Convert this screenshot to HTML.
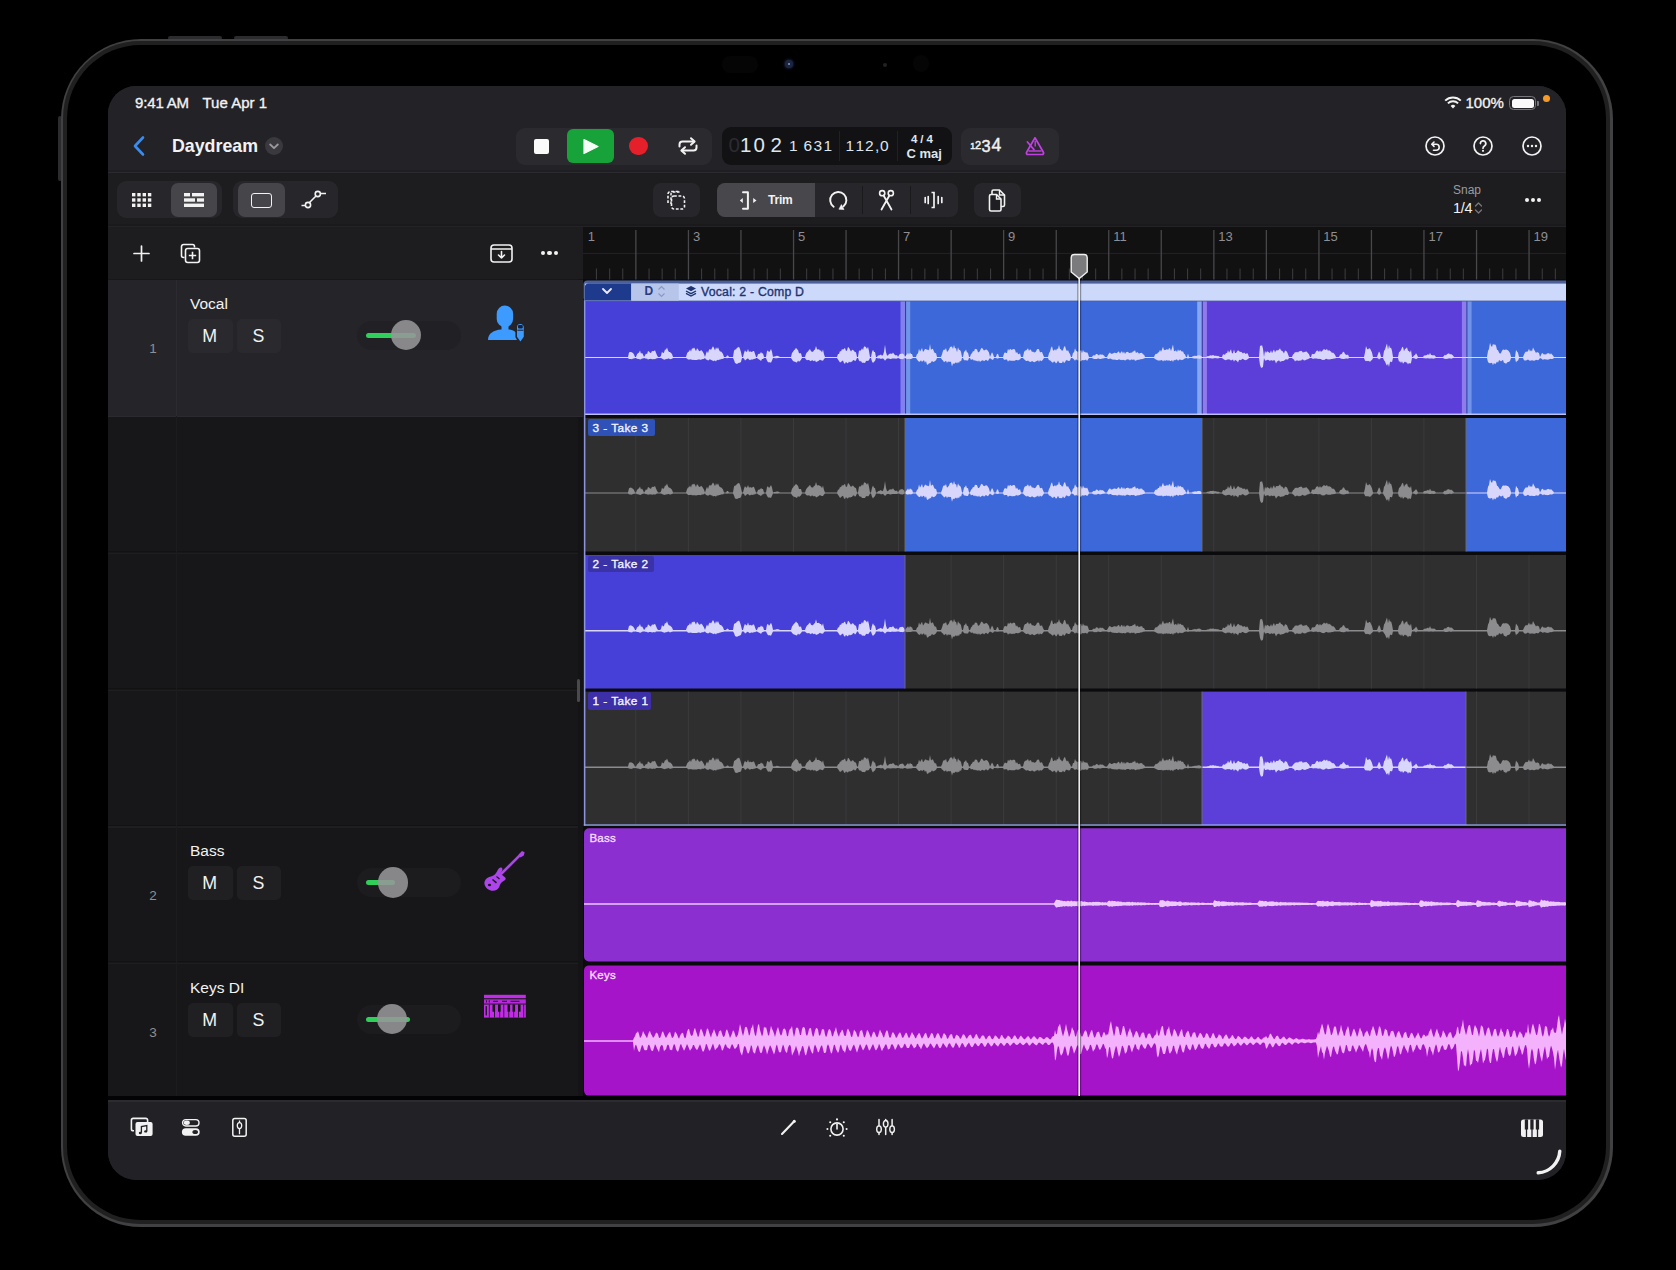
<!DOCTYPE html><html><head><meta charset="utf-8"><style>html,body{margin:0;padding:0;background:#000;width:1676px;height:1270px;overflow:hidden;position:relative;font-family:"Liberation Sans",sans-serif;}</style></head><body><div style="position:absolute;left:168px;top:36px;width:54px;height:4px;background:#2c2c2e;border-radius:2px;"></div><div style="position:absolute;left:234px;top:36px;width:54px;height:4px;background:#2c2c2e;border-radius:2px;"></div><div style="position:absolute;left:57.5px;top:116px;width:4px;height:65px;background:#2c2c2e;border-radius:2px;"></div><div style="position:absolute;left:60.5px;top:38.5px;width:1552px;height:1188px;border-radius:80px;background:#414143;"></div><div style="position:absolute;left:63.3px;top:41.3px;width:1546.4px;height:1182.4px;border-radius:77px;background:#202021;"></div><div style="position:absolute;left:66.8px;top:44.8px;width:1539.4px;height:1175.4px;border-radius:73.5px;background:#000;"></div><div style="position:absolute;left:785px;top:60px;width:8px;height:8px;background:#1c2540;border-radius:50%;box-shadow:0 0 3px #2a3a70;"></div><div style="position:absolute;left:788px;top:63px;width:2px;height:2px;background:#8898c0;border-radius:50%;"></div><div style="position:absolute;left:883px;top:63px;width:4px;height:4px;background:#222;border-radius:50%;"></div><div style="position:absolute;left:722px;top:56px;width:36px;height:17px;background:#050505;border-radius:8px;"></div><div style="position:absolute;left:913px;top:55px;width:16px;height:17px;background:#050505;border-radius:8px;"></div><div style="position:absolute;left:108px;top:86px;width:1458px;height:1094px;border-radius:28px;overflow:hidden;background:#232327;"><div style="position:absolute;left:-108px;top:-86px;width:1676px;height:1270px;"><div style="position:absolute;left:108px;top:86px;width:1458px;height:86px;background:#232327;"></div><div style="position:absolute;left:108px;top:169.5px;width:1458px;height:2.5px;background:#1f1f23;"></div><div style="position:absolute;left:108px;top:172px;width:1458px;height:1.2px;background:#2b2b2f;"></div><div style="position:absolute;left:108px;top:173.2px;width:1458px;height:52.8px;background:#1d1d1f;"></div><div style="position:absolute;left:108px;top:223.9px;width:1458px;height:1.8px;background:#1a1a1c;"></div><div style="position:absolute;left:108px;top:225.9px;width:1458px;height:1.2px;background:#232325;"></div><div style="position:absolute;left:108px;top:227.1px;width:475px;height:52.4px;background:#1d1d1f;"></div><div style="position:absolute;left:583px;top:227px;width:983px;height:52px;background:#111112;"></div><div style="position:absolute;left:108px;top:279px;width:470px;height:821px;background:#171719;"></div><div style="position:absolute;left:577.6px;top:279px;width:6px;height:821px;background:#141416;"></div><div style="position:absolute;left:583.3px;top:279px;width:982.7px;height:821px;background:#0b0b0e;"></div><div style="position:absolute;left:108px;top:1096px;width:1458px;height:4px;background:#030305;"></div><div style="position:absolute;left:108px;top:1100px;width:1458px;height:80px;background:#222226;"></div><div style="position:absolute;left:108px;top:1100px;width:1458px;height:1.6px;background:#2c2c30;"></div><div style="position:absolute;left:135px;top:94px;white-space:nowrap;font-family:'Liberation Sans',sans-serif;font-size:15px;color:#f2f2f2;letter-spacing:-0.1px;-webkit-text-stroke:0.35px currentColor;">9:41&#8201;AM</div><div style="position:absolute;left:202.5px;top:94px;white-space:nowrap;font-family:'Liberation Sans',sans-serif;font-size:15px;color:#f2f2f2;letter-spacing:0px;-webkit-text-stroke:0.35px currentColor;">Tue Apr 1</div><svg style="position:absolute;left:1444px;top:96px;" width="18" height="13" viewBox="0 0 18 13"><path d="M9 12.5 L6.6 9.9 A3.4 3.4 0 0 1 11.4 9.9 Z" fill="#f2f2f2"/><path d="M3.9 7.4 A7.3 7.3 0 0 1 14.1 7.4" stroke="#f2f2f2" stroke-width="2" fill="none"/><path d="M1.2 4.6 A11.2 11.2 0 0 1 16.8 4.6" stroke="#f2f2f2" stroke-width="2" fill="none"/></svg><div style="position:absolute;left:1465.5px;top:94px;white-space:nowrap;font-family:'Liberation Sans',sans-serif;font-size:15px;color:#f2f2f2;-webkit-text-stroke:0.35px currentColor;">100%</div><div style="position:absolute;left:1509px;top:96px;width:27px;height:14px;box-sizing:border-box;border:1.5px solid #77777b;border-radius:4.5px;"></div><div style="position:absolute;left:1511.5px;top:98.5px;width:22px;height:9px;background:#fafafa;border-radius:2.5px;"></div><div style="position:absolute;left:1537px;top:100.5px;width:2px;height:5px;background:#77777b;border-radius:0 1px 1px 0;"></div><div style="position:absolute;left:1543px;top:95px;width:7px;height:7px;background:#f39a2b;border-radius:50%;"></div><svg style="position:absolute;left:130px;top:135px;" width="18" height="22" viewBox="0 0 18 22"><path d="M13 2.5 L5 11 L13 19.5" stroke="#3b8cf0" stroke-width="2.6" fill="none" stroke-linecap="round" stroke-linejoin="round"/></svg><div style="position:absolute;left:172px;top:135.5px;white-space:nowrap;font-family:'Liberation Sans',sans-serif;font-size:17.8px;color:#f2f2f2;font-weight:bold;">Daydream</div><div style="position:absolute;left:265px;top:137px;width:18px;height:18px;background:#3a3a3e;border-radius:50%;"></div><svg style="position:absolute;left:265px;top:137px;" width="18" height="18" viewBox="0 0 18 18"><path d="M5.2 7.5 L9 11.2 L12.8 7.5" stroke="#9a9aa0" stroke-width="1.8" fill="none" stroke-linecap="round" stroke-linejoin="round"/></svg><div style="position:absolute;left:516px;top:128px;width:196px;height:37px;background:#2b2b2f;border-radius:9px;"></div><div style="position:absolute;left:533.5px;top:138.5px;width:15px;height:15px;background:#fafafa;border-radius:2px;"></div><div style="position:absolute;left:567px;top:129px;width:47px;height:34px;background:#17a23a;border-radius:6px;"></div><svg style="position:absolute;left:582px;top:138px;" width="18" height="17" viewBox="0 0 18 17"><path d="M2 1.5 L16 8.5 L2 15.5 Z" fill="#f4fff6" stroke="#f4fff6" stroke-width="1.2" stroke-linejoin="round"/></svg><div style="position:absolute;left:629.4px;top:136.8px;width:18.5px;height:18.5px;background:#e5202b;border-radius:50%;"></div><svg style="position:absolute;left:676px;top:136px;" width="24" height="20" viewBox="0 0 24 20"><path d="M3.5 10.5 V8.5 A3 3 0 0 1 6.5 5.5 H18" stroke="#f2f2f2" stroke-width="2" fill="none" stroke-linecap="round"/><path d="M15 2.2 L18.6 5.5 L15 8.8" stroke="#f2f2f2" stroke-width="2" fill="none" stroke-linecap="round" stroke-linejoin="round"/><path d="M20.5 9.5 V11.5 A3 3 0 0 1 17.5 14.5 H6" stroke="#f2f2f2" stroke-width="2" fill="none" stroke-linecap="round"/><path d="M9 11.2 L5.4 14.5 L9 17.8" stroke="#f2f2f2" stroke-width="2" fill="none" stroke-linecap="round" stroke-linejoin="round"/></svg><div style="position:absolute;left:722px;top:127px;width:230px;height:38px;background:#121214;border-radius:9px;"></div><div style="position:absolute;left:728.5px;top:135.2px;white-space:nowrap;font-family:'Liberation Sans',sans-serif;font-size:20.5px;color:#2a2c31;line-height:1;">0</div><div style="position:absolute;left:740px;top:135.2px;white-space:nowrap;font-family:'Liberation Sans',sans-serif;font-size:20.5px;color:#dfe6ee;line-height:1;">1</div><div style="position:absolute;left:753.5px;top:135.2px;white-space:nowrap;font-family:'Liberation Sans',sans-serif;font-size:20.5px;color:#dfe6ee;line-height:1;">0</div><div style="position:absolute;left:770.5px;top:135.2px;white-space:nowrap;font-family:'Liberation Sans',sans-serif;font-size:20.5px;color:#dfe6ee;line-height:1;">2</div><div style="position:absolute;left:789px;top:138px;white-space:nowrap;font-family:'Liberation Sans',sans-serif;font-size:15.5px;color:#dfe6ee;line-height:1;">1</div><div style="position:absolute;left:803.5px;top:138px;white-space:nowrap;font-family:'Liberation Sans',sans-serif;font-size:15.5px;color:#dfe6ee;line-height:1;">6</div><div style="position:absolute;left:813.5px;top:138px;white-space:nowrap;font-family:'Liberation Sans',sans-serif;font-size:15.5px;color:#dfe6ee;line-height:1;">3</div><div style="position:absolute;left:823.5px;top:138px;white-space:nowrap;font-family:'Liberation Sans',sans-serif;font-size:15.5px;color:#dfe6ee;line-height:1;">1</div><div style="position:absolute;left:845.5px;top:138px;white-space:nowrap;font-family:'Liberation Sans',sans-serif;font-size:15.5px;color:#dfe6ee;line-height:1;">1</div><div style="position:absolute;left:855.5px;top:138px;white-space:nowrap;font-family:'Liberation Sans',sans-serif;font-size:15.5px;color:#dfe6ee;line-height:1;">1</div><div style="position:absolute;left:865px;top:138px;white-space:nowrap;font-family:'Liberation Sans',sans-serif;font-size:15.5px;color:#dfe6ee;line-height:1;">2</div><div style="position:absolute;left:875px;top:138px;white-space:nowrap;font-family:'Liberation Sans',sans-serif;font-size:15.5px;color:#dfe6ee;line-height:1;">,</div><div style="position:absolute;left:880px;top:138px;white-space:nowrap;font-family:'Liberation Sans',sans-serif;font-size:15.5px;color:#dfe6ee;line-height:1;">0</div><div style="position:absolute;left:839px;top:131px;width:1px;height:30px;background:#202124;"></div><div style="position:absolute;left:896.5px;top:131px;width:1px;height:30px;background:#202124;"></div><div style="position:absolute;left:911px;top:133.5px;white-space:nowrap;font-family:'Liberation Sans',sans-serif;font-size:11.5px;color:#dfe6ee;font-weight:bold;line-height:1;letter-spacing:0.3px;">4&#8201;/&#8201;4</div><div style="position:absolute;left:906.5px;top:146.5px;white-space:nowrap;font-family:'Liberation Sans',sans-serif;font-size:13px;color:#dfe6ee;font-weight:bold;line-height:1;">C maj</div><div style="position:absolute;left:961px;top:128px;width:98px;height:37px;background:#2b2b2f;border-radius:9px;"></div><div style="position:absolute;left:970.2px;top:141.8px;white-space:nowrap;font-family:'Liberation Sans',sans-serif;font-size:8.8px;color:#f2f2f2;line-height:1;-webkit-text-stroke:0.45px currentColor;">1</div><div style="position:absolute;left:975px;top:140.4px;white-space:nowrap;font-family:'Liberation Sans',sans-serif;font-size:11px;color:#f2f2f2;line-height:1;-webkit-text-stroke:0.45px currentColor;">2</div><div style="position:absolute;left:981.6px;top:137.8px;white-space:nowrap;font-family:'Liberation Sans',sans-serif;font-size:16.3px;color:#f2f2f2;line-height:1;-webkit-text-stroke:0.45px currentColor;">3</div><div style="position:absolute;left:991.4px;top:137.1px;white-space:nowrap;font-family:'Liberation Sans',sans-serif;font-size:17.5px;color:#f2f2f2;line-height:1;-webkit-text-stroke:0.45px currentColor;">4</div><svg style="position:absolute;left:1024px;top:135px;" width="23" height="22" viewBox="0 0 23 22"><path d="M11 2.8 L2.6 17.2 A1.5 1.5 0 0 0 3.9 19.5 H18.1 A1.5 1.5 0 0 0 19.4 17.2 Z" stroke="#c23fe3" stroke-width="1.7" fill="none" stroke-linejoin="round"/><path d="M4.5 15.9 H17.5" stroke="#c23fe3" stroke-width="1.5"/><path d="M3.4 7 L10 14.6" stroke="#c23fe3" stroke-width="1.7" stroke-linecap="round"/><path d="M11.2 6.5 V11" stroke="#c23fe3" stroke-width="1.4" stroke-linecap="round"/></svg><svg style="position:absolute;left:1423.7px;top:135.2px;" width="22" height="22" viewBox="0 0 22 22"><circle cx="11" cy="11" r="9" stroke="#f2f2f2" stroke-width="1.7" fill="none"/><path d="M8.3 9.2 H12.2 A3 3 0 0 1 12.2 15.2 H9.5" stroke="#f2f2f2" stroke-width="1.6" fill="none" stroke-linecap="round"/><path d="M10 7 L7.8 9.2 L10 11.4" stroke="#f2f2f2" stroke-width="1.6" fill="none" stroke-linecap="round" stroke-linejoin="round"/></svg><svg style="position:absolute;left:1472px;top:135.2px;" width="22" height="22" viewBox="0 0 22 22"><circle cx="11" cy="11" r="9" stroke="#f2f2f2" stroke-width="1.7" fill="none"/><path d="M8.4 8.6 A2.7 2.7 0 1 1 12.4 10.9 C11.4 11.5 11 12 11 13.2" stroke="#f2f2f2" stroke-width="1.7" fill="none" stroke-linecap="round"/><circle cx="11" cy="15.8" r="1.1" fill="#f2f2f2"/></svg><svg style="position:absolute;left:1521px;top:135.2px;" width="22" height="22" viewBox="0 0 22 22"><circle cx="11" cy="11" r="9" stroke="#f2f2f2" stroke-width="1.7" fill="none"/><circle cx="7" cy="11" r="1.2" fill="#f2f2f2"/><circle cx="11" cy="11" r="1.2" fill="#f2f2f2"/><circle cx="15" cy="11" r="1.2" fill="#f2f2f2"/></svg><div style="position:absolute;left:117px;top:181px;width:105px;height:37px;background:#27272b;border-radius:9px;"></div><div style="position:absolute;left:171px;top:183px;width:46px;height:33.5px;background:#46464a;border-radius:7px;"></div><svg style="position:absolute;left:132px;top:193px;" width="20" height="14" viewBox="0 0 20 14"><rect x="0.0" y="0.0" width="3.4" height="3.4" fill="#f2f2f2"/><rect x="5.3" y="0.0" width="3.4" height="3.4" fill="#f2f2f2"/><rect x="10.6" y="0.0" width="3.4" height="3.4" fill="#f2f2f2"/><rect x="15.9" y="0.0" width="3.4" height="3.4" fill="#f2f2f2"/><rect x="0.0" y="5.3" width="3.4" height="3.4" fill="#f2f2f2"/><rect x="5.3" y="5.3" width="3.4" height="3.4" fill="#f2f2f2"/><rect x="10.6" y="5.3" width="3.4" height="3.4" fill="#f2f2f2"/><rect x="15.9" y="5.3" width="3.4" height="3.4" fill="#f2f2f2"/><rect x="0.0" y="10.6" width="3.4" height="3.4" fill="#f2f2f2"/><rect x="5.3" y="10.6" width="3.4" height="3.4" fill="#f2f2f2"/><rect x="10.6" y="10.6" width="3.4" height="3.4" fill="#f2f2f2"/><rect x="15.9" y="10.6" width="3.4" height="3.4" fill="#f2f2f2"/></svg><svg style="position:absolute;left:183.5px;top:193px;" width="20" height="14" viewBox="0 0 20 14"><rect x="0" y="0" width="6" height="3.4" fill="#f2f2f2"/><rect x="8" y="0" width="12" height="3.4" fill="#f2f2f2"/><rect x="0" y="5.3" width="11" height="3.4" fill="#f2f2f2"/><rect x="13" y="5.3" width="7" height="3.4" fill="#f2f2f2"/><rect x="0" y="10.6" width="20" height="3.4" fill="#f2f2f2"/></svg><div style="position:absolute;left:233px;top:181px;width:105px;height:37px;background:#27272b;border-radius:9px;"></div><div style="position:absolute;left:238px;top:183px;width:46.5px;height:33.5px;background:#46464a;border-radius:7px;"></div><div style="position:absolute;left:251px;top:192.5px;width:20.5px;height:15.5px;box-sizing:border-box;border:1.8px solid #f2f2f2;border-radius:3px;"></div><svg style="position:absolute;left:300px;top:190px;" width="28" height="19" viewBox="0 0 28 19"><path d="M1.5 15.5 H6" stroke="#f2f2f2" stroke-width="1.6"/><path d="M20.5 3.5 H26" stroke="#f2f2f2" stroke-width="1.6"/><path d="M9 13 L16 6" stroke="#f2f2f2" stroke-width="1.6"/><circle cx="8" cy="15" r="2.6" stroke="#f2f2f2" stroke-width="1.6" fill="none"/><circle cx="17.8" cy="4" r="2.6" stroke="#f2f2f2" stroke-width="1.6" fill="none"/></svg><div style="position:absolute;left:653px;top:183px;width:47px;height:34px;background:#27272b;border-radius:8px;"></div><svg style="position:absolute;left:666px;top:190px;" width="21" height="21" viewBox="0 0 21 21"><path d="M5 14 V4 A2 2 0 0 1 7 2 H15" stroke="#f2f2f2" stroke-width="1.5" fill="none" stroke-dasharray="2.6 1.6"/><rect x="5.5" y="6" width="13" height="13" rx="2.5" stroke="#f2f2f2" stroke-width="1.6" fill="none" stroke-dasharray="2.8 1.7"/><path d="M2 13 V4 A2.5 2.5 0 0 1 4.5 1.5 H13" stroke="#f2f2f2" stroke-width="1.6" fill="none" stroke-dasharray="2.8 1.7"/></svg><div style="position:absolute;left:717px;top:183px;width:240.5px;height:34px;background:#27272b;border-radius:8px;"></div><div style="position:absolute;left:717px;top:183px;width:97.5px;height:34px;background:#48484c;border-radius:8px 0 0 8px;"></div><svg style="position:absolute;left:738px;top:190px;" width="20" height="20" viewBox="0 0 20 20"><path d="M5 2.3 H9.9 V18.8 H5" stroke="#f2f2f2" stroke-width="2" fill="none" stroke-linejoin="round" stroke-linecap="round"/><path d="M1.8 10.5 L4.8 8 V13 Z" fill="#f2f2f2"/><path d="M18.5 10.5 L15.2 8 V13 Z" fill="#f2f2f2"/></svg><div style="position:absolute;left:768px;top:193.5px;white-space:nowrap;font-family:'Liberation Sans',sans-serif;font-size:12px;color:#f2f2f2;font-weight:bold;letter-spacing:-0.2px;line-height:1;">Trim</div><svg style="position:absolute;left:825px;top:187px;" width="28" height="26" viewBox="0 0 28 26"><path d="M8.65 19.74 A8.1 8.1 0 1 1 18.5 19.3" stroke="#f2f2f2" stroke-width="1.9" fill="none" stroke-linecap="round"/><path d="M16.4 17.6 L13.9 22.2 L19 22.6 Z" fill="#f2f2f2" stroke="#f2f2f2" stroke-width="0.6" stroke-linejoin="round"/></svg><div style="position:absolute;left:862px;top:186px;width:1px;height:28px;background:#1a1a1d;"></div><svg style="position:absolute;left:876px;top:189px;" width="21" height="22" viewBox="0 0 21 22"><circle cx="6.2" cy="4.2" r="2.6" stroke="#f2f2f2" stroke-width="1.6" fill="none"/><circle cx="14.8" cy="4.2" r="2.6" stroke="#f2f2f2" stroke-width="1.6" fill="none"/><path d="M7.6 6.5 L15.5 20.5 M13.4 6.5 L5.5 20.5" stroke="#f2f2f2" stroke-width="1.8" fill="none" stroke-linecap="round"/></svg><div style="position:absolute;left:910px;top:186px;width:1px;height:28px;background:#1a1a1d;"></div><svg style="position:absolute;left:923px;top:190px;" width="22" height="20" viewBox="0 0 22 20"><path d="M8.5 2.5 H11 V17.5 H8.5" stroke="#f2f2f2" stroke-width="1.7" fill="none"/><path d="M2.2 7.5 V12.5 M5.2 6.5 V13.5 M15.2 6.5 V13.5 M18.8 7.5 V12.5" stroke="#f2f2f2" stroke-width="1.7" stroke-linecap="round"/></svg><div style="position:absolute;left:973.5px;top:183px;width:47px;height:34px;background:#27272b;border-radius:8px;"></div><svg style="position:absolute;left:986px;top:188px;" width="22" height="25" viewBox="0 0 22 25"><path d="M6 6.5 V3.5 A1.5 1.5 0 0 1 7.5 2 H13.5 L18.5 7 V17 A1.5 1.5 0 0 1 17 18.5 H15" stroke="#f2f2f2" stroke-width="1.6" fill="none" stroke-linejoin="round"/><path d="M3.5 8 A1.5 1.5 0 0 1 5 6.5 H10.5 L15 11 V21.5 A1.5 1.5 0 0 1 13.5 23 H5 A1.5 1.5 0 0 1 3.5 21.5 Z" stroke="#f2f2f2" stroke-width="1.6" fill="#1f1f23" stroke-linejoin="round"/><path d="M10.5 6.5 V11 H15" stroke="#f2f2f2" stroke-width="1.4" fill="none"/><path d="M13.5 2 V7 H18.5" stroke="#f2f2f2" stroke-width="1.4" fill="none"/></svg><div style="position:absolute;left:1453px;top:183px;white-space:nowrap;font-family:'Liberation Sans',sans-serif;font-size:12px;color:#9b9ba1;">Snap</div><div style="position:absolute;left:1453px;top:199.5px;white-space:nowrap;font-family:'Liberation Sans',sans-serif;font-size:14.5px;color:#f2f2f2;letter-spacing:-0.3px;">1/4</div><svg style="position:absolute;left:1474px;top:201px;" width="9" height="14" viewBox="0 0 9 14"><path d="M1.5 5 L4.5 2 L7.5 5 M1.5 9 L4.5 12 L7.5 9" stroke="#77777c" stroke-width="1.3" fill="none" stroke-linecap="round" stroke-linejoin="round"/></svg><div style="position:absolute;left:1524.5px;top:197.7px;width:4.2px;height:4.2px;background:#f2f2f2;border-radius:50%;"></div><div style="position:absolute;left:1530.7px;top:197.7px;width:4.2px;height:4.2px;background:#f2f2f2;border-radius:50%;"></div><div style="position:absolute;left:1536.9px;top:197.7px;width:4.2px;height:4.2px;background:#f2f2f2;border-radius:50%;"></div><svg style="position:absolute;left:133px;top:245px;" width="17" height="17" viewBox="0 0 17 17"><path d="M8.5 1 V16 M1 8.5 H16" stroke="#f2f2f2" stroke-width="1.7" stroke-linecap="round"/></svg><svg style="position:absolute;left:180px;top:243px;" width="22" height="22" viewBox="0 0 22 22"><path d="M4.5 14.5 H3.5 A2 2 0 0 1 1.5 12.5 V3.5 A2 2 0 0 1 3.5 1.5 H12.5 A2 2 0 0 1 14.5 3.5 V4.5" stroke="#f2f2f2" stroke-width="1.6" fill="none"/><rect x="5.5" y="5.5" width="14" height="14" rx="2.2" stroke="#f2f2f2" stroke-width="1.6" fill="none"/><path d="M12.5 8.8 V16.2 M8.8 12.5 H16.2" stroke="#f2f2f2" stroke-width="1.6"/></svg><svg style="position:absolute;left:490px;top:244px;" width="23" height="19" viewBox="0 0 23 19"><rect x="1" y="1" width="21" height="17" rx="3" stroke="#f2f2f2" stroke-width="1.6" fill="none"/><path d="M1 5 H22" stroke="#f2f2f2" stroke-width="1.4"/><path d="M11.5 7.5 V14 M8.5 11 L11.5 14 L14.5 11" stroke="#f2f2f2" stroke-width="1.6" fill="none" stroke-linecap="round" stroke-linejoin="round"/></svg><div style="position:absolute;left:540.8px;top:250.9px;width:4.4px;height:4.4px;background:#f2f2f2;border-radius:50%;"></div><div style="position:absolute;left:547.4px;top:250.9px;width:4.4px;height:4.4px;background:#f2f2f2;border-radius:50%;"></div><div style="position:absolute;left:554.0px;top:250.9px;width:4.4px;height:4.4px;background:#f2f2f2;border-radius:50%;"></div><svg style="position:absolute;left:583px;top:227px;" width="983" height="53" viewBox="0 0 983 53"><rect x="0" y="25.9" width="983" height="1" fill="#242426"/><rect x="12.9" y="41.5" width="1.1" height="11.0" fill="#3a3a3d"/><rect x="26.1" y="41.5" width="1.1" height="11.0" fill="#3a3a3d"/><rect x="39.2" y="41.5" width="1.1" height="11.0" fill="#3a3a3d"/><rect x="52.2" y="3" width="1.3" height="49.5" fill="#48484b"/><rect x="65.5" y="41.5" width="1.1" height="11.0" fill="#3a3a3d"/><rect x="78.6" y="41.5" width="1.1" height="11.0" fill="#3a3a3d"/><rect x="91.7" y="41.5" width="1.1" height="11.0" fill="#3a3a3d"/><rect x="104.8" y="3" width="1.3" height="49.5" fill="#48484b"/><rect x="118.0" y="41.5" width="1.1" height="11.0" fill="#3a3a3d"/><rect x="131.2" y="41.5" width="1.1" height="11.0" fill="#3a3a3d"/><rect x="144.3" y="41.5" width="1.1" height="11.0" fill="#3a3a3d"/><rect x="157.3" y="3" width="1.3" height="49.5" fill="#48484b"/><rect x="170.6" y="41.5" width="1.1" height="11.0" fill="#3a3a3d"/><rect x="183.7" y="41.5" width="1.1" height="11.0" fill="#3a3a3d"/><rect x="196.8" y="41.5" width="1.1" height="11.0" fill="#3a3a3d"/><rect x="209.9" y="3" width="1.3" height="49.5" fill="#48484b"/><rect x="223.1" y="41.5" width="1.1" height="11.0" fill="#3a3a3d"/><rect x="236.2" y="41.5" width="1.1" height="11.0" fill="#3a3a3d"/><rect x="249.4" y="41.5" width="1.1" height="11.0" fill="#3a3a3d"/><rect x="262.4" y="3" width="1.3" height="49.5" fill="#48484b"/><rect x="275.6" y="41.5" width="1.1" height="11.0" fill="#3a3a3d"/><rect x="288.8" y="41.5" width="1.1" height="11.0" fill="#3a3a3d"/><rect x="301.9" y="41.5" width="1.1" height="11.0" fill="#3a3a3d"/><rect x="314.9" y="3" width="1.3" height="49.5" fill="#48484b"/><rect x="328.2" y="41.5" width="1.1" height="11.0" fill="#3a3a3d"/><rect x="341.3" y="41.5" width="1.1" height="11.0" fill="#3a3a3d"/><rect x="354.4" y="41.5" width="1.1" height="11.0" fill="#3a3a3d"/><rect x="367.5" y="3" width="1.3" height="49.5" fill="#48484b"/><rect x="380.7" y="41.5" width="1.1" height="11.0" fill="#3a3a3d"/><rect x="393.8" y="41.5" width="1.1" height="11.0" fill="#3a3a3d"/><rect x="407.0" y="41.5" width="1.1" height="11.0" fill="#3a3a3d"/><rect x="420.0" y="3" width="1.3" height="49.5" fill="#48484b"/><rect x="433.3" y="41.5" width="1.1" height="11.0" fill="#3a3a3d"/><rect x="446.4" y="41.5" width="1.1" height="11.0" fill="#3a3a3d"/><rect x="459.5" y="41.5" width="1.1" height="11.0" fill="#3a3a3d"/><rect x="472.6" y="3" width="1.3" height="49.5" fill="#48484b"/><rect x="485.8" y="41.5" width="1.1" height="11.0" fill="#3a3a3d"/><rect x="498.9" y="41.5" width="1.1" height="11.0" fill="#3a3a3d"/><rect x="512.1" y="41.5" width="1.1" height="11.0" fill="#3a3a3d"/><rect x="525.1" y="3" width="1.3" height="49.5" fill="#48484b"/><rect x="538.3" y="41.5" width="1.1" height="11.0" fill="#3a3a3d"/><rect x="551.5" y="41.5" width="1.1" height="11.0" fill="#3a3a3d"/><rect x="564.6" y="41.5" width="1.1" height="11.0" fill="#3a3a3d"/><rect x="577.6" y="3" width="1.3" height="49.5" fill="#48484b"/><rect x="590.9" y="41.5" width="1.1" height="11.0" fill="#3a3a3d"/><rect x="604.0" y="41.5" width="1.1" height="11.0" fill="#3a3a3d"/><rect x="617.1" y="41.5" width="1.1" height="11.0" fill="#3a3a3d"/><rect x="630.2" y="3" width="1.3" height="49.5" fill="#48484b"/><rect x="643.4" y="41.5" width="1.1" height="11.0" fill="#3a3a3d"/><rect x="656.5" y="41.5" width="1.1" height="11.0" fill="#3a3a3d"/><rect x="669.7" y="41.5" width="1.1" height="11.0" fill="#3a3a3d"/><rect x="682.7" y="3" width="1.3" height="49.5" fill="#48484b"/><rect x="696.0" y="41.5" width="1.1" height="11.0" fill="#3a3a3d"/><rect x="709.1" y="41.5" width="1.1" height="11.0" fill="#3a3a3d"/><rect x="722.2" y="41.5" width="1.1" height="11.0" fill="#3a3a3d"/><rect x="735.3" y="3" width="1.3" height="49.5" fill="#48484b"/><rect x="748.5" y="41.5" width="1.1" height="11.0" fill="#3a3a3d"/><rect x="761.6" y="41.5" width="1.1" height="11.0" fill="#3a3a3d"/><rect x="774.8" y="41.5" width="1.1" height="11.0" fill="#3a3a3d"/><rect x="787.8" y="3" width="1.3" height="49.5" fill="#48484b"/><rect x="801.0" y="41.5" width="1.1" height="11.0" fill="#3a3a3d"/><rect x="814.2" y="41.5" width="1.1" height="11.0" fill="#3a3a3d"/><rect x="827.3" y="41.5" width="1.1" height="11.0" fill="#3a3a3d"/><rect x="840.3" y="3" width="1.3" height="49.5" fill="#48484b"/><rect x="853.6" y="41.5" width="1.1" height="11.0" fill="#3a3a3d"/><rect x="866.7" y="41.5" width="1.1" height="11.0" fill="#3a3a3d"/><rect x="879.8" y="41.5" width="1.1" height="11.0" fill="#3a3a3d"/><rect x="892.9" y="3" width="1.3" height="49.5" fill="#48484b"/><rect x="906.1" y="41.5" width="1.1" height="11.0" fill="#3a3a3d"/><rect x="919.2" y="41.5" width="1.1" height="11.0" fill="#3a3a3d"/><rect x="932.4" y="41.5" width="1.1" height="11.0" fill="#3a3a3d"/><rect x="945.4" y="3" width="1.3" height="49.5" fill="#48484b"/><rect x="958.7" y="41.5" width="1.1" height="11.0" fill="#3a3a3d"/><rect x="971.8" y="41.5" width="1.1" height="11.0" fill="#3a3a3d"/></svg><div style="position:absolute;left:587.8px;top:229px;white-space:nowrap;font-family:'Liberation Sans',sans-serif;font-size:13px;color:#8e8e93;">1</div><div style="position:absolute;left:692.88px;top:229px;white-space:nowrap;font-family:'Liberation Sans',sans-serif;font-size:13px;color:#8e8e93;">3</div><div style="position:absolute;left:797.9599999999999px;top:229px;white-space:nowrap;font-family:'Liberation Sans',sans-serif;font-size:13px;color:#8e8e93;">5</div><div style="position:absolute;left:903.04px;top:229px;white-space:nowrap;font-family:'Liberation Sans',sans-serif;font-size:13px;color:#8e8e93;">7</div><div style="position:absolute;left:1008.1199999999999px;top:229px;white-space:nowrap;font-family:'Liberation Sans',sans-serif;font-size:13px;color:#8e8e93;">9</div><div style="position:absolute;left:1113.1999999999998px;top:229px;white-space:nowrap;font-family:'Liberation Sans',sans-serif;font-size:13px;color:#8e8e93;">11</div><div style="position:absolute;left:1218.28px;top:229px;white-space:nowrap;font-family:'Liberation Sans',sans-serif;font-size:13px;color:#8e8e93;">13</div><div style="position:absolute;left:1323.36px;top:229px;white-space:nowrap;font-family:'Liberation Sans',sans-serif;font-size:13px;color:#8e8e93;">15</div><div style="position:absolute;left:1428.44px;top:229px;white-space:nowrap;font-family:'Liberation Sans',sans-serif;font-size:13px;color:#8e8e93;">17</div><div style="position:absolute;left:1533.52px;top:229px;white-space:nowrap;font-family:'Liberation Sans',sans-serif;font-size:13px;color:#8e8e93;">19</div><div style="position:absolute;left:108px;top:279.5px;width:475.29999999999995px;height:136.5px;background:#252529;"></div><div style="position:absolute;left:108px;top:416.0px;width:475.29999999999995px;height:1.2px;background:#2b2b2f;"></div><div style="position:absolute;left:108px;top:550.9px;width:470px;height:1.2px;background:#121213;"></div><div style="position:absolute;left:108px;top:552.8000000000001px;width:470px;height:1.2px;background:#1e1e20;"></div><div style="position:absolute;left:108px;top:687.7px;width:470px;height:1.2px;background:#121213;"></div><div style="position:absolute;left:108px;top:689.6000000000001px;width:470px;height:1.2px;background:#1e1e20;"></div><div style="position:absolute;left:108px;top:824.5px;width:470px;height:1.2px;background:#121213;"></div><div style="position:absolute;left:108px;top:826.4000000000001px;width:470px;height:1.2px;background:#1e1e20;"></div><div style="position:absolute;left:108px;top:961.3px;width:470px;height:1.2px;background:#121213;"></div><div style="position:absolute;left:108px;top:963.2px;width:470px;height:1.2px;background:#1e1e20;"></div><div style="position:absolute;left:176.3px;top:279.5px;width:1px;height:816.5px;background:#1c1c1e;"></div><div style="position:absolute;left:176.3px;top:279.5px;width:1px;height:136.8px;background:#2c2c30;"></div><div style="position:absolute;left:577px;top:679px;width:3px;height:23px;background:#4a4a4d;border-radius:2px;"></div><div style="position:absolute;left:190px;top:295.0px;white-space:nowrap;font-family:'Liberation Sans',sans-serif;font-size:15.5px;color:#f2f2f2;">Vocal</div><div style="position:absolute;left:188px;top:319.0px;width:44.5px;height:34px;background:#2a2a2e;border-radius:5px;"></div><div style="position:absolute;left:236.8px;top:319.0px;width:43.8px;height:34px;background:#2a2a2e;border-radius:5px;"></div><div style="position:absolute;left:187px;top:326.0px;white-space:nowrap;font-family:'Liberation Sans',sans-serif;font-size:17.8px;color:#f2f2f2;width:45.5px;text-align:center;">M</div><div style="position:absolute;left:236px;top:326.0px;white-space:nowrap;font-family:'Liberation Sans',sans-serif;font-size:17.8px;color:#f2f2f2;width:45px;text-align:center;">S</div><div style="position:absolute;left:146px;top:340.5px;white-space:nowrap;font-family:'Liberation Sans',sans-serif;font-size:13.5px;color:#8e8e93;width:14px;text-align:center;">1</div><div style="position:absolute;left:356.5px;top:320.7px;width:104.5px;height:29px;background:#212125;border-radius:15px;"></div><div style="position:absolute;left:365.5px;top:332.5px;width:50.5px;height:5.4px;background:#2fcf5a;border-radius:3px;"></div><div style="position:absolute;left:390.6px;top:320.0px;width:30.4px;height:30.4px;background:rgba(150,150,152,0.88);border-radius:50%;"></div><svg style="position:absolute;left:475px;top:295px;" width="60" height="55" viewBox="0 0 60 55"><rect x="21.7" y="10.6" width="16.4" height="21.6" rx="8.2" fill="#3d9bff"/><rect x="26.5" y="30" width="7" height="6" fill="#3d9bff"/><path d="M13 45 C13 38.5 19 35 26 34.6 H34 C39 35 41.8 37.5 41.8 40 V45 Z" fill="#3d9bff"/><path d="M41.2 32.4 A4.2 4.2 0 0 1 49.6 32.4 V42 L45.4 48 L41.2 42 Z" fill="#3d9bff" stroke="#252529" stroke-width="1.6"/><rect x="43" y="30" width="4.8" height="3.6" rx="1" fill="#10223d"/><rect x="42.4" y="34.6" width="6" height="1.3" fill="#1d3a66"/></svg><div style="position:absolute;left:190px;top:842.2px;white-space:nowrap;font-family:'Liberation Sans',sans-serif;font-size:15.5px;color:#f2f2f2;">Bass</div><div style="position:absolute;left:188px;top:866.2px;width:44.5px;height:34px;background:#202023;border-radius:5px;"></div><div style="position:absolute;left:236.8px;top:866.2px;width:43.8px;height:34px;background:#202023;border-radius:5px;"></div><div style="position:absolute;left:187px;top:873.2px;white-space:nowrap;font-family:'Liberation Sans',sans-serif;font-size:17.8px;color:#f2f2f2;width:45.5px;text-align:center;">M</div><div style="position:absolute;left:236px;top:873.2px;white-space:nowrap;font-family:'Liberation Sans',sans-serif;font-size:17.8px;color:#f2f2f2;width:45px;text-align:center;">S</div><div style="position:absolute;left:146px;top:887.7px;white-space:nowrap;font-family:'Liberation Sans',sans-serif;font-size:13.5px;color:#8e8e93;width:14px;text-align:center;">2</div><div style="position:absolute;left:356.5px;top:867.9000000000001px;width:104.5px;height:29px;background:#1c1c1f;border-radius:15px;"></div><div style="position:absolute;left:365.5px;top:879.7px;width:29.5px;height:5.4px;background:#2fcf5a;border-radius:3px;"></div><div style="position:absolute;left:377.8px;top:867.2px;width:30.4px;height:30.4px;background:rgba(150,150,152,0.88);border-radius:50%;"></div><svg style="position:absolute;left:475px;top:840px;" width="60" height="60" viewBox="0 0 60 60"><path d="M26.5 33.5 L45 15.2" stroke="#ad44ec" stroke-width="2.6" stroke-linecap="round"/><path d="M43.6 14.6 L47 11 L49.6 12.2 L48.8 15.6 L45.4 17.4 Z" fill="#ad44ec"/><path d="M25.5 27.6 C27.5 27.2 28 29.5 26.8 31.2 L25.4 33.5 L30.2 37.6 C31.5 38.8 30.2 40.4 28.6 41 C26.2 42 25.2 44 24.2 47 C23 50 19 51.6 15 50.2 C11 48.6 8.7 45 9.6 41.5 C10.5 38.5 13.5 37 16 36.5 C19 36 20.5 34 22 31.5 C23 29.5 24 27.8 25.5 27.6 Z" fill="#ad44ec"/><ellipse cx="14.5" cy="45" rx="1.6" ry="1.3" fill="#171719"/><path d="M17.5 39.5 L21.5 42.8" stroke="#171719" stroke-width="1.5"/><path d="M21.5 36.5 L24.5 39" stroke="#171719" stroke-width="1.1"/></svg><div style="position:absolute;left:190px;top:979.0px;white-space:nowrap;font-family:'Liberation Sans',sans-serif;font-size:15.5px;color:#f2f2f2;">Keys DI</div><div style="position:absolute;left:188px;top:1003.0px;width:44.5px;height:34px;background:#202023;border-radius:5px;"></div><div style="position:absolute;left:236.8px;top:1003.0px;width:43.8px;height:34px;background:#202023;border-radius:5px;"></div><div style="position:absolute;left:187px;top:1010.0px;white-space:nowrap;font-family:'Liberation Sans',sans-serif;font-size:17.8px;color:#f2f2f2;width:45.5px;text-align:center;">M</div><div style="position:absolute;left:236px;top:1010.0px;white-space:nowrap;font-family:'Liberation Sans',sans-serif;font-size:17.8px;color:#f2f2f2;width:45px;text-align:center;">S</div><div style="position:absolute;left:146px;top:1024.5px;white-space:nowrap;font-family:'Liberation Sans',sans-serif;font-size:13.5px;color:#8e8e93;width:14px;text-align:center;">3</div><div style="position:absolute;left:356.5px;top:1004.7px;width:104.5px;height:29px;background:#1c1c1f;border-radius:15px;"></div><div style="position:absolute;left:365.5px;top:1016.5px;width:44.5px;height:5.4px;background:#2fcf5a;border-radius:3px;"></div><div style="position:absolute;left:376.6px;top:1004.0px;width:30.4px;height:30.4px;background:rgba(150,150,152,0.88);border-radius:50%;"></div><svg style="position:absolute;left:475px;top:985px;" width="60" height="45" viewBox="0 0 60 45"><rect x="9" y="9.8" width="41.8" height="3.4" fill="#c22ce8"/><rect x="9" y="14.3" width="41.8" height="4.3" fill="#b52ad8"/><path d="M11.5 15.2 V17.6 M14.3 15.2 V17.6 M18 16.4 H23 M27 16.4 H32 M35.5 16.4 H44.5" stroke="#3a0a48" stroke-width="1.1"/><rect x="9" y="19.5" width="41.8" height="13.1" fill="#c22ce8"/><rect x="13.85" y="19.5" width="0.9" height="13.1" fill="#171719"/><rect x="19.05" y="19.5" width="0.9" height="13.1" fill="#171719"/><rect x="24.25" y="19.5" width="0.9" height="13.1" fill="#171719"/><rect x="28.35" y="19.5" width="0.9" height="13.1" fill="#171719"/><rect x="33.35" y="19.5" width="0.9" height="13.1" fill="#171719"/><rect x="38.25" y="19.5" width="0.9" height="13.1" fill="#171719"/><rect x="43.05" y="19.5" width="0.9" height="13.1" fill="#171719"/><rect x="48.25" y="19.5" width="0.9" height="13.1" fill="#171719"/><rect x="17.5" y="19.5" width="2.6" height="7.2" fill="#171719"/><rect x="23.0" y="19.5" width="2.6" height="7.2" fill="#171719"/><rect x="32.5" y="19.5" width="2.6" height="7.2" fill="#171719"/><rect x="37.5" y="19.5" width="2.6" height="7.2" fill="#171719"/><rect x="43.0" y="19.5" width="2.6" height="7.2" fill="#171719"/><rect x="10.6" y="21" width="1.3" height="9.5" rx="0.6" fill="#171719"/></svg><svg style="position:absolute;left:0px;top:0px;pointer-events:none;" width="1676" height="1100" viewBox="0 0 1676 1100"><rect x="585" y="300.6" width="320" height="113.89999999999998" fill="#4740d8"/><rect x="905" y="300.6" width="297" height="113.89999999999998" fill="#3d68d9"/><rect x="1202" y="300.6" width="264" height="113.89999999999998" fill="#5b3fd8"/><rect x="1466" y="300.6" width="100" height="113.89999999999998" fill="#3d68d9"/><rect x="900.5" y="300.6" width="4.6" height="113.9" fill="#8d8cf2" opacity="0.85"/><rect x="905.1" y="300.6" width="1" height="113.9" fill="#2a2f8a" opacity="0.8"/><rect x="906.1" y="300.6" width="4.1" height="113.9" fill="#7a9ceb" opacity="0.85"/><rect x="1197.2" y="300.6" width="4.6" height="113.9" fill="#93b2f4" opacity="0.85"/><rect x="1201.8" y="300.6" width="1" height="113.9" fill="#2a2f8a" opacity="0.8"/><rect x="1202.8" y="300.6" width="4.1" height="113.9" fill="#9a86f0" opacity="0.85"/><rect x="1461.9" y="300.6" width="4.6" height="113.9" fill="#9a86f0" opacity="0.85"/><rect x="1466.5" y="300.6" width="1" height="113.9" fill="#2a2f8a" opacity="0.8"/><rect x="1467.5" y="300.6" width="4.1" height="113.9" fill="#7a9ceb" opacity="0.85"/><path d="M585,356.9 L586,356.9 L587,356.9 L588,356.9 L589,356.9 L590,356.9 L591,356.9 L592,356.9 L593,356.9 L594,356.9 L595,356.9 L596,356.9 L597,356.9 L598,356.9 L599,356.9 L600,356.9 L601,356.9 L602,356.9 L603,356.9 L604,356.9 L605,356.9 L606,356.9 L607,356.9 L608,356.9 L609,356.9 L610,356.9 L611,356.9 L612,356.9 L613,356.9 L614,356.9 L615,356.9 L616,356.9 L617,356.9 L618,356.9 L619,356.9 L620,356.9 L621,356.9 L622,356.9 L623,356.9 L624,356.9 L625,356.9 L626,356.9 L627,356.9 L628,356.9 L629,352.5 L630,352.1 L631,351.9 L632,352.5 L633,353.1 L634,354.4 L635,356.9 L636,356.9 L637,354.3 L638,353.3 L639,352.5 L640,350.6 L641,353.8 L642,352.7 L643,354.6 L644,356.9 L645,355.6 L646,353.6 L647,354.3 L648,351.1 L649,351.6 L650,352.8 L651,353.1 L652,350.9 L653,351.2 L654,350.9 L655,350.2 L656,352.7 L657,355.2 L658,356.9 L659,356.9 L660,356.9 L661,355.8 L662,351.6 L663,353.2 L664,352.5 L665,349.5 L666,349.8 L667,347.6 L668,350.4 L669,352.1 L670,352.0 L671,353.0 L672,354.0 L673,356.9 L674,356.9 L675,356.9 L676,356.9 L677,356.9 L678,356.9 L679,356.9 L680,356.9 L681,356.9 L682,356.9 L683,356.9 L684,356.9 L685,356.9 L686,356.9 L687,353.5 L688,351.9 L689,351.4 L690,349.5 L691,351.6 L692,348.2 L693,348.8 L694,347.5 L695,348.9 L696,351.2 L697,348.2 L698,349.3 L699,350.9 L700,351.3 L701,350.0 L702,350.7 L703,352.2 L704,354.1 L705,356.9 L706,353.6 L707,350.9 L708,353.2 L709,349.8 L710,349.0 L711,350.0 L712,348.0 L713,346.3 L714,348.0 L715,350.5 L716,347.2 L717,349.3 L718,347.2 L719,349.8 L720,351.4 L721,351.5 L722,352.4 L723,353.9 L724,356.9 L725,356.9 L726,356.9 L727,355.4 L728,355.5 L729,356.9 L730,356.9 L731,356.9 L732,356.9 L733,356.9 L734,350.8 L735,349.6 L736,349.5 L737,347.8 L738,347.6 L739,346.8 L740,348.9 L741,352.2 L742,356.9 L743,356.9 L744,352.9 L745,350.2 L746,351.8 L747,351.8 L748,349.0 L749,352.1 L750,351.2 L751,351.7 L752,352.0 L753,351.0 L754,351.0 L755,353.8 L756,356.9 L757,356.9 L758,354.2 L759,353.8 L760,353.8 L761,352.1 L762,353.4 L763,353.2 L764,356.9 L765,356.9 L766,356.9 L767,351.1 L768,350.4 L769,352.3 L770,350.9 L771,349.1 L772,351.7 L773,356.9 L774,356.4 L775,356.5 L776,356.1 L777,355.8 L778,356.0 L779,356.4 L780,356.9 L781,356.9 L782,356.9 L783,356.9 L784,356.9 L785,356.9 L786,356.9 L787,356.9 L788,356.9 L789,356.9 L790,356.9 L791,356.9 L792,353.0 L793,351.7 L794,350.2 L795,349.4 L796,347.7 L797,349.2 L798,350.0 L799,353.2 L800,353.3 L801,353.2 L802,356.9 L803,356.9 L804,356.9 L805,356.9 L806,353.8 L807,352.2 L808,351.4 L809,350.1 L810,348.9 L811,351.2 L812,351.8 L813,351.7 L814,350.2 L815,349.5 L816,345.9 L817,349.3 L818,349.5 L819,349.2 L820,350.5 L821,350.4 L822,352.4 L823,349.6 L824,354.3 L825,356.9 L826,356.9 L827,356.9 L828,356.9 L829,356.9 L830,356.9 L831,356.9 L832,356.9 L833,356.9 L834,356.9 L835,356.9 L836,356.9 L837,356.9 L838,354.1 L839,353.9 L840,351.1 L841,351.4 L842,349.1 L843,349.8 L844,348.7 L845,347.9 L846,351.0 L847,350.6 L848,347.0 L849,347.8 L850,349.7 L851,351.4 L852,350.0 L853,349.7 L854,350.9 L855,352.1 L856,352.3 L857,356.9 L858,356.9 L859,350.6 L860,350.8 L861,350.3 L862,348.3 L863,349.9 L864,346.5 L865,346.5 L866,347.3 L867,348.9 L868,346.8 L869,351.0 L870,356.9 L871,356.9 L872,352.1 L873,349.8 L874,352.0 L875,352.1 L876,356.9 L877,356.9 L878,355.6 L879,355.4 L880,354.9 L881,354.5 L882,355.7 L883,355.1 L884,351.9 L885,344.8 L886,352.2 L887,355.6 L888,355.6 L889,354.1 L890,353.7 L891,353.6 L892,354.0 L893,352.5 L894,354.0 L895,355.0 L896,355.5 L897,355.0 L898,356.9 L899,355.2 L900,353.7 L901,353.9 L902,353.4 L903,353.7 L904,354.8 L905,356.9 L905,358.1 L904,358.3 L903,359.2 L902,359.0 L901,358.9 L900,358.9 L899,358.2 L898,358.1 L897,358.4 L896,358.7 L895,358.6 L894,358.5 L893,358.6 L892,358.5 L891,359.0 L890,359.0 L889,358.6 L888,358.6 L887,358.6 L886,359.5 L885,360.8 L884,359.3 L883,358.6 L882,358.4 L881,359.0 L880,358.4 L879,358.3 L878,358.4 L877,358.1 L876,358.1 L875,361.0 L874,361.7 L873,363.1 L872,361.5 L871,358.1 L870,358.1 L869,360.1 L868,361.1 L867,360.8 L866,361.0 L865,362.9 L864,362.7 L863,362.7 L862,362.8 L861,361.1 L860,361.4 L859,360.4 L858,358.1 L857,358.1 L856,360.3 L855,361.3 L854,360.0 L853,360.3 L852,361.7 L851,361.7 L850,362.5 L849,361.6 L848,363.3 L847,363.0 L846,361.8 L845,363.8 L844,363.2 L843,360.4 L842,360.9 L841,362.1 L840,362.6 L839,360.9 L838,359.4 L837,358.1 L836,358.1 L835,358.1 L834,358.1 L833,358.1 L832,358.1 L831,358.1 L830,358.1 L829,358.1 L828,358.1 L827,358.1 L826,358.1 L825,358.1 L824,358.9 L823,360.8 L822,360.6 L821,360.3 L820,359.7 L819,360.4 L818,361.3 L817,361.5 L816,362.2 L815,360.3 L814,361.3 L813,360.8 L812,360.0 L811,361.2 L810,360.7 L809,359.9 L808,360.1 L807,360.2 L806,359.4 L805,358.1 L804,358.1 L803,358.1 L802,358.1 L801,359.8 L800,360.9 L799,361.8 L798,360.5 L797,362.6 L796,362.3 L795,361.7 L794,361.4 L793,360.9 L792,359.6 L791,358.1 L790,358.1 L789,358.1 L788,358.1 L787,358.1 L786,358.1 L785,358.1 L784,358.1 L783,358.1 L782,358.1 L781,358.1 L780,358.1 L779,358.1 L778,358.1 L777,358.2 L776,358.2 L775,358.2 L774,358.1 L773,358.1 L772,360.4 L771,362.7 L770,362.3 L769,362.2 L768,362.3 L767,360.5 L766,358.1 L765,358.1 L764,358.1 L763,359.0 L762,359.0 L761,360.9 L760,359.9 L759,359.6 L758,358.8 L757,358.1 L756,358.1 L755,359.0 L754,358.8 L753,359.6 L752,359.4 L751,359.4 L750,360.2 L749,359.6 L748,358.6 L747,358.8 L746,359.8 L745,360.5 L744,358.6 L743,358.1 L742,358.1 L741,361.8 L740,362.7 L739,362.8 L738,363.3 L737,363.9 L736,363.6 L735,363.1 L734,360.0 L733,358.1 L732,358.1 L731,358.1 L730,358.1 L729,358.1 L728,358.1 L727,358.2 L726,358.1 L725,358.1 L724,358.1 L723,358.9 L722,358.7 L721,359.2 L720,359.6 L719,359.7 L718,360.3 L717,359.8 L716,361.4 L715,360.5 L714,360.8 L713,361.2 L712,359.9 L711,360.2 L710,359.1 L709,359.9 L708,360.4 L707,359.8 L706,359.6 L705,358.1 L704,358.7 L703,359.3 L702,358.9 L701,359.9 L700,359.6 L699,359.5 L698,359.5 L697,359.9 L696,360.0 L695,359.9 L694,359.9 L693,359.8 L692,359.9 L691,359.3 L690,359.6 L689,359.6 L688,359.6 L687,358.4 L686,358.1 L685,358.1 L684,358.1 L683,358.1 L682,358.1 L681,358.1 L680,358.1 L679,358.1 L678,358.1 L677,358.1 L676,358.1 L675,358.1 L674,358.1 L673,358.1 L672,358.7 L671,358.9 L670,359.3 L669,358.6 L668,358.4 L667,359.2 L666,358.7 L665,359.7 L664,359.4 L663,359.2 L662,358.6 L661,358.1 L660,358.1 L659,358.1 L658,358.1 L657,358.2 L656,358.4 L655,359.3 L654,358.9 L653,359.2 L652,359.3 L651,358.7 L650,358.9 L649,358.9 L648,359.7 L647,358.6 L646,358.8 L645,358.2 L644,358.1 L643,358.4 L642,358.5 L641,359.2 L640,359.6 L639,359.1 L638,358.9 L637,358.7 L636,358.1 L635,358.1 L634,358.5 L633,358.4 L632,359.2 L631,359.1 L630,359.1 L629,358.9 L628,358.1 L627,358.1 L626,358.1 L625,358.1 L624,358.1 L623,358.1 L622,358.1 L621,358.1 L620,358.1 L619,358.1 L618,358.1 L617,358.1 L616,358.1 L615,358.1 L614,358.1 L613,358.1 L612,358.1 L611,358.1 L610,358.1 L609,358.1 L608,358.1 L607,358.1 L606,358.1 L605,358.1 L604,358.1 L603,358.1 L602,358.1 L601,358.1 L600,358.1 L599,358.1 L598,358.1 L597,358.1 L596,358.1 L595,358.1 L594,358.1 L593,358.1 L592,358.1 L591,358.1 L590,358.1 L589,358.1 L588,358.1 L587,358.1 L586,358.1 L585,358.1 Z" fill="#d9d6fb"/><path d="M905,356.9 L906,355.3 L907,354.2 L908,352.8 L909,354.7 L910,352.5 L911,353.9 L912,353.9 L913,356.9 L914,356.9 L915,356.9 L916,356.9 L917,354.1 L918,353.5 L919,348.7 L920,351.6 L921,350.0 L922,348.1 L923,351.9 L924,350.7 L925,348.9 L926,348.9 L927,350.0 L928,349.6 L929,350.6 L930,343.9 L931,350.0 L932,348.8 L933,348.9 L934,351.7 L935,353.3 L936,353.0 L937,356.9 L938,356.9 L939,356.9 L940,356.9 L941,356.9 L942,354.3 L943,350.8 L944,349.4 L945,349.9 L946,348.1 L947,352.1 L948,351.0 L949,349.6 L950,346.9 L951,346.7 L952,346.5 L953,349.0 L954,345.0 L955,348.5 L956,348.0 L957,352.3 L958,347.2 L959,349.7 L960,350.0 L961,351.8 L962,356.9 L963,356.9 L964,351.7 L965,351.2 L966,349.4 L967,352.5 L968,352.4 L969,356.9 L970,356.9 L971,354.0 L972,353.2 L973,351.1 L974,351.5 L975,348.8 L976,349.2 L977,349.2 L978,352.3 L979,352.2 L980,350.7 L981,348.4 L982,347.8 L983,349.3 L984,350.5 L985,350.0 L986,349.4 L987,349.7 L988,350.9 L989,352.6 L990,356.9 L991,354.6 L992,352.2 L993,353.9 L994,356.9 L995,356.9 L996,356.9 L997,353.9 L998,353.8 L999,356.9 L1000,356.9 L1001,356.9 L1002,356.9 L1003,356.9 L1004,353.5 L1005,352.3 L1006,352.9 L1007,353.0 L1008,348.8 L1009,350.7 L1010,348.8 L1011,349.5 L1012,350.1 L1013,349.1 L1014,349.2 L1015,349.6 L1016,353.2 L1017,351.7 L1018,353.9 L1019,354.2 L1020,353.3 L1021,356.9 L1022,356.9 L1023,356.9 L1024,352.2 L1025,350.4 L1026,350.4 L1027,349.6 L1028,348.2 L1029,351.0 L1030,349.3 L1031,349.9 L1032,352.0 L1033,351.4 L1034,352.4 L1035,352.2 L1036,351.5 L1037,349.3 L1038,348.9 L1039,349.2 L1040,352.5 L1041,352.1 L1042,352.0 L1043,354.6 L1044,356.9 L1045,356.9 L1046,356.9 L1047,356.9 L1048,356.9 L1049,353.2 L1050,351.5 L1051,347.8 L1052,346.3 L1053,350.4 L1054,350.4 L1055,349.0 L1056,350.8 L1057,348.4 L1058,349.0 L1059,345.1 L1060,348.9 L1061,349.2 L1062,351.0 L1063,350.1 L1064,346.9 L1065,346.0 L1066,349.5 L1067,351.2 L1068,350.0 L1069,352.6 L1070,354.1 L1071,356.9 L1072,356.9 L1073,352.7 L1074,352.6 L1075,348.3 L1076,350.8 L1077,351.2 L1078,351.9 L1079,350.8 L1080,350.9 L1081,350.0 L1082,353.2 L1083,349.7 L1084,352.3 L1085,351.6 L1086,352.9 L1087,351.9 L1088,353.7 L1089,356.9 L1090,356.9 L1091,356.9 L1092,356.9 L1093,355.6 L1094,355.2 L1095,355.6 L1096,354.1 L1097,353.9 L1098,354.7 L1099,355.5 L1100,353.9 L1101,354.9 L1102,354.2 L1103,355.0 L1104,355.4 L1105,356.9 L1106,356.9 L1107,356.9 L1108,354.9 L1109,353.2 L1110,352.5 L1111,353.7 L1112,353.8 L1113,353.4 L1114,352.8 L1115,352.8 L1116,353.2 L1117,353.0 L1118,351.8 L1119,351.4 L1120,353.8 L1121,351.9 L1122,351.2 L1123,353.6 L1124,351.4 L1125,353.9 L1126,352.2 L1127,352.1 L1128,351.7 L1129,352.9 L1130,352.9 L1131,352.6 L1132,352.7 L1133,351.2 L1134,351.5 L1135,350.1 L1136,353.3 L1137,351.9 L1138,352.6 L1139,353.8 L1140,352.9 L1141,353.0 L1142,352.7 L1143,354.6 L1144,354.6 L1145,356.9 L1146,356.9 L1147,356.9 L1148,356.9 L1149,356.9 L1150,356.9 L1151,356.9 L1152,356.9 L1153,356.9 L1154,356.9 L1155,354.7 L1156,353.7 L1157,354.0 L1158,352.4 L1159,352.2 L1160,349.7 L1161,351.7 L1162,349.4 L1163,346.7 L1164,350.3 L1165,349.7 L1166,350.0 L1167,348.7 L1168,350.3 L1169,348.2 L1170,348.2 L1171,350.9 L1172,348.1 L1173,344.4 L1174,351.2 L1175,351.1 L1176,350.3 L1177,352.2 L1178,349.2 L1179,351.2 L1180,349.8 L1181,350.8 L1182,351.8 L1183,351.2 L1184,353.7 L1185,354.5 L1186,356.9 L1187,356.9 L1188,353.4 L1189,356.9 L1190,356.9 L1191,356.9 L1192,356.9 L1193,355.9 L1194,356.3 L1195,355.5 L1196,356.2 L1197,355.6 L1198,355.5 L1199,355.3 L1200,355.4 L1201,356.1 L1202,356.9 L1202,358.1 L1201,358.4 L1200,358.7 L1199,358.7 L1198,358.5 L1197,358.5 L1196,358.6 L1195,358.4 L1194,358.4 L1193,358.2 L1192,358.1 L1191,358.1 L1190,358.1 L1189,358.1 L1188,358.7 L1187,358.1 L1186,358.1 L1185,358.5 L1184,358.8 L1183,359.9 L1182,359.7 L1181,360.3 L1180,359.2 L1179,359.9 L1178,360.7 L1177,359.4 L1176,359.5 L1175,360.6 L1174,359.8 L1173,362.1 L1172,360.1 L1171,361.0 L1170,361.1 L1169,360.1 L1168,360.9 L1167,360.1 L1166,360.4 L1165,360.7 L1164,360.3 L1163,361.4 L1162,360.1 L1161,360.3 L1160,360.4 L1159,360.5 L1158,360.5 L1157,360.1 L1156,359.5 L1155,359.0 L1154,358.1 L1153,358.1 L1152,358.1 L1151,358.1 L1150,358.1 L1149,358.1 L1148,358.1 L1147,358.1 L1146,358.1 L1145,358.1 L1144,358.6 L1143,358.7 L1142,359.3 L1141,359.1 L1140,359.6 L1139,359.8 L1138,359.8 L1137,360.0 L1136,360.4 L1135,360.7 L1134,359.3 L1133,360.0 L1132,359.6 L1131,359.6 L1130,360.5 L1129,359.5 L1128,359.5 L1127,359.2 L1126,359.9 L1125,360.4 L1124,360.1 L1123,359.8 L1122,360.3 L1121,359.7 L1120,360.1 L1119,359.1 L1118,360.1 L1117,360.0 L1116,359.9 L1115,359.6 L1114,359.8 L1113,359.5 L1112,359.6 L1111,358.7 L1110,358.5 L1109,359.1 L1108,358.9 L1107,358.1 L1106,358.1 L1105,358.1 L1104,358.3 L1103,358.4 L1102,358.4 L1101,358.9 L1100,359.0 L1099,358.7 L1098,358.3 L1097,359.0 L1096,359.0 L1095,359.0 L1094,359.1 L1093,358.4 L1092,358.1 L1091,358.1 L1090,358.1 L1089,358.1 L1088,359.5 L1087,360.9 L1086,359.6 L1085,359.9 L1084,360.3 L1083,360.2 L1082,359.9 L1081,361.3 L1080,361.2 L1079,359.9 L1078,360.4 L1077,360.0 L1076,359.3 L1075,360.7 L1074,359.4 L1073,358.6 L1072,358.1 L1071,358.1 L1070,360.4 L1069,360.9 L1068,360.8 L1067,360.2 L1066,360.3 L1065,362.2 L1064,362.9 L1063,360.9 L1062,362.9 L1061,362.9 L1060,363.0 L1059,362.5 L1058,360.4 L1057,362.6 L1056,363.6 L1055,361.9 L1054,361.2 L1053,362.8 L1052,362.2 L1051,361.3 L1050,360.3 L1049,360.2 L1048,358.1 L1047,358.1 L1046,358.1 L1045,358.1 L1044,358.1 L1043,359.6 L1042,360.8 L1041,361.2 L1040,360.1 L1039,362.0 L1038,360.1 L1037,361.2 L1036,361.0 L1035,362.3 L1034,362.0 L1033,361.7 L1032,360.7 L1031,361.9 L1030,361.7 L1029,361.6 L1028,360.5 L1027,361.1 L1026,361.0 L1025,360.1 L1024,359.3 L1023,358.1 L1022,358.1 L1021,358.1 L1020,359.6 L1019,359.7 L1018,360.5 L1017,360.0 L1016,359.9 L1015,360.6 L1014,361.0 L1013,360.5 L1012,361.1 L1011,360.4 L1010,360.7 L1009,360.3 L1008,361.7 L1007,359.6 L1006,359.6 L1005,359.7 L1004,359.8 L1003,358.1 L1002,358.1 L1001,358.1 L1000,358.1 L999,358.1 L998,358.5 L997,358.5 L996,358.1 L995,358.1 L994,358.1 L993,360.0 L992,359.4 L991,359.0 L990,358.1 L989,359.3 L988,360.9 L987,360.4 L986,359.7 L985,360.4 L984,361.3 L983,360.2 L982,360.6 L981,361.1 L980,361.9 L979,360.2 L978,361.7 L977,360.5 L976,361.2 L975,359.9 L974,360.8 L973,359.6 L972,359.3 L971,360.0 L970,358.1 L969,358.1 L968,360.5 L967,360.5 L966,360.3 L965,360.2 L964,360.2 L963,358.1 L962,358.1 L961,361.4 L960,360.7 L959,363.0 L958,362.1 L957,363.6 L956,362.2 L955,363.0 L954,364.0 L953,363.3 L952,366.6 L951,362.0 L950,361.5 L949,362.0 L948,361.3 L947,362.9 L946,360.7 L945,361.6 L944,362.2 L943,360.5 L942,359.8 L941,358.1 L940,358.1 L939,358.1 L938,358.1 L937,358.1 L936,360.2 L935,361.1 L934,361.7 L933,362.0 L932,360.7 L931,362.5 L930,363.2 L929,363.3 L928,364.6 L927,364.7 L926,360.9 L925,362.7 L924,360.3 L923,360.7 L922,361.9 L921,360.2 L920,361.6 L919,361.7 L918,360.7 L917,359.5 L916,358.1 L915,358.1 L914,358.1 L913,358.1 L912,358.5 L911,358.9 L910,358.9 L909,358.8 L908,359.0 L907,359.0 L906,358.5 L905,358.1 Z" fill="#d9d6fb"/><path d="M1202,356.9 L1203,356.9 L1204,356.9 L1205,356.9 L1206,356.9 L1207,356.6 L1208,355.9 L1209,356.3 L1210,355.3 L1211,355.4 L1212,355.5 L1213,355.1 L1214,355.5 L1215,355.9 L1216,355.4 L1217,356.3 L1218,355.8 L1219,356.5 L1220,356.9 L1221,356.9 L1222,356.9 L1223,354.3 L1224,354.5 L1225,354.7 L1226,353.0 L1227,353.3 L1228,350.2 L1229,352.7 L1230,351.0 L1231,349.2 L1232,353.5 L1233,353.1 L1234,349.6 L1235,353.1 L1236,353.0 L1237,351.5 L1238,350.2 L1239,350.9 L1240,351.9 L1241,351.8 L1242,352.4 L1243,353.6 L1244,352.6 L1245,353.2 L1246,354.2 L1247,352.8 L1248,354.2 L1249,356.9 L1250,356.9 L1251,356.9 L1252,356.9 L1253,356.9 L1254,356.9 L1255,356.9 L1256,356.9 L1257,356.9 L1258,356.9 L1259,356.9 L1260,345.5 L1261,345.9 L1262,345.0 L1263,348.7 L1264,356.9 L1265,350.7 L1266,352.9 L1267,351.3 L1268,351.8 L1269,352.5 L1270,353.0 L1271,350.3 L1272,353.2 L1273,351.0 L1274,349.4 L1275,352.5 L1276,350.5 L1277,350.2 L1278,350.5 L1279,349.6 L1280,348.3 L1281,350.5 L1282,350.7 L1283,351.8 L1284,353.4 L1285,350.6 L1286,351.0 L1287,351.7 L1288,354.3 L1289,356.9 L1290,356.9 L1291,356.9 L1292,356.9 L1293,354.6 L1294,353.8 L1295,352.1 L1296,352.4 L1297,351.7 L1298,352.4 L1299,351.2 L1300,351.3 L1301,350.7 L1302,351.2 L1303,352.8 L1304,351.8 L1305,352.3 L1306,351.3 L1307,352.1 L1308,353.3 L1309,354.3 L1310,356.9 L1311,356.9 L1312,353.8 L1313,354.2 L1314,353.9 L1315,353.5 L1316,351.5 L1317,350.4 L1318,350.7 L1319,352.0 L1320,350.2 L1321,352.0 L1322,350.9 L1323,350.2 L1324,348.8 L1325,350.0 L1326,349.8 L1327,349.0 L1328,350.9 L1329,350.0 L1330,351.0 L1331,351.4 L1332,353.1 L1333,352.6 L1334,353.4 L1335,354.7 L1336,356.9 L1337,356.9 L1338,356.9 L1339,356.9 L1340,354.7 L1341,354.2 L1342,353.7 L1343,351.8 L1344,351.9 L1345,353.9 L1346,354.7 L1347,355.1 L1348,354.5 L1349,356.9 L1350,356.9 L1351,356.9 L1352,356.9 L1353,356.9 L1354,356.9 L1355,356.9 L1356,356.9 L1357,356.9 L1358,356.9 L1359,356.9 L1360,356.9 L1361,356.9 L1362,356.9 L1363,356.9 L1364,356.9 L1365,352.6 L1366,345.9 L1367,348.7 L1368,349.6 L1369,348.2 L1370,348.5 L1371,350.4 L1372,352.6 L1373,356.9 L1374,356.9 L1375,356.9 L1376,356.9 L1377,356.9 L1378,354.1 L1379,351.4 L1380,353.1 L1381,356.9 L1382,356.9 L1383,356.9 L1384,351.0 L1385,349.5 L1386,346.3 L1387,343.5 L1388,349.7 L1389,345.0 L1390,348.2 L1391,347.5 L1392,350.8 L1393,356.9 L1394,356.9 L1395,356.9 L1396,356.9 L1397,356.9 L1398,356.9 L1399,352.2 L1400,351.4 L1401,349.9 L1402,347.4 L1403,346.8 L1404,351.3 L1405,348.9 L1406,348.6 L1407,347.3 L1408,350.8 L1409,351.0 L1410,352.6 L1411,350.0 L1412,356.9 L1413,356.9 L1414,355.4 L1415,355.0 L1416,353.2 L1417,354.8 L1418,356.9 L1419,356.9 L1420,356.9 L1421,356.9 L1422,356.9 L1423,356.9 L1424,355.5 L1425,355.5 L1426,355.2 L1427,355.0 L1428,354.1 L1429,355.2 L1430,352.7 L1431,355.1 L1432,355.1 L1433,355.5 L1434,355.1 L1435,355.8 L1436,356.9 L1437,356.9 L1438,356.9 L1439,356.9 L1440,356.9 L1441,356.9 L1442,356.9 L1443,356.9 L1444,355.7 L1445,354.8 L1446,355.5 L1447,353.9 L1448,353.7 L1449,353.3 L1450,354.6 L1451,353.9 L1452,354.7 L1453,355.4 L1454,356.9 L1455,356.9 L1456,356.9 L1457,356.9 L1458,356.9 L1459,356.9 L1460,356.9 L1461,356.9 L1462,356.9 L1463,356.9 L1464,356.9 L1465,356.9 L1466,356.9 L1466,358.1 L1465,358.1 L1464,358.1 L1463,358.1 L1462,358.1 L1461,358.1 L1460,358.1 L1459,358.1 L1458,358.1 L1457,358.1 L1456,358.1 L1455,358.1 L1454,358.1 L1453,358.1 L1452,358.4 L1451,358.7 L1450,358.2 L1449,358.5 L1448,358.5 L1447,358.9 L1446,358.8 L1445,359.0 L1444,358.4 L1443,358.1 L1442,358.1 L1441,358.1 L1440,358.1 L1439,358.1 L1438,358.1 L1437,358.1 L1436,358.1 L1435,358.2 L1434,358.4 L1433,358.7 L1432,358.3 L1431,358.4 L1430,358.4 L1429,358.6 L1428,358.2 L1427,358.2 L1426,358.4 L1425,358.3 L1424,358.2 L1423,358.1 L1422,358.1 L1421,358.1 L1420,358.1 L1419,358.1 L1418,358.1 L1417,358.4 L1416,359.3 L1415,358.5 L1414,358.3 L1413,358.1 L1412,358.1 L1411,363.1 L1410,363.7 L1409,362.8 L1408,364.6 L1407,362.4 L1406,362.5 L1405,361.6 L1404,362.4 L1403,363.7 L1402,361.2 L1401,363.1 L1400,361.2 L1399,361.8 L1398,358.1 L1397,358.1 L1396,358.1 L1395,358.1 L1394,358.1 L1393,358.1 L1392,362.3 L1391,361.7 L1390,361.8 L1389,366.9 L1388,363.6 L1387,365.7 L1386,364.1 L1385,361.5 L1384,360.3 L1383,358.1 L1382,358.1 L1381,358.1 L1380,358.8 L1379,359.6 L1378,358.3 L1377,358.1 L1376,358.1 L1375,358.1 L1374,358.1 L1373,358.1 L1372,360.0 L1371,360.4 L1370,361.9 L1369,360.8 L1368,361.2 L1367,360.7 L1366,361.2 L1365,360.5 L1364,358.1 L1363,358.1 L1362,358.1 L1361,358.1 L1360,358.1 L1359,358.1 L1358,358.1 L1357,358.1 L1356,358.1 L1355,358.1 L1354,358.1 L1353,358.1 L1352,358.1 L1351,358.1 L1350,358.1 L1349,358.1 L1348,358.7 L1347,358.4 L1346,358.5 L1345,358.8 L1344,359.0 L1343,359.0 L1342,358.7 L1341,358.8 L1340,358.1 L1339,358.1 L1338,358.1 L1337,358.1 L1336,358.1 L1335,358.4 L1334,358.4 L1333,358.8 L1332,358.9 L1331,359.1 L1330,359.5 L1329,359.2 L1328,359.6 L1327,358.9 L1326,358.8 L1325,359.5 L1324,360.1 L1323,359.8 L1322,360.1 L1321,359.0 L1320,358.9 L1319,358.7 L1318,359.1 L1317,358.6 L1316,358.5 L1315,358.6 L1314,358.5 L1313,358.9 L1312,358.2 L1311,358.1 L1310,358.1 L1309,358.6 L1308,359.2 L1307,359.2 L1306,360.1 L1305,360.2 L1304,360.5 L1303,359.6 L1302,359.4 L1301,360.8 L1300,360.3 L1299,361.0 L1298,360.4 L1297,360.5 L1296,360.4 L1295,361.5 L1294,359.5 L1293,359.1 L1292,358.1 L1291,358.1 L1290,358.1 L1289,358.1 L1288,359.6 L1287,359.6 L1286,359.3 L1285,359.8 L1284,360.7 L1283,361.1 L1282,361.1 L1281,361.4 L1280,361.8 L1279,360.3 L1278,360.9 L1277,361.6 L1276,363.5 L1275,360.8 L1274,360.1 L1273,360.8 L1272,360.4 L1271,360.1 L1270,361.1 L1269,360.3 L1268,359.8 L1267,359.9 L1266,360.4 L1265,360.6 L1264,358.1 L1263,366.8 L1262,367.7 L1261,367.8 L1260,365.1 L1259,358.1 L1258,358.1 L1257,358.1 L1256,358.1 L1255,358.1 L1254,358.1 L1253,358.1 L1252,358.1 L1251,358.1 L1250,358.1 L1249,358.1 L1248,359.1 L1247,359.6 L1246,360.2 L1245,360.0 L1244,359.7 L1243,358.8 L1242,358.9 L1241,360.3 L1240,359.7 L1239,359.9 L1238,362.5 L1237,361.0 L1236,360.6 L1235,359.8 L1234,361.7 L1233,359.5 L1232,360.1 L1231,360.6 L1230,359.7 L1229,359.3 L1228,359.6 L1227,359.5 L1226,360.3 L1225,359.9 L1224,359.6 L1223,358.8 L1222,358.1 L1221,358.1 L1220,358.1 L1219,358.1 L1218,358.4 L1217,358.3 L1216,358.2 L1215,358.1 L1214,358.3 L1213,358.5 L1212,358.4 L1211,358.2 L1210,358.2 L1209,358.3 L1208,358.1 L1207,358.1 L1206,358.1 L1205,358.1 L1204,358.1 L1203,358.1 L1202,358.1 Z" fill="#d9d6fb"/><path d="M1466,356.9 L1467,356.9 L1468,356.9 L1469,356.9 L1470,356.9 L1471,356.9 L1472,356.9 L1473,356.9 L1474,356.9 L1475,356.9 L1476,356.9 L1477,356.9 L1478,356.9 L1479,356.9 L1480,356.9 L1481,356.9 L1482,356.9 L1483,356.9 L1484,356.9 L1485,356.9 L1486,356.9 L1487,356.9 L1488,350.9 L1489,349.0 L1490,342.8 L1491,345.7 L1492,346.9 L1493,343.8 L1494,345.0 L1495,344.3 L1496,345.7 L1497,349.8 L1498,350.3 L1499,352.4 L1500,353.7 L1501,353.1 L1502,350.7 L1503,349.6 L1504,349.7 L1505,349.9 L1506,349.3 L1507,350.1 L1508,350.3 L1509,351.4 L1510,352.9 L1511,356.9 L1512,356.9 L1513,356.9 L1514,356.9 L1515,356.9 L1516,349.9 L1517,351.6 L1518,352.7 L1519,356.9 L1520,356.9 L1521,356.9 L1522,356.9 L1523,356.9 L1524,354.5 L1525,352.5 L1526,351.4 L1527,352.0 L1528,351.1 L1529,348.8 L1530,351.5 L1531,349.9 L1532,351.6 L1533,347.4 L1534,349.5 L1535,351.3 L1536,353.0 L1537,351.9 L1538,352.5 L1539,353.0 L1540,356.9 L1541,354.9 L1542,353.0 L1543,353.4 L1544,354.7 L1545,353.9 L1546,354.8 L1547,353.3 L1548,353.6 L1549,353.0 L1550,354.4 L1551,353.2 L1552,354.6 L1553,355.4 L1554,356.9 L1555,356.9 L1556,356.9 L1557,356.9 L1558,356.9 L1559,356.9 L1560,356.9 L1561,356.9 L1562,356.9 L1563,356.9 L1564,356.9 L1565,356.9 L1566,356.9 L1566,358.1 L1565,358.1 L1564,358.1 L1563,358.1 L1562,358.1 L1561,358.1 L1560,358.1 L1559,358.1 L1558,358.1 L1557,358.1 L1556,358.1 L1555,358.1 L1554,358.1 L1553,358.7 L1552,359.0 L1551,359.1 L1550,358.8 L1549,359.6 L1548,359.6 L1547,359.8 L1546,359.3 L1545,359.4 L1544,358.9 L1543,359.9 L1542,359.1 L1541,358.5 L1540,358.1 L1539,359.6 L1538,360.3 L1537,360.0 L1536,359.8 L1535,360.6 L1534,360.8 L1533,360.5 L1532,360.3 L1531,360.4 L1530,360.7 L1529,360.2 L1528,359.4 L1527,359.9 L1526,360.6 L1525,360.5 L1524,360.2 L1523,358.1 L1522,358.1 L1521,358.1 L1520,358.1 L1519,358.1 L1518,360.8 L1517,360.7 L1516,362.4 L1515,358.1 L1514,358.1 L1513,358.1 L1512,358.1 L1511,358.1 L1510,360.9 L1509,361.8 L1508,361.9 L1507,362.5 L1506,364.0 L1505,362.7 L1504,363.0 L1503,360.1 L1502,360.5 L1501,361.5 L1500,360.5 L1499,360.2 L1498,362.7 L1497,361.4 L1496,363.3 L1495,364.2 L1494,362.7 L1493,365.3 L1492,362.8 L1491,363.0 L1490,363.3 L1489,362.9 L1488,362.1 L1487,358.1 L1486,358.1 L1485,358.1 L1484,358.1 L1483,358.1 L1482,358.1 L1481,358.1 L1480,358.1 L1479,358.1 L1478,358.1 L1477,358.1 L1476,358.1 L1475,358.1 L1474,358.1 L1473,358.1 L1472,358.1 L1471,358.1 L1470,358.1 L1469,358.1 L1468,358.1 L1467,358.1 L1466,358.1 Z" fill="#d9d6fb"/><rect x="584" y="413.6" width="982" height="1.3" fill="#cfd0ff"/><rect x="585" y="418" width="320" height="133.5" fill="#2f2f30"/><rect x="635.3" y="418" width="1" height="133.5" fill="#3b3b3c"/><rect x="687.9" y="418" width="1" height="133.5" fill="#3b3b3c"/><rect x="740.4" y="418" width="1" height="133.5" fill="#3b3b3c"/><rect x="793.0" y="418" width="1" height="133.5" fill="#3b3b3c"/><rect x="845.5" y="418" width="1" height="133.5" fill="#3b3b3c"/><rect x="898.0" y="418" width="1" height="133.5" fill="#3b3b3c"/><rect x="905" y="418" width="297" height="133.5" fill="#3d68d9"/><rect x="1202" y="418" width="264" height="133.5" fill="#2f2f30"/><rect x="1213.3" y="418" width="1" height="133.5" fill="#3b3b3c"/><rect x="1265.8" y="418" width="1" height="133.5" fill="#3b3b3c"/><rect x="1318.4" y="418" width="1" height="133.5" fill="#3b3b3c"/><rect x="1370.9" y="418" width="1" height="133.5" fill="#3b3b3c"/><rect x="1423.4" y="418" width="1" height="133.5" fill="#3b3b3c"/><rect x="1466" y="418" width="100" height="133.5" fill="#3d68d9"/><path d="M585,492.4 L586,492.4 L587,492.4 L588,492.4 L589,492.4 L590,492.4 L591,492.4 L592,492.4 L593,492.4 L594,492.4 L595,492.4 L596,492.4 L597,492.4 L598,492.4 L599,492.4 L600,492.4 L601,492.4 L602,492.4 L603,492.4 L604,492.4 L605,492.4 L606,492.4 L607,492.4 L608,492.4 L609,492.4 L610,492.4 L611,492.4 L612,492.4 L613,492.4 L614,492.4 L615,492.4 L616,492.4 L617,492.4 L618,492.4 L619,492.4 L620,492.4 L621,492.4 L622,492.4 L623,492.4 L624,492.4 L625,492.4 L626,492.4 L627,492.4 L628,492.4 L629,488.2 L630,487.8 L631,487.6 L632,488.2 L633,488.8 L634,490.1 L635,492.4 L636,492.4 L637,489.9 L638,489.0 L639,488.3 L640,486.4 L641,489.4 L642,488.5 L643,490.2 L644,492.4 L645,491.2 L646,489.3 L647,489.9 L648,486.9 L649,487.4 L650,488.5 L651,488.8 L652,486.7 L653,487.0 L654,486.7 L655,486.0 L656,488.4 L657,490.8 L658,492.4 L659,492.4 L660,492.4 L661,491.4 L662,487.4 L663,488.9 L664,488.2 L665,485.4 L666,485.7 L667,483.6 L668,486.3 L669,487.8 L670,487.7 L671,488.7 L672,489.7 L673,492.4 L674,492.4 L675,492.4 L676,492.4 L677,492.4 L678,492.4 L679,492.4 L680,492.4 L681,492.4 L682,492.4 L683,492.4 L684,492.4 L685,492.4 L686,492.4 L687,489.2 L688,487.6 L689,487.2 L690,485.4 L691,487.4 L692,484.1 L693,484.7 L694,483.5 L695,484.8 L696,487.0 L697,484.1 L698,485.2 L699,486.7 L700,487.1 L701,485.8 L702,486.5 L703,488.0 L704,489.8 L705,492.4 L706,489.3 L707,486.7 L708,488.9 L709,485.7 L710,484.9 L711,485.8 L712,484.0 L713,482.4 L714,484.0 L715,486.3 L716,483.2 L717,485.2 L718,483.2 L719,485.7 L720,487.2 L721,487.3 L722,488.2 L723,489.5 L724,492.4 L725,492.4 L726,492.4 L727,491.0 L728,491.1 L729,492.4 L730,492.4 L731,492.4 L732,492.4 L733,492.4 L734,486.6 L735,485.5 L736,485.4 L737,483.8 L738,483.6 L739,482.8 L740,484.8 L741,488.0 L742,492.4 L743,492.4 L744,488.6 L745,486.1 L746,487.6 L747,487.6 L748,484.9 L749,487.8 L750,487.0 L751,487.5 L752,487.8 L753,486.8 L754,486.9 L755,489.5 L756,492.4 L757,492.4 L758,489.9 L759,489.4 L760,489.5 L761,487.9 L762,489.1 L763,488.9 L764,492.4 L765,492.4 L766,492.4 L767,486.9 L768,486.2 L769,488.0 L770,486.7 L771,485.0 L772,487.5 L773,492.4 L774,492.0 L775,492.0 L776,491.7 L777,491.4 L778,491.5 L779,491.9 L780,492.4 L781,492.4 L782,492.4 L783,492.4 L784,492.4 L785,492.4 L786,492.4 L787,492.4 L788,492.4 L789,492.4 L790,492.4 L791,492.4 L792,488.7 L793,487.5 L794,486.0 L795,485.3 L796,483.7 L797,485.1 L798,485.8 L799,488.9 L800,489.0 L801,488.9 L802,492.4 L803,492.4 L804,492.4 L805,492.4 L806,489.5 L807,487.9 L808,487.1 L809,485.9 L810,484.8 L811,487.0 L812,487.6 L813,487.5 L814,486.1 L815,485.4 L816,481.9 L817,485.2 L818,485.4 L819,485.1 L820,486.3 L821,486.3 L822,488.2 L823,485.5 L824,490.0 L825,492.4 L826,492.4 L827,492.4 L828,492.4 L829,492.4 L830,492.4 L831,492.4 L832,492.4 L833,492.4 L834,492.4 L835,492.4 L836,492.4 L837,492.4 L838,489.7 L839,489.6 L840,486.9 L841,487.2 L842,485.0 L843,485.7 L844,484.6 L845,483.9 L846,486.9 L847,486.4 L848,483.0 L849,483.7 L850,485.6 L851,487.1 L852,485.9 L853,485.6 L854,486.8 L855,487.8 L856,488.1 L857,492.4 L858,492.4 L859,486.4 L860,486.6 L861,486.2 L862,484.3 L863,485.7 L864,482.6 L865,482.6 L866,483.3 L867,484.8 L868,482.8 L869,486.8 L870,492.4 L871,492.4 L872,487.8 L873,485.6 L874,487.8 L875,487.9 L876,492.4 L877,492.4 L878,491.2 L879,491.0 L880,490.5 L881,490.1 L882,491.3 L883,490.8 L884,487.7 L885,480.9 L886,488.0 L887,491.1 L888,491.2 L889,489.7 L890,489.4 L891,489.3 L892,489.6 L893,488.3 L894,489.7 L895,490.7 L896,491.1 L897,490.6 L898,492.4 L899,490.8 L900,489.4 L901,489.5 L902,489.1 L903,489.4 L904,490.5 L905,492.4 L905,493.6 L904,493.8 L903,494.6 L902,494.4 L901,494.3 L900,494.3 L899,493.6 L898,493.6 L897,493.9 L896,494.1 L895,494.0 L894,494.0 L893,494.1 L892,493.9 L891,494.4 L890,494.4 L889,494.1 L888,494.0 L887,494.1 L886,494.9 L885,496.1 L884,494.7 L883,494.0 L882,493.9 L881,494.4 L880,493.8 L879,493.8 L878,493.8 L877,493.6 L876,493.6 L875,496.3 L874,497.0 L873,498.4 L872,496.8 L871,493.6 L870,493.6 L869,495.5 L868,496.5 L867,496.1 L866,496.3 L865,498.1 L864,498.0 L863,497.9 L862,498.1 L861,496.4 L860,496.7 L859,495.8 L858,493.6 L857,493.6 L856,495.7 L855,496.7 L854,495.4 L853,495.6 L852,497.0 L851,497.0 L850,497.8 L849,496.9 L848,498.5 L847,498.2 L846,497.1 L845,499.0 L844,498.4 L843,495.8 L842,496.3 L841,497.3 L840,497.9 L839,496.2 L838,494.8 L837,493.6 L836,493.6 L835,493.6 L834,493.6 L833,493.6 L832,493.6 L831,493.6 L830,493.6 L829,493.6 L828,493.6 L827,493.6 L826,493.6 L825,493.6 L824,494.4 L823,496.1 L822,495.9 L821,495.7 L820,495.1 L819,495.7 L818,496.6 L817,496.9 L816,497.4 L815,495.7 L814,496.6 L813,496.1 L812,495.3 L811,496.5 L810,496.0 L809,495.3 L808,495.5 L807,495.6 L806,494.8 L805,493.6 L804,493.6 L803,493.6 L802,493.6 L801,495.2 L800,496.2 L799,497.1 L798,495.9 L797,497.9 L796,497.6 L795,497.0 L794,496.7 L793,496.2 L792,495.0 L791,493.6 L790,493.6 L789,493.6 L788,493.6 L787,493.6 L786,493.6 L785,493.6 L784,493.6 L783,493.6 L782,493.6 L781,493.6 L780,493.6 L779,493.6 L778,493.6 L777,493.7 L776,493.6 L775,493.7 L774,493.6 L773,493.6 L772,495.8 L771,498.0 L770,497.5 L769,497.5 L768,497.6 L767,495.8 L766,493.6 L765,493.6 L764,493.6 L763,494.4 L762,494.5 L761,496.2 L760,495.3 L759,495.0 L758,494.3 L757,493.6 L756,493.6 L755,494.5 L754,494.2 L753,495.0 L752,494.8 L751,494.8 L750,495.6 L749,495.0 L748,494.1 L747,494.3 L746,495.2 L745,495.9 L744,494.1 L743,493.6 L742,493.6 L741,497.1 L740,497.9 L739,498.0 L738,498.5 L737,499.1 L736,498.8 L735,498.4 L734,495.4 L733,493.6 L732,493.6 L731,493.6 L730,493.6 L729,493.6 L728,493.6 L727,493.7 L726,493.6 L725,493.6 L724,493.6 L723,494.4 L722,494.2 L721,494.6 L720,495.0 L719,495.1 L718,495.7 L717,495.2 L716,496.7 L715,495.9 L714,496.1 L713,496.5 L712,495.3 L711,495.6 L710,494.5 L709,495.3 L708,495.8 L707,495.2 L706,495.0 L705,493.6 L704,494.1 L703,494.7 L702,494.3 L701,495.3 L700,495.0 L699,494.9 L698,494.9 L697,495.2 L696,495.4 L695,495.3 L694,495.2 L693,495.2 L692,495.3 L691,494.8 L690,495.0 L689,495.0 L688,495.0 L687,493.8 L686,493.6 L685,493.6 L684,493.6 L683,493.6 L682,493.6 L681,493.6 L680,493.6 L679,493.6 L678,493.6 L677,493.6 L676,493.6 L675,493.6 L674,493.6 L673,493.6 L672,494.1 L671,494.3 L670,494.7 L669,494.1 L668,493.9 L667,494.6 L666,494.2 L665,495.1 L664,494.8 L663,494.6 L662,494.0 L661,493.6 L660,493.6 L659,493.6 L658,493.6 L657,493.6 L656,493.9 L655,494.7 L654,494.3 L653,494.6 L652,494.7 L651,494.2 L650,494.4 L649,494.3 L648,495.1 L647,494.1 L646,494.2 L645,493.7 L644,493.6 L643,493.8 L642,494.0 L641,494.7 L640,495.0 L639,494.5 L638,494.3 L637,494.2 L636,493.6 L635,493.6 L634,494.0 L633,493.8 L632,494.7 L631,494.6 L630,494.5 L629,494.3 L628,493.6 L627,493.6 L626,493.6 L625,493.6 L624,493.6 L623,493.6 L622,493.6 L621,493.6 L620,493.6 L619,493.6 L618,493.6 L617,493.6 L616,493.6 L615,493.6 L614,493.6 L613,493.6 L612,493.6 L611,493.6 L610,493.6 L609,493.6 L608,493.6 L607,493.6 L606,493.6 L605,493.6 L604,493.6 L603,493.6 L602,493.6 L601,493.6 L600,493.6 L599,493.6 L598,493.6 L597,493.6 L596,493.6 L595,493.6 L594,493.6 L593,493.6 L592,493.6 L591,493.6 L590,493.6 L589,493.6 L588,493.6 L587,493.6 L586,493.6 L585,493.6 Z" fill="#8c8c8e"/><path d="M905,492.4 L906,490.9 L907,489.9 L908,488.6 L909,490.3 L910,488.3 L911,489.5 L912,489.6 L913,492.4 L914,492.4 L915,492.4 L916,492.4 L917,489.8 L918,489.2 L919,484.6 L920,487.4 L921,485.9 L922,484.1 L923,487.7 L924,486.5 L925,484.8 L926,484.8 L927,485.9 L928,485.5 L929,486.5 L930,480.1 L931,485.9 L932,484.7 L933,484.8 L934,487.5 L935,489.0 L936,488.7 L937,492.4 L938,492.4 L939,492.4 L940,492.4 L941,492.4 L942,489.9 L943,486.6 L944,485.3 L945,485.7 L946,484.1 L947,487.8 L948,486.8 L949,485.5 L950,482.9 L951,482.7 L952,482.6 L953,485.0 L954,481.1 L955,484.4 L956,483.9 L957,488.0 L958,483.2 L959,485.6 L960,485.8 L961,487.6 L962,492.4 L963,492.4 L964,487.5 L965,487.0 L966,485.2 L967,488.2 L968,488.1 L969,492.4 L970,492.4 L971,489.7 L972,488.9 L973,486.9 L974,487.3 L975,484.7 L976,485.1 L977,485.1 L978,488.0 L979,487.9 L980,486.5 L981,484.3 L982,483.8 L983,485.2 L984,486.3 L985,485.8 L986,485.3 L987,485.6 L988,486.7 L989,488.4 L990,492.4 L991,490.2 L992,487.9 L993,489.6 L994,492.4 L995,492.4 L996,492.4 L997,489.6 L998,489.5 L999,492.4 L1000,492.4 L1001,492.4 L1002,492.4 L1003,492.4 L1004,489.2 L1005,488.1 L1006,488.6 L1007,488.7 L1008,484.7 L1009,486.5 L1010,484.7 L1011,485.4 L1012,486.0 L1013,485.0 L1014,485.1 L1015,485.4 L1016,488.9 L1017,487.5 L1018,489.6 L1019,489.9 L1020,489.0 L1021,492.4 L1022,492.4 L1023,492.4 L1024,488.0 L1025,486.2 L1026,486.2 L1027,485.4 L1028,484.2 L1029,486.8 L1030,485.2 L1031,485.8 L1032,487.8 L1033,487.2 L1034,488.2 L1035,488.0 L1036,487.3 L1037,485.2 L1038,484.8 L1039,485.1 L1040,488.3 L1041,487.9 L1042,487.7 L1043,490.3 L1044,492.4 L1045,492.4 L1046,492.4 L1047,492.4 L1048,492.4 L1049,488.9 L1050,487.3 L1051,483.8 L1052,482.3 L1053,486.3 L1054,486.3 L1055,484.9 L1056,486.6 L1057,484.4 L1058,484.9 L1059,481.2 L1060,484.8 L1061,485.1 L1062,486.8 L1063,485.9 L1064,482.9 L1065,482.1 L1066,485.3 L1067,487.0 L1068,485.9 L1069,488.3 L1070,489.8 L1071,492.4 L1072,492.4 L1073,488.5 L1074,488.4 L1075,484.2 L1076,486.6 L1077,487.0 L1078,487.7 L1079,486.6 L1080,486.7 L1081,485.9 L1082,488.9 L1083,485.6 L1084,488.0 L1085,487.4 L1086,488.6 L1087,487.6 L1088,489.4 L1089,492.4 L1090,492.4 L1091,492.4 L1092,492.4 L1093,491.2 L1094,490.8 L1095,491.2 L1096,489.7 L1097,489.6 L1098,490.4 L1099,491.1 L1100,489.5 L1101,490.5 L1102,489.9 L1103,490.6 L1104,491.0 L1105,492.4 L1106,492.4 L1107,492.4 L1108,490.5 L1109,488.9 L1110,488.2 L1111,489.4 L1112,489.5 L1113,489.1 L1114,488.5 L1115,488.5 L1116,488.9 L1117,488.7 L1118,487.6 L1119,487.2 L1120,489.5 L1121,487.7 L1122,487.0 L1123,489.3 L1124,487.2 L1125,489.6 L1126,488.0 L1127,487.9 L1128,487.5 L1129,488.6 L1130,488.6 L1131,488.3 L1132,488.4 L1133,487.0 L1134,487.3 L1135,485.9 L1136,489.0 L1137,487.7 L1138,488.3 L1139,489.5 L1140,488.6 L1141,488.7 L1142,488.4 L1143,490.3 L1144,490.2 L1145,492.4 L1146,492.4 L1147,492.4 L1148,492.4 L1149,492.4 L1150,492.4 L1151,492.4 L1152,492.4 L1153,492.4 L1154,492.4 L1155,490.3 L1156,489.4 L1157,489.7 L1158,488.1 L1159,487.9 L1160,485.5 L1161,487.5 L1162,485.3 L1163,482.8 L1164,486.1 L1165,485.6 L1166,485.9 L1167,484.6 L1168,486.1 L1169,484.2 L1170,484.2 L1171,486.7 L1172,484.1 L1173,480.5 L1174,487.0 L1175,486.9 L1176,486.1 L1177,487.9 L1178,485.1 L1179,487.0 L1180,485.7 L1181,486.6 L1182,487.5 L1183,487.0 L1184,489.4 L1185,490.1 L1186,492.4 L1187,492.4 L1188,489.1 L1189,492.4 L1190,492.4 L1191,492.4 L1192,492.4 L1193,491.5 L1194,491.9 L1195,491.1 L1196,491.7 L1197,491.2 L1198,491.1 L1199,490.9 L1200,491.0 L1201,491.7 L1202,492.4 L1202,493.6 L1201,493.9 L1200,494.1 L1199,494.1 L1198,493.9 L1197,494.0 L1196,494.0 L1195,493.9 L1194,493.9 L1193,493.7 L1192,493.6 L1191,493.6 L1190,493.6 L1189,493.6 L1188,494.2 L1187,493.6 L1186,493.6 L1185,494.0 L1184,494.3 L1183,495.3 L1182,495.1 L1181,495.6 L1180,494.7 L1179,495.3 L1178,496.1 L1177,494.8 L1176,494.9 L1175,496.0 L1174,495.2 L1173,497.4 L1172,495.5 L1171,496.3 L1170,496.4 L1169,495.5 L1168,496.2 L1167,495.5 L1166,495.8 L1165,496.1 L1164,495.7 L1163,496.7 L1162,495.5 L1161,495.7 L1160,495.7 L1159,495.8 L1158,495.8 L1157,495.4 L1156,494.9 L1155,494.4 L1154,493.6 L1153,493.6 L1152,493.6 L1151,493.6 L1150,493.6 L1149,493.6 L1148,493.6 L1147,493.6 L1146,493.6 L1145,493.6 L1144,494.0 L1143,494.1 L1142,494.7 L1141,494.5 L1140,495.0 L1139,495.2 L1138,495.2 L1137,495.4 L1136,495.8 L1135,496.1 L1134,494.7 L1133,495.3 L1132,495.0 L1131,495.0 L1130,495.8 L1129,494.9 L1128,494.9 L1127,494.6 L1126,495.3 L1125,495.7 L1124,495.4 L1123,495.2 L1122,495.7 L1121,495.0 L1120,495.5 L1119,494.5 L1118,495.4 L1117,495.4 L1116,495.2 L1115,495.0 L1114,495.2 L1113,494.9 L1112,495.0 L1111,494.1 L1110,494.0 L1109,494.5 L1108,494.3 L1107,493.6 L1106,493.6 L1105,493.6 L1104,493.8 L1103,493.8 L1102,493.9 L1101,494.3 L1100,494.4 L1099,494.1 L1098,493.8 L1097,494.4 L1096,494.5 L1095,494.4 L1094,494.5 L1093,493.9 L1092,493.6 L1091,493.6 L1090,493.6 L1089,493.6 L1088,494.9 L1087,496.2 L1086,495.0 L1085,495.3 L1084,495.6 L1083,495.6 L1082,495.3 L1081,496.7 L1080,496.5 L1079,495.2 L1078,495.8 L1077,495.4 L1076,494.7 L1075,496.1 L1074,494.8 L1073,494.0 L1072,493.6 L1071,493.6 L1070,495.8 L1069,496.2 L1068,496.2 L1067,495.6 L1066,495.6 L1065,497.5 L1064,498.1 L1063,496.2 L1062,498.2 L1061,498.1 L1060,498.2 L1059,497.7 L1058,495.7 L1057,497.8 L1056,498.8 L1055,497.2 L1054,496.5 L1053,498.1 L1052,497.5 L1051,496.6 L1050,495.7 L1049,495.6 L1048,493.6 L1047,493.6 L1046,493.6 L1045,493.6 L1044,493.6 L1043,495.0 L1042,496.2 L1041,496.6 L1040,495.5 L1039,497.3 L1038,495.5 L1037,496.5 L1036,496.4 L1035,497.5 L1034,497.3 L1033,497.0 L1032,496.1 L1031,497.2 L1030,497.0 L1029,496.9 L1028,495.8 L1027,496.4 L1026,496.3 L1025,495.5 L1024,494.7 L1023,493.6 L1022,493.6 L1021,493.6 L1020,495.0 L1019,495.1 L1018,495.8 L1017,495.3 L1016,495.3 L1015,495.9 L1014,496.3 L1013,495.9 L1012,496.5 L1011,495.8 L1010,496.1 L1009,495.7 L1008,497.0 L1007,495.0 L1006,495.0 L1005,495.1 L1004,495.2 L1003,493.6 L1002,493.6 L1001,493.6 L1000,493.6 L999,493.6 L998,494.0 L997,494.0 L996,493.6 L995,493.6 L994,493.6 L993,495.4 L992,494.8 L991,494.4 L990,493.6 L989,494.7 L988,496.2 L987,495.7 L986,495.1 L985,495.7 L984,496.7 L983,495.6 L982,496.0 L981,496.4 L980,497.2 L979,495.6 L978,497.0 L977,495.8 L976,496.5 L975,495.3 L974,496.2 L973,495.0 L972,494.7 L971,495.4 L970,493.6 L969,493.6 L968,495.9 L967,495.9 L966,495.7 L965,495.6 L964,495.6 L963,493.6 L962,493.6 L961,496.7 L960,496.0 L959,498.3 L958,497.3 L957,498.8 L956,497.5 L955,498.3 L954,499.2 L953,498.5 L952,501.7 L951,497.3 L950,496.8 L949,497.3 L948,496.6 L947,498.2 L946,496.0 L945,496.9 L944,497.5 L943,495.8 L942,495.2 L941,493.6 L940,493.6 L939,493.6 L938,493.6 L937,493.6 L936,495.5 L935,496.5 L934,497.0 L933,497.3 L932,496.1 L931,497.7 L930,498.4 L929,498.5 L928,499.7 L927,499.8 L926,496.2 L925,497.9 L924,495.7 L923,496.0 L922,497.2 L921,495.6 L920,497.0 L919,497.0 L918,496.1 L917,494.9 L916,493.6 L915,493.6 L914,493.6 L913,493.6 L912,493.9 L911,494.4 L910,494.3 L909,494.2 L908,494.4 L907,494.5 L906,494.0 L905,493.6 Z" fill="#d9d6fb"/><path d="M1202,492.4 L1203,492.4 L1204,492.4 L1205,492.4 L1206,492.4 L1207,492.1 L1208,491.5 L1209,491.8 L1210,490.9 L1211,491.0 L1212,491.1 L1213,490.7 L1214,491.1 L1215,491.5 L1216,491.0 L1217,491.9 L1218,491.4 L1219,492.0 L1220,492.4 L1221,492.4 L1222,492.4 L1223,489.9 L1224,490.2 L1225,490.4 L1226,488.7 L1227,489.0 L1228,486.0 L1229,488.4 L1230,486.8 L1231,485.1 L1232,489.2 L1233,488.8 L1234,485.5 L1235,488.8 L1236,488.7 L1237,487.3 L1238,486.1 L1239,486.7 L1240,487.7 L1241,487.5 L1242,488.1 L1243,489.3 L1244,488.3 L1245,488.9 L1246,489.9 L1247,488.5 L1248,489.9 L1249,492.4 L1250,492.4 L1251,492.4 L1252,492.4 L1253,492.4 L1254,492.4 L1255,492.4 L1256,492.4 L1257,492.4 L1258,492.4 L1259,492.4 L1260,481.6 L1261,481.9 L1262,481.1 L1263,484.6 L1264,492.4 L1265,486.5 L1266,488.7 L1267,487.1 L1268,487.6 L1269,488.2 L1270,488.7 L1271,486.2 L1272,488.9 L1273,486.8 L1274,485.3 L1275,488.3 L1276,486.3 L1277,486.0 L1278,486.3 L1279,485.5 L1280,484.2 L1281,486.4 L1282,486.5 L1283,487.6 L1284,489.1 L1285,486.5 L1286,486.9 L1287,487.5 L1288,490.0 L1289,492.4 L1290,492.4 L1291,492.4 L1292,492.4 L1293,490.3 L1294,489.5 L1295,487.8 L1296,488.1 L1297,487.5 L1298,488.2 L1299,487.0 L1300,487.1 L1301,486.5 L1302,487.0 L1303,488.5 L1304,487.5 L1305,488.0 L1306,487.1 L1307,487.8 L1308,489.0 L1309,489.9 L1310,492.4 L1311,492.4 L1312,489.5 L1313,489.8 L1314,489.6 L1315,489.2 L1316,487.2 L1317,486.2 L1318,486.6 L1319,487.8 L1320,486.0 L1321,487.8 L1322,486.7 L1323,486.1 L1324,484.7 L1325,485.9 L1326,485.7 L1327,484.9 L1328,486.7 L1329,485.9 L1330,486.8 L1331,487.1 L1332,488.8 L1333,488.4 L1334,489.1 L1335,490.3 L1336,492.4 L1337,492.4 L1338,492.4 L1339,492.4 L1340,490.3 L1341,489.8 L1342,489.4 L1343,487.6 L1344,487.6 L1345,489.6 L1346,490.3 L1347,490.7 L1348,490.2 L1349,492.4 L1350,492.4 L1351,492.4 L1352,492.4 L1353,492.4 L1354,492.4 L1355,492.4 L1356,492.4 L1357,492.4 L1358,492.4 L1359,492.4 L1360,492.4 L1361,492.4 L1362,492.4 L1363,492.4 L1364,492.4 L1365,488.3 L1366,481.9 L1367,484.6 L1368,485.5 L1369,484.2 L1370,484.4 L1371,486.2 L1372,488.3 L1373,492.4 L1374,492.4 L1375,492.4 L1376,492.4 L1377,492.4 L1378,489.7 L1379,487.2 L1380,488.8 L1381,492.4 L1382,492.4 L1383,492.4 L1384,486.8 L1385,485.4 L1386,482.3 L1387,479.7 L1388,485.5 L1389,481.1 L1390,484.1 L1391,483.5 L1392,486.7 L1393,492.4 L1394,492.4 L1395,492.4 L1396,492.4 L1397,492.4 L1398,492.4 L1399,487.9 L1400,487.2 L1401,485.7 L1402,483.4 L1403,482.8 L1404,487.1 L1405,484.8 L1406,484.6 L1407,483.3 L1408,486.7 L1409,486.8 L1410,488.3 L1411,485.8 L1412,492.4 L1413,492.4 L1414,491.0 L1415,490.6 L1416,488.9 L1417,490.4 L1418,492.4 L1419,492.4 L1420,492.4 L1421,492.4 L1422,492.4 L1423,492.4 L1424,491.1 L1425,491.1 L1426,490.8 L1427,490.6 L1428,489.8 L1429,490.8 L1430,488.4 L1431,490.7 L1432,490.7 L1433,491.1 L1434,490.7 L1435,491.4 L1436,492.4 L1437,492.4 L1438,492.4 L1439,492.4 L1440,492.4 L1441,492.4 L1442,492.4 L1443,492.4 L1444,491.3 L1445,490.4 L1446,491.1 L1447,489.6 L1448,489.4 L1449,489.0 L1450,490.2 L1451,489.6 L1452,490.3 L1453,491.0 L1454,492.4 L1455,492.4 L1456,492.4 L1457,492.4 L1458,492.4 L1459,492.4 L1460,492.4 L1461,492.4 L1462,492.4 L1463,492.4 L1464,492.4 L1465,492.4 L1466,492.4 L1466,493.6 L1465,493.6 L1464,493.6 L1463,493.6 L1462,493.6 L1461,493.6 L1460,493.6 L1459,493.6 L1458,493.6 L1457,493.6 L1456,493.6 L1455,493.6 L1454,493.6 L1453,493.6 L1452,493.8 L1451,494.2 L1450,493.6 L1449,493.9 L1448,494.0 L1447,494.3 L1446,494.3 L1445,494.4 L1444,493.9 L1443,493.6 L1442,493.6 L1441,493.6 L1440,493.6 L1439,493.6 L1438,493.6 L1437,493.6 L1436,493.6 L1435,493.7 L1434,493.9 L1433,494.1 L1432,493.8 L1431,493.9 L1430,493.9 L1429,494.0 L1428,493.7 L1427,493.6 L1426,493.8 L1425,493.7 L1424,493.7 L1423,493.6 L1422,493.6 L1421,493.6 L1420,493.6 L1419,493.6 L1418,493.6 L1417,493.9 L1416,494.8 L1415,493.9 L1414,493.8 L1413,493.6 L1412,493.6 L1411,498.4 L1410,498.9 L1409,498.1 L1408,499.8 L1407,497.7 L1406,497.8 L1405,496.9 L1404,497.7 L1403,498.9 L1402,496.6 L1401,498.4 L1400,496.6 L1399,497.1 L1398,493.6 L1397,493.6 L1396,493.6 L1395,493.6 L1394,493.6 L1393,493.6 L1392,497.6 L1391,497.0 L1390,497.1 L1389,501.9 L1388,498.8 L1387,500.8 L1386,499.3 L1385,496.8 L1384,495.6 L1383,493.6 L1382,493.6 L1381,493.6 L1380,494.2 L1379,495.0 L1378,493.8 L1377,493.6 L1376,493.6 L1375,493.6 L1374,493.6 L1373,493.6 L1372,495.3 L1371,495.7 L1370,497.2 L1369,496.2 L1368,496.6 L1367,496.0 L1366,496.5 L1365,495.8 L1364,493.6 L1363,493.6 L1362,493.6 L1361,493.6 L1360,493.6 L1359,493.6 L1358,493.6 L1357,493.6 L1356,493.6 L1355,493.6 L1354,493.6 L1353,493.6 L1352,493.6 L1351,493.6 L1350,493.6 L1349,493.6 L1348,494.1 L1347,493.8 L1346,493.9 L1345,494.2 L1344,494.5 L1343,494.5 L1342,494.2 L1341,494.3 L1340,493.6 L1339,493.6 L1338,493.6 L1337,493.6 L1336,493.6 L1335,493.9 L1334,493.9 L1333,494.2 L1332,494.3 L1331,494.5 L1330,494.9 L1329,494.6 L1328,495.0 L1327,494.3 L1326,494.2 L1325,494.9 L1324,495.5 L1323,495.2 L1322,495.4 L1321,494.5 L1320,494.3 L1319,494.1 L1318,494.5 L1317,494.0 L1316,493.9 L1315,494.0 L1314,494.0 L1313,494.3 L1312,493.6 L1311,493.6 L1310,493.6 L1309,494.0 L1308,494.6 L1307,494.6 L1306,495.5 L1305,495.5 L1304,495.8 L1303,495.0 L1302,494.8 L1301,496.2 L1300,495.7 L1299,496.4 L1298,495.8 L1297,495.8 L1296,495.8 L1295,496.8 L1294,494.9 L1293,494.5 L1292,493.6 L1291,493.6 L1290,493.6 L1289,493.6 L1288,495.0 L1287,495.0 L1286,494.7 L1285,495.2 L1284,496.1 L1283,496.4 L1282,496.5 L1281,496.7 L1280,497.1 L1279,495.7 L1278,496.3 L1277,496.9 L1276,498.7 L1275,496.2 L1274,495.4 L1273,496.2 L1272,495.7 L1271,495.5 L1270,496.5 L1269,495.7 L1268,495.2 L1267,495.3 L1266,495.8 L1265,495.9 L1264,493.6 L1263,501.9 L1262,502.7 L1261,502.8 L1260,500.3 L1259,493.6 L1258,493.6 L1257,493.6 L1256,493.6 L1255,493.6 L1254,493.6 L1253,493.6 L1252,493.6 L1251,493.6 L1250,493.6 L1249,493.6 L1248,494.5 L1247,495.0 L1246,495.6 L1245,495.4 L1244,495.1 L1243,494.3 L1242,494.3 L1241,495.6 L1240,495.1 L1239,495.3 L1238,497.8 L1237,496.3 L1236,496.0 L1235,495.2 L1234,497.0 L1233,494.9 L1232,495.5 L1231,495.9 L1230,495.1 L1229,494.7 L1228,495.0 L1227,494.9 L1226,495.7 L1225,495.3 L1224,495.0 L1223,494.3 L1222,493.6 L1221,493.6 L1220,493.6 L1219,493.6 L1218,493.8 L1217,493.7 L1216,493.6 L1215,493.6 L1214,493.8 L1213,493.9 L1212,493.9 L1211,493.7 L1210,493.7 L1209,493.8 L1208,493.6 L1207,493.6 L1206,493.6 L1205,493.6 L1204,493.6 L1203,493.6 L1202,493.6 Z" fill="#8c8c8e"/><path d="M1466,492.4 L1467,492.4 L1468,492.4 L1469,492.4 L1470,492.4 L1471,492.4 L1472,492.4 L1473,492.4 L1474,492.4 L1475,492.4 L1476,492.4 L1477,492.4 L1478,492.4 L1479,492.4 L1480,492.4 L1481,492.4 L1482,492.4 L1483,492.4 L1484,492.4 L1485,492.4 L1486,492.4 L1487,492.4 L1488,486.7 L1489,484.9 L1490,479.0 L1491,481.7 L1492,482.9 L1493,480.0 L1494,481.1 L1495,480.4 L1496,481.7 L1497,485.7 L1498,486.2 L1499,488.1 L1500,489.4 L1501,488.9 L1502,486.6 L1503,485.5 L1504,485.6 L1505,485.8 L1506,485.2 L1507,485.9 L1508,486.1 L1509,487.2 L1510,488.6 L1511,492.4 L1512,492.4 L1513,492.4 L1514,492.4 L1515,492.4 L1516,485.8 L1517,487.4 L1518,488.5 L1519,492.4 L1520,492.4 L1521,492.4 L1522,492.4 L1523,492.4 L1524,490.1 L1525,488.3 L1526,487.2 L1527,487.7 L1528,486.9 L1529,484.7 L1530,487.3 L1531,485.8 L1532,487.3 L1533,483.3 L1534,485.3 L1535,487.1 L1536,488.7 L1537,487.7 L1538,488.2 L1539,488.7 L1540,492.4 L1541,490.5 L1542,488.7 L1543,489.1 L1544,490.4 L1545,489.5 L1546,490.5 L1547,489.0 L1548,489.3 L1549,488.7 L1550,490.1 L1551,489.0 L1552,490.2 L1553,491.0 L1554,492.4 L1555,492.4 L1556,492.4 L1557,492.4 L1558,492.4 L1559,492.4 L1560,492.4 L1561,492.4 L1562,492.4 L1563,492.4 L1564,492.4 L1565,492.4 L1566,492.4 L1566,493.6 L1565,493.6 L1564,493.6 L1563,493.6 L1562,493.6 L1561,493.6 L1560,493.6 L1559,493.6 L1558,493.6 L1557,493.6 L1556,493.6 L1555,493.6 L1554,493.6 L1553,494.1 L1552,494.4 L1551,494.6 L1550,494.3 L1549,495.0 L1548,495.0 L1547,495.2 L1546,494.7 L1545,494.9 L1544,494.3 L1543,495.3 L1542,494.5 L1541,494.0 L1540,493.6 L1539,495.0 L1538,495.7 L1537,495.4 L1536,495.2 L1535,496.0 L1534,496.1 L1533,495.9 L1532,495.7 L1531,495.7 L1530,496.0 L1529,495.5 L1528,494.8 L1527,495.3 L1526,496.0 L1525,495.8 L1524,495.5 L1523,493.6 L1522,493.6 L1521,493.6 L1520,493.6 L1519,493.6 L1518,496.1 L1517,496.0 L1516,497.7 L1515,493.6 L1514,493.6 L1513,493.6 L1512,493.6 L1511,493.6 L1510,496.3 L1509,497.1 L1508,497.2 L1507,497.8 L1506,499.2 L1505,498.0 L1504,498.3 L1503,495.5 L1502,495.9 L1501,496.8 L1500,495.8 L1499,495.6 L1498,497.9 L1497,496.7 L1496,498.5 L1495,499.4 L1494,497.9 L1493,500.4 L1492,498.0 L1491,498.2 L1490,498.6 L1489,498.2 L1488,497.4 L1487,493.6 L1486,493.6 L1485,493.6 L1484,493.6 L1483,493.6 L1482,493.6 L1481,493.6 L1480,493.6 L1479,493.6 L1478,493.6 L1477,493.6 L1476,493.6 L1475,493.6 L1474,493.6 L1473,493.6 L1472,493.6 L1471,493.6 L1470,493.6 L1469,493.6 L1468,493.6 L1467,493.6 L1466,493.6 Z" fill="#d9d6fb"/><rect x="585" y="555" width="320" height="133.5" fill="#4740d8"/><rect x="905" y="555" width="661" height="133.5" fill="#2f2f30"/><rect x="950.6" y="555" width="1" height="133.5" fill="#3b3b3c"/><rect x="1003.1" y="555" width="1" height="133.5" fill="#3b3b3c"/><rect x="1055.7" y="555" width="1" height="133.5" fill="#3b3b3c"/><rect x="1108.2" y="555" width="1" height="133.5" fill="#3b3b3c"/><rect x="1160.7" y="555" width="1" height="133.5" fill="#3b3b3c"/><rect x="1213.3" y="555" width="1" height="133.5" fill="#3b3b3c"/><rect x="1265.8" y="555" width="1" height="133.5" fill="#3b3b3c"/><rect x="1318.4" y="555" width="1" height="133.5" fill="#3b3b3c"/><rect x="1370.9" y="555" width="1" height="133.5" fill="#3b3b3c"/><rect x="1423.4" y="555" width="1" height="133.5" fill="#3b3b3c"/><rect x="1476.0" y="555" width="1" height="133.5" fill="#3b3b3c"/><rect x="1528.5" y="555" width="1" height="133.5" fill="#3b3b3c"/><path d="M585,630.1 L586,630.1 L587,630.1 L588,630.1 L589,630.1 L590,630.1 L591,630.1 L592,630.1 L593,630.1 L594,630.1 L595,630.1 L596,630.1 L597,630.1 L598,630.1 L599,630.1 L600,630.1 L601,630.1 L602,630.1 L603,630.1 L604,630.1 L605,630.1 L606,630.1 L607,630.1 L608,630.1 L609,630.1 L610,630.1 L611,630.1 L612,630.1 L613,630.1 L614,630.1 L615,630.1 L616,630.1 L617,630.1 L618,630.1 L619,630.1 L620,630.1 L621,630.1 L622,630.1 L623,630.1 L624,630.1 L625,630.1 L626,630.1 L627,630.1 L628,630.1 L629,625.9 L630,625.5 L631,625.3 L632,625.9 L633,626.5 L634,627.8 L635,630.1 L636,630.1 L637,627.6 L638,626.7 L639,626.0 L640,624.1 L641,627.1 L642,626.2 L643,627.9 L644,630.1 L645,628.9 L646,627.0 L647,627.6 L648,624.6 L649,625.1 L650,626.2 L651,626.5 L652,624.4 L653,624.7 L654,624.4 L655,623.7 L656,626.1 L657,628.5 L658,630.1 L659,630.1 L660,630.1 L661,629.1 L662,625.1 L663,626.6 L664,625.9 L665,623.1 L666,623.4 L667,621.3 L668,624.0 L669,625.5 L670,625.4 L671,626.4 L672,627.4 L673,630.1 L674,630.1 L675,630.1 L676,630.1 L677,630.1 L678,630.1 L679,630.1 L680,630.1 L681,630.1 L682,630.1 L683,630.1 L684,630.1 L685,630.1 L686,630.1 L687,626.9 L688,625.3 L689,624.9 L690,623.1 L691,625.1 L692,621.8 L693,622.4 L694,621.2 L695,622.5 L696,624.7 L697,621.8 L698,622.9 L699,624.4 L700,624.8 L701,623.5 L702,624.2 L703,625.7 L704,627.5 L705,630.1 L706,627.0 L707,624.4 L708,626.6 L709,623.4 L710,622.6 L711,623.5 L712,621.7 L713,620.1 L714,621.7 L715,624.0 L716,620.9 L717,622.9 L718,620.9 L719,623.4 L720,624.9 L721,625.0 L722,625.9 L723,627.2 L724,630.1 L725,630.1 L726,630.1 L727,628.7 L728,628.8 L729,630.1 L730,630.1 L731,630.1 L732,630.1 L733,630.1 L734,624.3 L735,623.2 L736,623.1 L737,621.5 L738,621.3 L739,620.5 L740,622.5 L741,625.7 L742,630.1 L743,630.1 L744,626.3 L745,623.8 L746,625.3 L747,625.3 L748,622.6 L749,625.5 L750,624.7 L751,625.2 L752,625.5 L753,624.5 L754,624.6 L755,627.2 L756,630.1 L757,630.1 L758,627.6 L759,627.1 L760,627.2 L761,625.6 L762,626.8 L763,626.6 L764,630.1 L765,630.1 L766,630.1 L767,624.6 L768,623.9 L769,625.7 L770,624.4 L771,622.7 L772,625.2 L773,630.1 L774,629.7 L775,629.7 L776,629.4 L777,629.1 L778,629.2 L779,629.6 L780,630.1 L781,630.1 L782,630.1 L783,630.1 L784,630.1 L785,630.1 L786,630.1 L787,630.1 L788,630.1 L789,630.1 L790,630.1 L791,630.1 L792,626.4 L793,625.2 L794,623.7 L795,623.0 L796,621.4 L797,622.8 L798,623.5 L799,626.6 L800,626.7 L801,626.6 L802,630.1 L803,630.1 L804,630.1 L805,630.1 L806,627.2 L807,625.6 L808,624.8 L809,623.6 L810,622.5 L811,624.7 L812,625.3 L813,625.2 L814,623.8 L815,623.1 L816,619.6 L817,622.9 L818,623.1 L819,622.8 L820,624.0 L821,624.0 L822,625.9 L823,623.2 L824,627.7 L825,630.1 L826,630.1 L827,630.1 L828,630.1 L829,630.1 L830,630.1 L831,630.1 L832,630.1 L833,630.1 L834,630.1 L835,630.1 L836,630.1 L837,630.1 L838,627.4 L839,627.3 L840,624.6 L841,624.9 L842,622.7 L843,623.4 L844,622.3 L845,621.6 L846,624.6 L847,624.1 L848,620.7 L849,621.4 L850,623.3 L851,624.8 L852,623.6 L853,623.3 L854,624.5 L855,625.5 L856,625.8 L857,630.1 L858,630.1 L859,624.1 L860,624.3 L861,623.9 L862,622.0 L863,623.4 L864,620.3 L865,620.3 L866,621.0 L867,622.5 L868,620.5 L869,624.5 L870,630.1 L871,630.1 L872,625.5 L873,623.3 L874,625.5 L875,625.6 L876,630.1 L877,630.1 L878,628.9 L879,628.7 L880,628.2 L881,627.8 L882,629.0 L883,628.5 L884,625.4 L885,618.6 L886,625.7 L887,628.8 L888,628.9 L889,627.4 L890,627.1 L891,627.0 L892,627.3 L893,626.0 L894,627.4 L895,628.4 L896,628.8 L897,628.3 L898,630.1 L899,628.5 L900,627.1 L901,627.2 L902,626.8 L903,627.1 L904,628.2 L905,630.1 L905,631.4 L904,631.5 L903,632.3 L902,632.1 L901,632.0 L900,632.0 L899,631.4 L898,631.4 L897,631.6 L896,631.8 L895,631.7 L894,631.7 L893,631.8 L892,631.6 L891,632.1 L890,632.1 L889,631.8 L888,631.7 L887,631.8 L886,632.6 L885,633.8 L884,632.4 L883,631.7 L882,631.6 L881,632.1 L880,631.5 L879,631.5 L878,631.5 L877,631.4 L876,631.4 L875,634.0 L874,634.7 L873,636.1 L872,634.5 L871,631.4 L870,631.4 L869,633.2 L868,634.2 L867,633.8 L866,634.0 L865,635.8 L864,635.7 L863,635.6 L862,635.8 L861,634.1 L860,634.4 L859,633.5 L858,631.4 L857,631.4 L856,633.4 L855,634.4 L854,633.1 L853,633.3 L852,634.7 L851,634.7 L850,635.5 L849,634.6 L848,636.2 L847,635.9 L846,634.8 L845,636.7 L844,636.1 L843,633.5 L842,634.0 L841,635.0 L840,635.6 L839,633.9 L838,632.5 L837,631.4 L836,631.4 L835,631.4 L834,631.4 L833,631.4 L832,631.4 L831,631.4 L830,631.4 L829,631.4 L828,631.4 L827,631.4 L826,631.4 L825,631.4 L824,632.1 L823,633.8 L822,633.6 L821,633.4 L820,632.8 L819,633.4 L818,634.3 L817,634.6 L816,635.1 L815,633.4 L814,634.3 L813,633.8 L812,633.0 L811,634.2 L810,633.7 L809,633.0 L808,633.2 L807,633.3 L806,632.5 L805,631.4 L804,631.4 L803,631.4 L802,631.4 L801,632.9 L800,633.9 L799,634.8 L798,633.6 L797,635.6 L796,635.3 L795,634.7 L794,634.4 L793,633.9 L792,632.7 L791,631.4 L790,631.4 L789,631.4 L788,631.4 L787,631.4 L786,631.4 L785,631.4 L784,631.4 L783,631.4 L782,631.4 L781,631.4 L780,631.4 L779,631.4 L778,631.4 L777,631.4 L776,631.4 L775,631.4 L774,631.4 L773,631.4 L772,633.5 L771,635.7 L770,635.2 L769,635.2 L768,635.3 L767,633.5 L766,631.4 L765,631.4 L764,631.4 L763,632.1 L762,632.2 L761,633.9 L760,633.0 L759,632.7 L758,632.0 L757,631.4 L756,631.4 L755,632.2 L754,631.9 L753,632.7 L752,632.5 L751,632.5 L750,633.3 L749,632.7 L748,631.8 L747,632.0 L746,632.9 L745,633.6 L744,631.8 L743,631.4 L742,631.4 L741,634.8 L740,635.6 L739,635.7 L738,636.2 L737,636.8 L736,636.5 L735,636.1 L734,633.1 L733,631.4 L732,631.4 L731,631.4 L730,631.4 L729,631.4 L728,631.4 L727,631.4 L726,631.4 L725,631.4 L724,631.4 L723,632.1 L722,631.9 L721,632.3 L720,632.7 L719,632.8 L718,633.4 L717,632.9 L716,634.4 L715,633.6 L714,633.8 L713,634.2 L712,633.0 L711,633.3 L710,632.2 L709,633.0 L708,633.5 L707,632.9 L706,632.7 L705,631.4 L704,631.8 L703,632.4 L702,632.0 L701,633.0 L700,632.7 L699,632.6 L698,632.6 L697,632.9 L696,633.1 L695,633.0 L694,632.9 L693,632.9 L692,633.0 L691,632.5 L690,632.7 L689,632.7 L688,632.7 L687,631.5 L686,631.4 L685,631.4 L684,631.4 L683,631.4 L682,631.4 L681,631.4 L680,631.4 L679,631.4 L678,631.4 L677,631.4 L676,631.4 L675,631.4 L674,631.4 L673,631.4 L672,631.8 L671,632.0 L670,632.4 L669,631.8 L668,631.6 L667,632.3 L666,631.9 L665,632.8 L664,632.5 L663,632.3 L662,631.7 L661,631.4 L660,631.4 L659,631.4 L658,631.4 L657,631.4 L656,631.6 L655,632.4 L654,632.0 L653,632.3 L652,632.4 L651,631.9 L650,632.1 L649,632.0 L648,632.8 L647,631.8 L646,631.9 L645,631.4 L644,631.4 L643,631.5 L642,631.7 L641,632.4 L640,632.7 L639,632.2 L638,632.0 L637,631.9 L636,631.4 L635,631.4 L634,631.7 L633,631.5 L632,632.4 L631,632.3 L630,632.2 L629,632.0 L628,631.4 L627,631.4 L626,631.4 L625,631.4 L624,631.4 L623,631.4 L622,631.4 L621,631.4 L620,631.4 L619,631.4 L618,631.4 L617,631.4 L616,631.4 L615,631.4 L614,631.4 L613,631.4 L612,631.4 L611,631.4 L610,631.4 L609,631.4 L608,631.4 L607,631.4 L606,631.4 L605,631.4 L604,631.4 L603,631.4 L602,631.4 L601,631.4 L600,631.4 L599,631.4 L598,631.4 L597,631.4 L596,631.4 L595,631.4 L594,631.4 L593,631.4 L592,631.4 L591,631.4 L590,631.4 L589,631.4 L588,631.4 L587,631.4 L586,631.4 L585,631.4 Z" fill="#d9d6fb"/><path d="M905,630.1 L906,628.6 L907,627.6 L908,626.3 L909,628.0 L910,626.0 L911,627.2 L912,627.3 L913,630.1 L914,630.1 L915,630.1 L916,630.1 L917,627.5 L918,626.9 L919,622.3 L920,625.1 L921,623.6 L922,621.8 L923,625.4 L924,624.2 L925,622.5 L926,622.5 L927,623.6 L928,623.2 L929,624.2 L930,617.8 L931,623.6 L932,622.4 L933,622.5 L934,625.2 L935,626.7 L936,626.4 L937,630.1 L938,630.1 L939,630.1 L940,630.1 L941,630.1 L942,627.6 L943,624.3 L944,623.0 L945,623.4 L946,621.8 L947,625.5 L948,624.5 L949,623.2 L950,620.6 L951,620.4 L952,620.3 L953,622.7 L954,618.8 L955,622.1 L956,621.6 L957,625.7 L958,620.9 L959,623.3 L960,623.5 L961,625.3 L962,630.1 L963,630.1 L964,625.2 L965,624.7 L966,622.9 L967,625.9 L968,625.8 L969,630.1 L970,630.1 L971,627.4 L972,626.6 L973,624.6 L974,625.0 L975,622.4 L976,622.8 L977,622.8 L978,625.7 L979,625.6 L980,624.2 L981,622.0 L982,621.5 L983,622.9 L984,624.0 L985,623.5 L986,623.0 L987,623.3 L988,624.4 L989,626.1 L990,630.1 L991,627.9 L992,625.6 L993,627.3 L994,630.1 L995,630.1 L996,630.1 L997,627.3 L998,627.2 L999,630.1 L1000,630.1 L1001,630.1 L1002,630.1 L1003,630.1 L1004,626.9 L1005,625.8 L1006,626.3 L1007,626.4 L1008,622.4 L1009,624.2 L1010,622.4 L1011,623.1 L1012,623.7 L1013,622.7 L1014,622.8 L1015,623.1 L1016,626.6 L1017,625.2 L1018,627.3 L1019,627.6 L1020,626.7 L1021,630.1 L1022,630.1 L1023,630.1 L1024,625.7 L1025,623.9 L1026,623.9 L1027,623.1 L1028,621.9 L1029,624.5 L1030,622.9 L1031,623.5 L1032,625.5 L1033,624.9 L1034,625.9 L1035,625.7 L1036,625.0 L1037,622.9 L1038,622.5 L1039,622.8 L1040,626.0 L1041,625.6 L1042,625.4 L1043,628.0 L1044,630.1 L1045,630.1 L1046,630.1 L1047,630.1 L1048,630.1 L1049,626.6 L1050,625.0 L1051,621.5 L1052,620.0 L1053,624.0 L1054,624.0 L1055,622.6 L1056,624.3 L1057,622.1 L1058,622.6 L1059,618.9 L1060,622.5 L1061,622.8 L1062,624.5 L1063,623.6 L1064,620.6 L1065,619.8 L1066,623.0 L1067,624.7 L1068,623.6 L1069,626.0 L1070,627.5 L1071,630.1 L1072,630.1 L1073,626.2 L1074,626.1 L1075,621.9 L1076,624.3 L1077,624.7 L1078,625.4 L1079,624.3 L1080,624.4 L1081,623.6 L1082,626.6 L1083,623.3 L1084,625.7 L1085,625.1 L1086,626.3 L1087,625.3 L1088,627.1 L1089,630.1 L1090,630.1 L1091,630.1 L1092,630.1 L1093,628.9 L1094,628.5 L1095,628.9 L1096,627.4 L1097,627.3 L1098,628.1 L1099,628.8 L1100,627.2 L1101,628.2 L1102,627.6 L1103,628.3 L1104,628.7 L1105,630.1 L1106,630.1 L1107,630.1 L1108,628.2 L1109,626.6 L1110,625.9 L1111,627.1 L1112,627.2 L1113,626.8 L1114,626.2 L1115,626.2 L1116,626.6 L1117,626.4 L1118,625.3 L1119,624.9 L1120,627.2 L1121,625.4 L1122,624.7 L1123,627.0 L1124,624.9 L1125,627.3 L1126,625.7 L1127,625.6 L1128,625.2 L1129,626.3 L1130,626.3 L1131,626.0 L1132,626.1 L1133,624.7 L1134,625.0 L1135,623.6 L1136,626.7 L1137,625.4 L1138,626.0 L1139,627.2 L1140,626.3 L1141,626.4 L1142,626.1 L1143,628.0 L1144,627.9 L1145,630.1 L1146,630.1 L1147,630.1 L1148,630.1 L1149,630.1 L1150,630.1 L1151,630.1 L1152,630.1 L1153,630.1 L1154,630.1 L1155,628.0 L1156,627.1 L1157,627.4 L1158,625.8 L1159,625.6 L1160,623.2 L1161,625.2 L1162,623.0 L1163,620.5 L1164,623.8 L1165,623.3 L1166,623.6 L1167,622.3 L1168,623.8 L1169,621.9 L1170,621.9 L1171,624.4 L1172,621.8 L1173,618.2 L1174,624.7 L1175,624.6 L1176,623.8 L1177,625.6 L1178,622.8 L1179,624.7 L1180,623.4 L1181,624.3 L1182,625.2 L1183,624.7 L1184,627.1 L1185,627.8 L1186,630.1 L1187,630.1 L1188,626.8 L1189,630.1 L1190,630.1 L1191,630.1 L1192,630.1 L1193,629.2 L1194,629.6 L1195,628.8 L1196,629.4 L1197,628.9 L1198,628.8 L1199,628.6 L1200,628.7 L1201,629.4 L1202,630.1 L1203,630.1 L1204,630.1 L1205,630.1 L1206,630.1 L1207,629.8 L1208,629.2 L1209,629.5 L1210,628.6 L1211,628.7 L1212,628.8 L1213,628.4 L1214,628.8 L1215,629.2 L1216,628.7 L1217,629.6 L1218,629.1 L1219,629.7 L1220,630.1 L1221,630.1 L1222,630.1 L1223,627.6 L1224,627.9 L1225,628.1 L1226,626.4 L1227,626.7 L1228,623.7 L1229,626.1 L1230,624.5 L1231,622.8 L1232,626.9 L1233,626.5 L1234,623.2 L1235,626.5 L1236,626.4 L1237,625.0 L1238,623.8 L1239,624.4 L1240,625.4 L1241,625.2 L1242,625.8 L1243,627.0 L1244,626.0 L1245,626.6 L1246,627.6 L1247,626.2 L1248,627.6 L1249,630.1 L1250,630.1 L1251,630.1 L1252,630.1 L1253,630.1 L1254,630.1 L1255,630.1 L1256,630.1 L1257,630.1 L1258,630.1 L1259,630.1 L1260,619.3 L1261,619.6 L1262,618.8 L1263,622.3 L1264,630.1 L1265,624.2 L1266,626.4 L1267,624.8 L1268,625.3 L1269,625.9 L1270,626.4 L1271,623.9 L1272,626.6 L1273,624.5 L1274,623.0 L1275,626.0 L1276,624.0 L1277,623.7 L1278,624.0 L1279,623.2 L1280,621.9 L1281,624.1 L1282,624.2 L1283,625.3 L1284,626.8 L1285,624.2 L1286,624.6 L1287,625.2 L1288,627.7 L1289,630.1 L1290,630.1 L1291,630.1 L1292,630.1 L1293,628.0 L1294,627.2 L1295,625.5 L1296,625.8 L1297,625.2 L1298,625.9 L1299,624.7 L1300,624.8 L1301,624.2 L1302,624.7 L1303,626.2 L1304,625.2 L1305,625.7 L1306,624.8 L1307,625.5 L1308,626.7 L1309,627.6 L1310,630.1 L1311,630.1 L1312,627.2 L1313,627.5 L1314,627.3 L1315,626.9 L1316,624.9 L1317,623.9 L1318,624.3 L1319,625.5 L1320,623.7 L1321,625.5 L1322,624.4 L1323,623.8 L1324,622.4 L1325,623.6 L1326,623.4 L1327,622.6 L1328,624.4 L1329,623.6 L1330,624.5 L1331,624.8 L1332,626.5 L1333,626.1 L1334,626.8 L1335,628.0 L1336,630.1 L1337,630.1 L1338,630.1 L1339,630.1 L1340,628.0 L1341,627.5 L1342,627.1 L1343,625.3 L1344,625.3 L1345,627.3 L1346,628.0 L1347,628.4 L1348,627.9 L1349,630.1 L1350,630.1 L1351,630.1 L1352,630.1 L1353,630.1 L1354,630.1 L1355,630.1 L1356,630.1 L1357,630.1 L1358,630.1 L1359,630.1 L1360,630.1 L1361,630.1 L1362,630.1 L1363,630.1 L1364,630.1 L1365,626.0 L1366,619.6 L1367,622.3 L1368,623.2 L1369,621.9 L1370,622.1 L1371,623.9 L1372,626.0 L1373,630.1 L1374,630.1 L1375,630.1 L1376,630.1 L1377,630.1 L1378,627.4 L1379,624.9 L1380,626.5 L1381,630.1 L1382,630.1 L1383,630.1 L1384,624.5 L1385,623.1 L1386,620.0 L1387,617.4 L1388,623.2 L1389,618.8 L1390,621.8 L1391,621.2 L1392,624.4 L1393,630.1 L1394,630.1 L1395,630.1 L1396,630.1 L1397,630.1 L1398,630.1 L1399,625.6 L1400,624.9 L1401,623.4 L1402,621.1 L1403,620.5 L1404,624.8 L1405,622.5 L1406,622.3 L1407,621.0 L1408,624.4 L1409,624.5 L1410,626.0 L1411,623.5 L1412,630.1 L1413,630.1 L1414,628.7 L1415,628.3 L1416,626.6 L1417,628.1 L1418,630.1 L1419,630.1 L1420,630.1 L1421,630.1 L1422,630.1 L1423,630.1 L1424,628.8 L1425,628.8 L1426,628.5 L1427,628.3 L1428,627.5 L1429,628.5 L1430,626.1 L1431,628.4 L1432,628.4 L1433,628.8 L1434,628.4 L1435,629.1 L1436,630.1 L1437,630.1 L1438,630.1 L1439,630.1 L1440,630.1 L1441,630.1 L1442,630.1 L1443,630.1 L1444,629.0 L1445,628.1 L1446,628.8 L1447,627.3 L1448,627.1 L1449,626.7 L1450,627.9 L1451,627.3 L1452,628.0 L1453,628.7 L1454,630.1 L1455,630.1 L1456,630.1 L1457,630.1 L1458,630.1 L1459,630.1 L1460,630.1 L1461,630.1 L1462,630.1 L1463,630.1 L1464,630.1 L1465,630.1 L1466,630.1 L1467,630.1 L1468,630.1 L1469,630.1 L1470,630.1 L1471,630.1 L1472,630.1 L1473,630.1 L1474,630.1 L1475,630.1 L1476,630.1 L1477,630.1 L1478,630.1 L1479,630.1 L1480,630.1 L1481,630.1 L1482,630.1 L1483,630.1 L1484,630.1 L1485,630.1 L1486,630.1 L1487,630.1 L1488,624.4 L1489,622.6 L1490,616.7 L1491,619.4 L1492,620.6 L1493,617.7 L1494,618.8 L1495,618.1 L1496,619.4 L1497,623.4 L1498,623.9 L1499,625.8 L1500,627.1 L1501,626.6 L1502,624.3 L1503,623.2 L1504,623.3 L1505,623.5 L1506,622.9 L1507,623.6 L1508,623.8 L1509,624.9 L1510,626.3 L1511,630.1 L1512,630.1 L1513,630.1 L1514,630.1 L1515,630.1 L1516,623.5 L1517,625.1 L1518,626.2 L1519,630.1 L1520,630.1 L1521,630.1 L1522,630.1 L1523,630.1 L1524,627.8 L1525,626.0 L1526,624.9 L1527,625.4 L1528,624.6 L1529,622.4 L1530,625.0 L1531,623.5 L1532,625.0 L1533,621.0 L1534,623.0 L1535,624.8 L1536,626.4 L1537,625.4 L1538,625.9 L1539,626.4 L1540,630.1 L1541,628.2 L1542,626.4 L1543,626.8 L1544,628.1 L1545,627.2 L1546,628.2 L1547,626.7 L1548,627.0 L1549,626.4 L1550,627.8 L1551,626.7 L1552,627.9 L1553,628.7 L1554,630.1 L1555,630.1 L1556,630.1 L1557,630.1 L1558,630.1 L1559,630.1 L1560,630.1 L1561,630.1 L1562,630.1 L1563,630.1 L1564,630.1 L1565,630.1 L1566,630.1 L1566,631.4 L1565,631.4 L1564,631.4 L1563,631.4 L1562,631.4 L1561,631.4 L1560,631.4 L1559,631.4 L1558,631.4 L1557,631.4 L1556,631.4 L1555,631.4 L1554,631.4 L1553,631.8 L1552,632.1 L1551,632.3 L1550,632.0 L1549,632.7 L1548,632.7 L1547,632.9 L1546,632.4 L1545,632.6 L1544,632.0 L1543,633.0 L1542,632.2 L1541,631.7 L1540,631.4 L1539,632.7 L1538,633.4 L1537,633.1 L1536,632.9 L1535,633.7 L1534,633.8 L1533,633.6 L1532,633.4 L1531,633.4 L1530,633.7 L1529,633.2 L1528,632.5 L1527,633.0 L1526,633.7 L1525,633.5 L1524,633.2 L1523,631.4 L1522,631.4 L1521,631.4 L1520,631.4 L1519,631.4 L1518,633.8 L1517,633.7 L1516,635.4 L1515,631.4 L1514,631.4 L1513,631.4 L1512,631.4 L1511,631.4 L1510,634.0 L1509,634.8 L1508,634.9 L1507,635.5 L1506,636.9 L1505,635.7 L1504,636.0 L1503,633.2 L1502,633.6 L1501,634.5 L1500,633.5 L1499,633.3 L1498,635.6 L1497,634.4 L1496,636.2 L1495,637.1 L1494,635.6 L1493,638.1 L1492,635.7 L1491,635.9 L1490,636.3 L1489,635.9 L1488,635.1 L1487,631.4 L1486,631.4 L1485,631.4 L1484,631.4 L1483,631.4 L1482,631.4 L1481,631.4 L1480,631.4 L1479,631.4 L1478,631.4 L1477,631.4 L1476,631.4 L1475,631.4 L1474,631.4 L1473,631.4 L1472,631.4 L1471,631.4 L1470,631.4 L1469,631.4 L1468,631.4 L1467,631.4 L1466,631.4 L1465,631.4 L1464,631.4 L1463,631.4 L1462,631.4 L1461,631.4 L1460,631.4 L1459,631.4 L1458,631.4 L1457,631.4 L1456,631.4 L1455,631.4 L1454,631.4 L1453,631.4 L1452,631.5 L1451,631.9 L1450,631.4 L1449,631.6 L1448,631.7 L1447,632.0 L1446,632.0 L1445,632.1 L1444,631.6 L1443,631.4 L1442,631.4 L1441,631.4 L1440,631.4 L1439,631.4 L1438,631.4 L1437,631.4 L1436,631.4 L1435,631.4 L1434,631.6 L1433,631.8 L1432,631.5 L1431,631.6 L1430,631.6 L1429,631.7 L1428,631.4 L1427,631.4 L1426,631.5 L1425,631.4 L1424,631.4 L1423,631.4 L1422,631.4 L1421,631.4 L1420,631.4 L1419,631.4 L1418,631.4 L1417,631.6 L1416,632.5 L1415,631.6 L1414,631.5 L1413,631.4 L1412,631.4 L1411,636.1 L1410,636.6 L1409,635.8 L1408,637.5 L1407,635.4 L1406,635.5 L1405,634.6 L1404,635.4 L1403,636.6 L1402,634.3 L1401,636.1 L1400,634.3 L1399,634.8 L1398,631.4 L1397,631.4 L1396,631.4 L1395,631.4 L1394,631.4 L1393,631.4 L1392,635.3 L1391,634.7 L1390,634.8 L1389,639.6 L1388,636.5 L1387,638.5 L1386,637.0 L1385,634.5 L1384,633.3 L1383,631.4 L1382,631.4 L1381,631.4 L1380,631.9 L1379,632.7 L1378,631.5 L1377,631.4 L1376,631.4 L1375,631.4 L1374,631.4 L1373,631.4 L1372,633.0 L1371,633.4 L1370,634.9 L1369,633.9 L1368,634.3 L1367,633.7 L1366,634.2 L1365,633.5 L1364,631.4 L1363,631.4 L1362,631.4 L1361,631.4 L1360,631.4 L1359,631.4 L1358,631.4 L1357,631.4 L1356,631.4 L1355,631.4 L1354,631.4 L1353,631.4 L1352,631.4 L1351,631.4 L1350,631.4 L1349,631.4 L1348,631.8 L1347,631.5 L1346,631.6 L1345,631.9 L1344,632.2 L1343,632.2 L1342,631.9 L1341,632.0 L1340,631.4 L1339,631.4 L1338,631.4 L1337,631.4 L1336,631.4 L1335,631.6 L1334,631.6 L1333,631.9 L1332,632.0 L1331,632.2 L1330,632.6 L1329,632.3 L1328,632.7 L1327,632.0 L1326,631.9 L1325,632.6 L1324,633.2 L1323,632.9 L1322,633.1 L1321,632.2 L1320,632.0 L1319,631.8 L1318,632.2 L1317,631.7 L1316,631.6 L1315,631.7 L1314,631.7 L1313,632.0 L1312,631.4 L1311,631.4 L1310,631.4 L1309,631.7 L1308,632.3 L1307,632.3 L1306,633.2 L1305,633.2 L1304,633.5 L1303,632.7 L1302,632.5 L1301,633.9 L1300,633.4 L1299,634.1 L1298,633.5 L1297,633.5 L1296,633.5 L1295,634.5 L1294,632.6 L1293,632.2 L1292,631.4 L1291,631.4 L1290,631.4 L1289,631.4 L1288,632.7 L1287,632.7 L1286,632.4 L1285,632.9 L1284,633.8 L1283,634.1 L1282,634.2 L1281,634.4 L1280,634.8 L1279,633.4 L1278,634.0 L1277,634.6 L1276,636.4 L1275,633.9 L1274,633.1 L1273,633.9 L1272,633.4 L1271,633.2 L1270,634.2 L1269,633.4 L1268,632.9 L1267,633.0 L1266,633.5 L1265,633.6 L1264,631.4 L1263,639.6 L1262,640.4 L1261,640.5 L1260,638.0 L1259,631.4 L1258,631.4 L1257,631.4 L1256,631.4 L1255,631.4 L1254,631.4 L1253,631.4 L1252,631.4 L1251,631.4 L1250,631.4 L1249,631.4 L1248,632.2 L1247,632.7 L1246,633.3 L1245,633.1 L1244,632.8 L1243,632.0 L1242,632.0 L1241,633.3 L1240,632.8 L1239,633.0 L1238,635.5 L1237,634.0 L1236,633.7 L1235,632.9 L1234,634.7 L1233,632.6 L1232,633.2 L1231,633.6 L1230,632.8 L1229,632.4 L1228,632.7 L1227,632.6 L1226,633.4 L1225,633.0 L1224,632.7 L1223,632.0 L1222,631.4 L1221,631.4 L1220,631.4 L1219,631.4 L1218,631.5 L1217,631.4 L1216,631.4 L1215,631.4 L1214,631.5 L1213,631.6 L1212,631.6 L1211,631.4 L1210,631.4 L1209,631.5 L1208,631.4 L1207,631.4 L1206,631.4 L1205,631.4 L1204,631.4 L1203,631.4 L1202,631.4 L1201,631.6 L1200,631.8 L1199,631.8 L1198,631.6 L1197,631.7 L1196,631.7 L1195,631.6 L1194,631.6 L1193,631.4 L1192,631.4 L1191,631.4 L1190,631.4 L1189,631.4 L1188,631.9 L1187,631.4 L1186,631.4 L1185,631.7 L1184,632.0 L1183,633.0 L1182,632.8 L1181,633.3 L1180,632.4 L1179,633.0 L1178,633.8 L1177,632.5 L1176,632.6 L1175,633.7 L1174,632.9 L1173,635.1 L1172,633.2 L1171,634.0 L1170,634.1 L1169,633.2 L1168,633.9 L1167,633.2 L1166,633.5 L1165,633.8 L1164,633.4 L1163,634.4 L1162,633.2 L1161,633.4 L1160,633.4 L1159,633.5 L1158,633.5 L1157,633.1 L1156,632.6 L1155,632.1 L1154,631.4 L1153,631.4 L1152,631.4 L1151,631.4 L1150,631.4 L1149,631.4 L1148,631.4 L1147,631.4 L1146,631.4 L1145,631.4 L1144,631.7 L1143,631.8 L1142,632.4 L1141,632.2 L1140,632.7 L1139,632.9 L1138,632.9 L1137,633.1 L1136,633.5 L1135,633.8 L1134,632.4 L1133,633.0 L1132,632.7 L1131,632.7 L1130,633.5 L1129,632.6 L1128,632.6 L1127,632.3 L1126,633.0 L1125,633.4 L1124,633.1 L1123,632.9 L1122,633.4 L1121,632.7 L1120,633.2 L1119,632.2 L1118,633.1 L1117,633.1 L1116,632.9 L1115,632.7 L1114,632.9 L1113,632.6 L1112,632.7 L1111,631.8 L1110,631.7 L1109,632.2 L1108,632.0 L1107,631.4 L1106,631.4 L1105,631.4 L1104,631.5 L1103,631.5 L1102,631.6 L1101,632.0 L1100,632.1 L1099,631.8 L1098,631.5 L1097,632.1 L1096,632.2 L1095,632.1 L1094,632.2 L1093,631.6 L1092,631.4 L1091,631.4 L1090,631.4 L1089,631.4 L1088,632.6 L1087,633.9 L1086,632.7 L1085,633.0 L1084,633.3 L1083,633.3 L1082,633.0 L1081,634.4 L1080,634.2 L1079,632.9 L1078,633.5 L1077,633.1 L1076,632.4 L1075,633.8 L1074,632.5 L1073,631.7 L1072,631.4 L1071,631.4 L1070,633.5 L1069,633.9 L1068,633.9 L1067,633.3 L1066,633.3 L1065,635.2 L1064,635.8 L1063,633.9 L1062,635.9 L1061,635.8 L1060,635.9 L1059,635.4 L1058,633.4 L1057,635.5 L1056,636.5 L1055,634.9 L1054,634.2 L1053,635.8 L1052,635.2 L1051,634.3 L1050,633.4 L1049,633.3 L1048,631.4 L1047,631.4 L1046,631.4 L1045,631.4 L1044,631.4 L1043,632.7 L1042,633.9 L1041,634.3 L1040,633.2 L1039,635.0 L1038,633.2 L1037,634.2 L1036,634.1 L1035,635.2 L1034,635.0 L1033,634.7 L1032,633.8 L1031,634.9 L1030,634.7 L1029,634.6 L1028,633.5 L1027,634.1 L1026,634.0 L1025,633.2 L1024,632.4 L1023,631.4 L1022,631.4 L1021,631.4 L1020,632.7 L1019,632.8 L1018,633.5 L1017,633.0 L1016,633.0 L1015,633.6 L1014,634.0 L1013,633.6 L1012,634.2 L1011,633.5 L1010,633.8 L1009,633.4 L1008,634.7 L1007,632.7 L1006,632.7 L1005,632.8 L1004,632.9 L1003,631.4 L1002,631.4 L1001,631.4 L1000,631.4 L999,631.4 L998,631.7 L997,631.7 L996,631.4 L995,631.4 L994,631.4 L993,633.1 L992,632.5 L991,632.1 L990,631.4 L989,632.4 L988,633.9 L987,633.4 L986,632.8 L985,633.4 L984,634.4 L983,633.3 L982,633.7 L981,634.1 L980,634.9 L979,633.3 L978,634.7 L977,633.5 L976,634.2 L975,633.0 L974,633.9 L973,632.7 L972,632.4 L971,633.1 L970,631.4 L969,631.4 L968,633.6 L967,633.6 L966,633.4 L965,633.3 L964,633.3 L963,631.4 L962,631.4 L961,634.4 L960,633.7 L959,636.0 L958,635.0 L957,636.5 L956,635.2 L955,636.0 L954,636.9 L953,636.2 L952,639.4 L951,635.0 L950,634.5 L949,635.0 L948,634.3 L947,635.9 L946,633.7 L945,634.6 L944,635.2 L943,633.5 L942,632.9 L941,631.4 L940,631.4 L939,631.4 L938,631.4 L937,631.4 L936,633.2 L935,634.2 L934,634.7 L933,635.0 L932,633.8 L931,635.4 L930,636.1 L929,636.2 L928,637.4 L927,637.5 L926,633.9 L925,635.6 L924,633.4 L923,633.7 L922,634.9 L921,633.3 L920,634.7 L919,634.7 L918,633.8 L917,632.6 L916,631.4 L915,631.4 L914,631.4 L913,631.4 L912,631.6 L911,632.1 L910,632.0 L909,631.9 L908,632.1 L907,632.2 L906,631.7 L905,631.4 Z" fill="#8c8c8e"/><rect x="585" y="691.6" width="617" height="133.39999999999998" fill="#2f2f30"/><rect x="635.3" y="691.6" width="1" height="133.39999999999998" fill="#3b3b3c"/><rect x="687.9" y="691.6" width="1" height="133.39999999999998" fill="#3b3b3c"/><rect x="740.4" y="691.6" width="1" height="133.39999999999998" fill="#3b3b3c"/><rect x="793.0" y="691.6" width="1" height="133.39999999999998" fill="#3b3b3c"/><rect x="845.5" y="691.6" width="1" height="133.39999999999998" fill="#3b3b3c"/><rect x="898.0" y="691.6" width="1" height="133.39999999999998" fill="#3b3b3c"/><rect x="950.6" y="691.6" width="1" height="133.39999999999998" fill="#3b3b3c"/><rect x="1003.1" y="691.6" width="1" height="133.39999999999998" fill="#3b3b3c"/><rect x="1055.7" y="691.6" width="1" height="133.39999999999998" fill="#3b3b3c"/><rect x="1108.2" y="691.6" width="1" height="133.39999999999998" fill="#3b3b3c"/><rect x="1160.7" y="691.6" width="1" height="133.39999999999998" fill="#3b3b3c"/><rect x="1202" y="691.6" width="264" height="133.39999999999998" fill="#5b3fd8"/><rect x="1466" y="691.6" width="100" height="133.39999999999998" fill="#2f2f30"/><rect x="1476.0" y="691.6" width="1" height="133.39999999999998" fill="#3b3b3c"/><rect x="1528.5" y="691.6" width="1" height="133.39999999999998" fill="#3b3b3c"/><path d="M585,766.6 L586,766.6 L587,766.6 L588,766.6 L589,766.6 L590,766.6 L591,766.6 L592,766.6 L593,766.6 L594,766.6 L595,766.6 L596,766.6 L597,766.6 L598,766.6 L599,766.6 L600,766.6 L601,766.6 L602,766.6 L603,766.6 L604,766.6 L605,766.6 L606,766.6 L607,766.6 L608,766.6 L609,766.6 L610,766.6 L611,766.6 L612,766.6 L613,766.6 L614,766.6 L615,766.6 L616,766.6 L617,766.6 L618,766.6 L619,766.6 L620,766.6 L621,766.6 L622,766.6 L623,766.6 L624,766.6 L625,766.6 L626,766.6 L627,766.6 L628,766.6 L629,762.7 L630,762.4 L631,762.2 L632,762.8 L633,763.3 L634,764.5 L635,766.6 L636,766.6 L637,764.4 L638,763.5 L639,762.8 L640,761.0 L641,763.9 L642,763.0 L643,764.6 L644,766.6 L645,765.6 L646,763.8 L647,764.4 L648,761.5 L649,762.0 L650,763.1 L651,763.3 L652,761.3 L653,761.6 L654,761.3 L655,760.7 L656,763.0 L657,765.2 L658,766.6 L659,766.6 L660,766.6 L661,765.8 L662,762.0 L663,763.4 L664,762.8 L665,760.1 L666,760.4 L667,758.4 L668,760.9 L669,762.4 L670,762.3 L671,763.2 L672,764.2 L673,766.6 L674,766.6 L675,766.6 L676,766.6 L677,766.6 L678,766.6 L679,766.6 L680,766.6 L681,766.6 L682,766.6 L683,766.6 L684,766.6 L685,766.6 L686,766.6 L687,763.7 L688,762.2 L689,761.8 L690,760.0 L691,762.0 L692,758.9 L693,759.4 L694,758.2 L695,759.5 L696,761.6 L697,758.9 L698,759.9 L699,761.4 L700,761.7 L701,760.5 L702,761.1 L703,762.5 L704,764.2 L705,766.6 L706,763.7 L707,761.4 L708,763.4 L709,760.4 L710,759.6 L711,760.5 L712,758.7 L713,757.2 L714,758.7 L715,761.0 L716,758.0 L717,759.9 L718,758.0 L719,760.3 L720,761.8 L721,761.8 L722,762.7 L723,764.0 L724,766.6 L725,766.6 L726,766.6 L727,765.4 L728,765.5 L729,766.6 L730,766.6 L731,766.6 L732,766.6 L733,766.6 L734,761.2 L735,760.2 L736,760.0 L737,758.5 L738,758.3 L739,757.6 L740,759.5 L741,762.5 L742,766.6 L743,766.6 L744,763.1 L745,760.7 L746,762.1 L747,762.2 L748,759.6 L749,762.4 L750,761.6 L751,762.1 L752,762.3 L753,761.4 L754,761.5 L755,764.0 L756,766.6 L757,766.6 L758,764.3 L759,763.9 L760,764.0 L761,762.4 L762,763.6 L763,763.4 L764,766.6 L765,766.6 L766,766.6 L767,761.5 L768,760.9 L769,762.6 L770,761.3 L771,759.7 L772,762.1 L773,766.6 L774,766.3 L775,766.4 L776,766.0 L777,765.8 L778,765.9 L779,766.3 L780,766.6 L781,766.6 L782,766.6 L783,766.6 L784,766.6 L785,766.6 L786,766.6 L787,766.6 L788,766.6 L789,766.6 L790,766.6 L791,766.6 L792,763.2 L793,762.1 L794,760.7 L795,759.9 L796,758.4 L797,759.8 L798,760.5 L799,763.4 L800,763.5 L801,763.4 L802,766.6 L803,766.6 L804,766.6 L805,766.6 L806,763.9 L807,762.5 L808,761.7 L809,760.6 L810,759.5 L811,761.6 L812,762.2 L813,762.1 L814,760.7 L815,760.1 L816,756.8 L817,759.9 L818,760.1 L819,759.8 L820,760.9 L821,760.9 L822,762.7 L823,760.2 L824,764.4 L825,766.6 L826,766.6 L827,766.6 L828,766.6 L829,766.6 L830,766.6 L831,766.6 L832,766.6 L833,766.6 L834,766.6 L835,766.6 L836,766.6 L837,766.6 L838,764.2 L839,764.1 L840,761.5 L841,761.8 L842,759.7 L843,760.3 L844,759.3 L845,758.6 L846,761.5 L847,761.0 L848,757.8 L849,758.5 L850,760.2 L851,761.7 L852,760.6 L853,760.3 L854,761.4 L855,762.4 L856,762.6 L857,766.6 L858,766.6 L859,761.0 L860,761.2 L861,760.8 L862,759.0 L863,760.4 L864,757.4 L865,757.4 L866,758.1 L867,759.5 L868,757.6 L869,761.4 L870,766.6 L871,766.6 L872,762.4 L873,760.3 L874,762.4 L875,762.4 L876,766.6 L877,766.6 L878,765.6 L879,765.4 L880,765.0 L881,764.6 L882,765.6 L883,765.2 L884,762.2 L885,755.8 L886,762.5 L887,765.5 L888,765.6 L889,764.2 L890,763.9 L891,763.8 L892,764.1 L893,762.8 L894,764.1 L895,765.1 L896,765.5 L897,765.0 L898,766.6 L899,765.2 L900,763.9 L901,764.0 L902,763.6 L903,763.8 L904,764.9 L905,766.6 L906,765.3 L907,764.3 L908,763.1 L909,764.8 L910,762.8 L911,764.0 L912,764.1 L913,766.6 L914,766.6 L915,766.6 L916,766.6 L917,764.3 L918,763.7 L919,759.4 L920,761.9 L921,760.6 L922,758.8 L923,762.2 L924,761.2 L925,759.5 L926,759.5 L927,760.5 L928,760.1 L929,761.1 L930,755.0 L931,760.5 L932,759.4 L933,759.5 L934,762.1 L935,763.5 L936,763.2 L937,766.6 L938,766.6 L939,766.6 L940,766.6 L941,766.6 L942,764.4 L943,761.2 L944,759.9 L945,760.4 L946,758.8 L947,762.4 L948,761.4 L949,760.1 L950,757.7 L951,757.5 L952,757.4 L953,759.7 L954,756.0 L955,759.1 L956,758.7 L957,762.6 L958,758.0 L959,760.2 L960,760.5 L961,762.1 L962,766.6 L963,766.6 L964,762.0 L965,761.6 L966,759.9 L967,762.8 L968,762.7 L969,766.6 L970,766.6 L971,764.2 L972,763.4 L973,761.5 L974,761.9 L975,759.5 L976,759.8 L977,759.8 L978,762.6 L979,762.5 L980,761.2 L981,759.0 L982,758.5 L983,759.9 L984,761.0 L985,760.5 L986,760.0 L987,760.3 L988,761.3 L989,762.9 L990,766.6 L991,764.6 L992,762.5 L993,764.1 L994,766.6 L995,766.6 L996,766.6 L997,764.0 L998,764.0 L999,766.6 L1000,766.6 L1001,766.6 L1002,766.6 L1003,766.6 L1004,763.7 L1005,762.6 L1006,763.1 L1007,763.3 L1008,759.4 L1009,761.2 L1010,759.4 L1011,760.1 L1012,760.6 L1013,759.7 L1014,759.8 L1015,760.1 L1016,763.5 L1017,762.1 L1018,764.1 L1019,764.3 L1020,763.5 L1021,766.6 L1022,766.6 L1023,766.6 L1024,762.5 L1025,760.8 L1026,760.8 L1027,760.1 L1028,758.9 L1029,761.4 L1030,759.9 L1031,760.5 L1032,762.4 L1033,761.8 L1034,762.7 L1035,762.5 L1036,761.9 L1037,759.9 L1038,759.5 L1039,759.8 L1040,762.8 L1041,762.4 L1042,762.3 L1043,764.7 L1044,766.6 L1045,766.6 L1046,766.6 L1047,766.6 L1048,766.6 L1049,763.4 L1050,761.8 L1051,758.5 L1052,757.1 L1053,760.9 L1054,760.9 L1055,759.6 L1056,761.2 L1057,759.1 L1058,759.6 L1059,756.1 L1060,759.5 L1061,759.7 L1062,761.4 L1063,760.6 L1064,757.7 L1065,756.9 L1066,760.0 L1067,761.6 L1068,760.6 L1069,762.9 L1070,764.3 L1071,766.6 L1072,766.6 L1073,763.0 L1074,762.9 L1075,759.0 L1076,761.2 L1077,761.6 L1078,762.3 L1079,761.2 L1080,761.3 L1081,760.5 L1082,763.4 L1083,760.3 L1084,762.6 L1085,762.0 L1086,763.1 L1087,762.2 L1088,763.9 L1089,766.6 L1090,766.6 L1091,766.6 L1092,766.6 L1093,765.6 L1094,765.2 L1095,765.5 L1096,764.2 L1097,764.0 L1098,764.8 L1099,765.5 L1100,764.0 L1101,764.9 L1102,764.3 L1103,765.0 L1104,765.4 L1105,766.6 L1106,766.6 L1107,766.6 L1108,764.9 L1109,763.4 L1110,762.7 L1111,763.9 L1112,763.9 L1113,763.6 L1114,763.0 L1115,763.0 L1116,763.4 L1117,763.2 L1118,762.1 L1119,761.8 L1120,763.9 L1121,762.3 L1122,761.6 L1123,763.8 L1124,761.8 L1125,764.1 L1126,762.5 L1127,762.4 L1128,762.1 L1129,763.2 L1130,763.1 L1131,762.8 L1132,762.9 L1133,761.6 L1134,761.9 L1135,760.6 L1136,763.5 L1137,762.2 L1138,762.9 L1139,764.0 L1140,763.1 L1141,763.2 L1142,763.0 L1143,764.7 L1144,764.7 L1145,766.6 L1146,766.6 L1147,766.6 L1148,766.6 L1149,766.6 L1150,766.6 L1151,766.6 L1152,766.6 L1153,766.6 L1154,766.6 L1155,764.8 L1156,763.8 L1157,764.2 L1158,762.7 L1159,762.5 L1160,760.2 L1161,762.1 L1162,760.0 L1163,757.6 L1164,760.8 L1165,760.3 L1166,760.5 L1167,759.3 L1168,760.8 L1169,758.9 L1170,758.9 L1171,761.3 L1172,758.8 L1173,755.5 L1174,761.6 L1175,761.5 L1176,760.8 L1177,762.5 L1178,759.8 L1179,761.6 L1180,760.3 L1181,761.3 L1182,762.1 L1183,761.6 L1184,763.8 L1185,764.6 L1186,766.6 L1187,766.6 L1188,763.6 L1189,766.6 L1190,766.6 L1191,766.6 L1192,766.6 L1193,765.9 L1194,766.2 L1195,765.5 L1196,766.1 L1197,765.6 L1198,765.5 L1199,765.3 L1200,765.4 L1201,766.0 L1202,766.6 L1202,767.9 L1201,768.2 L1200,768.3 L1199,768.4 L1198,768.2 L1197,768.2 L1196,768.3 L1195,768.1 L1194,768.1 L1193,768.0 L1192,767.9 L1191,767.9 L1190,767.9 L1189,767.9 L1188,768.4 L1187,767.9 L1186,767.9 L1185,768.2 L1184,768.5 L1183,769.5 L1182,769.3 L1181,769.8 L1180,768.9 L1179,769.5 L1178,770.2 L1177,769.0 L1176,769.1 L1175,770.1 L1174,769.4 L1173,771.5 L1172,769.7 L1171,770.4 L1170,770.6 L1169,769.6 L1168,770.4 L1167,769.7 L1166,769.9 L1165,770.2 L1164,769.9 L1163,770.8 L1162,769.7 L1161,769.9 L1160,769.9 L1159,770.0 L1158,770.0 L1157,769.6 L1156,769.1 L1155,768.6 L1154,767.9 L1153,767.9 L1152,767.9 L1151,767.9 L1150,767.9 L1149,767.9 L1148,767.9 L1147,767.9 L1146,767.9 L1145,767.9 L1144,768.3 L1143,768.4 L1142,768.9 L1141,768.8 L1140,769.2 L1139,769.4 L1138,769.4 L1137,769.6 L1136,769.9 L1135,770.2 L1134,768.9 L1133,769.5 L1132,769.2 L1131,769.2 L1130,770.0 L1129,769.1 L1128,769.1 L1127,768.9 L1126,769.5 L1125,769.9 L1124,769.6 L1123,769.4 L1122,769.8 L1121,769.2 L1120,769.6 L1119,768.8 L1118,769.6 L1117,769.6 L1116,769.4 L1115,769.2 L1114,769.4 L1113,769.1 L1112,769.2 L1111,768.4 L1110,768.2 L1109,768.7 L1108,768.6 L1107,767.9 L1106,767.9 L1105,767.9 L1104,768.0 L1103,768.1 L1102,768.1 L1101,768.6 L1100,768.6 L1099,768.4 L1098,768.1 L1097,768.6 L1096,768.7 L1095,768.7 L1094,768.7 L1093,768.1 L1092,767.9 L1091,767.9 L1090,767.9 L1089,767.9 L1088,769.1 L1087,770.3 L1086,769.2 L1085,769.5 L1084,769.8 L1083,769.8 L1082,769.5 L1081,770.8 L1080,770.7 L1079,769.4 L1078,770.0 L1077,769.6 L1076,768.9 L1075,770.2 L1074,769.0 L1073,768.3 L1072,767.9 L1071,767.9 L1070,769.9 L1069,770.4 L1068,770.3 L1067,769.8 L1066,769.8 L1065,771.6 L1064,772.2 L1063,770.4 L1062,772.2 L1061,772.1 L1060,772.3 L1059,771.8 L1058,769.9 L1057,771.9 L1056,772.8 L1055,771.3 L1054,770.6 L1053,772.1 L1052,771.5 L1051,770.7 L1050,769.8 L1049,769.8 L1048,767.9 L1047,767.9 L1046,767.9 L1045,767.9 L1044,767.9 L1043,769.2 L1042,770.3 L1041,770.7 L1040,769.7 L1039,771.4 L1038,769.7 L1037,770.6 L1036,770.5 L1035,771.6 L1034,771.4 L1033,771.1 L1032,770.2 L1031,771.3 L1030,771.1 L1029,771.0 L1028,770.0 L1027,770.5 L1026,770.4 L1025,769.7 L1024,768.9 L1023,767.9 L1022,767.9 L1021,767.9 L1020,769.2 L1019,769.3 L1018,770.0 L1017,769.5 L1016,769.5 L1015,770.1 L1014,770.5 L1013,770.0 L1012,770.6 L1011,770.0 L1010,770.2 L1009,769.8 L1008,771.1 L1007,769.2 L1006,769.2 L1005,769.3 L1004,769.4 L1003,767.9 L1002,767.9 L1001,767.9 L1000,767.9 L999,767.9 L998,768.2 L997,768.2 L996,767.9 L995,767.9 L994,767.9 L993,769.6 L992,769.0 L991,768.6 L990,767.9 L989,768.9 L988,770.4 L987,769.9 L986,769.3 L985,769.9 L984,770.8 L983,769.8 L982,770.1 L981,770.6 L980,771.3 L979,769.8 L978,771.1 L977,770.0 L976,770.6 L975,769.4 L974,770.3 L973,769.2 L972,768.9 L971,769.6 L970,767.9 L969,767.9 L968,770.0 L967,770.0 L966,769.9 L965,769.7 L964,769.7 L963,767.9 L962,767.9 L961,770.9 L960,770.2 L959,772.3 L958,771.4 L957,772.8 L956,771.6 L955,772.3 L954,773.2 L953,772.6 L952,775.6 L951,771.4 L950,770.9 L949,771.4 L948,770.7 L947,772.2 L946,770.2 L945,771.0 L944,771.5 L943,770.0 L942,769.4 L941,767.9 L940,767.9 L939,767.9 L938,767.9 L937,767.9 L936,769.7 L935,770.6 L934,771.1 L933,771.4 L932,770.2 L931,771.8 L930,772.4 L929,772.6 L928,773.7 L927,773.8 L926,770.4 L925,772.0 L924,769.8 L923,770.2 L922,771.3 L921,769.8 L920,771.1 L919,771.1 L918,770.2 L917,769.1 L916,767.9 L915,767.9 L914,767.9 L913,767.9 L912,768.2 L911,768.6 L910,768.6 L909,768.4 L908,768.7 L907,768.7 L906,768.2 L905,767.9 L904,768.1 L903,768.8 L902,768.6 L901,768.6 L900,768.5 L899,767.9 L898,767.9 L897,768.1 L896,768.4 L895,768.3 L894,768.2 L893,768.3 L892,768.2 L891,768.6 L890,768.6 L889,768.3 L888,768.3 L887,768.3 L886,769.1 L885,770.3 L884,768.9 L883,768.3 L882,768.1 L881,768.6 L880,768.1 L879,768.0 L878,768.1 L877,767.9 L876,767.9 L875,770.5 L874,771.1 L873,772.4 L872,770.9 L871,767.9 L870,767.9 L869,769.7 L868,770.6 L867,770.3 L866,770.4 L865,772.2 L864,772.0 L863,772.0 L862,772.1 L861,770.5 L860,770.8 L859,769.9 L858,767.9 L857,767.9 L856,769.8 L855,770.8 L854,769.6 L853,769.8 L852,771.1 L851,771.1 L850,771.8 L849,771.0 L848,772.5 L847,772.3 L846,771.2 L845,773.0 L844,772.4 L843,770.0 L842,770.4 L841,771.4 L840,772.0 L839,770.4 L838,769.0 L837,767.9 L836,767.9 L835,767.9 L834,767.9 L833,767.9 L832,767.9 L831,767.9 L830,767.9 L829,767.9 L828,767.9 L827,767.9 L826,767.9 L825,767.9 L824,768.6 L823,770.3 L822,770.1 L821,769.8 L820,769.3 L819,769.9 L818,770.8 L817,771.0 L816,771.5 L815,769.8 L814,770.8 L813,770.3 L812,769.5 L811,770.6 L810,770.2 L809,769.5 L808,769.7 L807,769.7 L806,769.0 L805,767.9 L804,767.9 L803,767.9 L802,767.9 L801,769.3 L800,770.4 L799,771.2 L798,770.0 L797,771.9 L796,771.6 L795,771.1 L794,770.8 L793,770.3 L792,769.2 L791,767.9 L790,767.9 L789,767.9 L788,767.9 L787,767.9 L786,767.9 L785,767.9 L784,767.9 L783,767.9 L782,767.9 L781,767.9 L780,767.9 L779,767.9 L778,767.9 L777,767.9 L776,767.9 L775,768.0 L774,767.9 L773,767.9 L772,769.9 L771,772.0 L770,771.6 L769,771.5 L768,771.7 L767,770.0 L766,767.9 L765,767.9 L764,767.9 L763,768.6 L762,768.7 L761,770.4 L760,769.5 L759,769.2 L758,768.5 L757,767.9 L756,767.9 L755,768.7 L754,768.5 L753,769.2 L752,769.0 L751,769.0 L750,769.8 L749,769.2 L748,768.3 L747,768.5 L746,769.4 L745,770.0 L744,768.3 L743,767.9 L742,767.9 L741,771.2 L740,772.0 L739,772.1 L738,772.5 L737,773.1 L736,772.8 L735,772.4 L734,769.6 L733,767.9 L732,767.9 L731,767.9 L730,767.9 L729,767.9 L728,767.9 L727,767.9 L726,767.9 L725,767.9 L724,767.9 L723,768.6 L722,768.4 L721,768.9 L720,769.2 L719,769.3 L718,769.8 L717,769.4 L716,770.8 L715,770.1 L714,770.3 L713,770.7 L712,769.4 L711,769.8 L710,768.7 L709,769.4 L708,769.9 L707,769.4 L706,769.2 L705,767.9 L704,768.4 L703,769.0 L702,768.6 L701,769.5 L700,769.2 L699,769.1 L698,769.1 L697,769.4 L696,769.6 L695,769.5 L694,769.4 L693,769.4 L692,769.5 L691,769.0 L690,769.2 L689,769.2 L688,769.2 L687,768.1 L686,767.9 L685,767.9 L684,767.9 L683,767.9 L682,767.9 L681,767.9 L680,767.9 L679,767.9 L678,767.9 L677,767.9 L676,767.9 L675,767.9 L674,767.9 L673,767.9 L672,768.4 L671,768.6 L670,768.9 L669,768.3 L668,768.1 L667,768.8 L666,768.4 L665,769.3 L664,769.1 L663,768.8 L662,768.3 L661,767.9 L660,767.9 L659,767.9 L658,767.9 L657,767.9 L656,768.1 L655,768.9 L654,768.5 L653,768.8 L652,768.9 L651,768.4 L650,768.6 L649,768.5 L648,769.3 L647,768.3 L646,768.4 L645,767.9 L644,767.9 L643,768.1 L642,768.2 L641,768.9 L640,769.2 L639,768.7 L638,768.6 L637,768.4 L636,767.9 L635,767.9 L634,768.2 L633,768.1 L632,768.9 L631,768.8 L630,768.7 L629,768.6 L628,767.9 L627,767.9 L626,767.9 L625,767.9 L624,767.9 L623,767.9 L622,767.9 L621,767.9 L620,767.9 L619,767.9 L618,767.9 L617,767.9 L616,767.9 L615,767.9 L614,767.9 L613,767.9 L612,767.9 L611,767.9 L610,767.9 L609,767.9 L608,767.9 L607,767.9 L606,767.9 L605,767.9 L604,767.9 L603,767.9 L602,767.9 L601,767.9 L600,767.9 L599,767.9 L598,767.9 L597,767.9 L596,767.9 L595,767.9 L594,767.9 L593,767.9 L592,767.9 L591,767.9 L590,767.9 L589,767.9 L588,767.9 L587,767.9 L586,767.9 L585,767.9 Z" fill="#8c8c8e"/><path d="M1202,766.6 L1203,766.6 L1204,766.6 L1205,766.6 L1206,766.6 L1207,766.5 L1208,765.9 L1209,766.2 L1210,765.3 L1211,765.4 L1212,765.5 L1213,765.1 L1214,765.5 L1215,765.8 L1216,765.4 L1217,766.3 L1218,765.8 L1219,766.4 L1220,766.6 L1221,766.6 L1222,766.6 L1223,764.4 L1224,764.6 L1225,764.8 L1226,763.2 L1227,763.5 L1228,760.7 L1229,762.9 L1230,761.4 L1231,759.8 L1232,763.7 L1233,763.3 L1234,760.2 L1235,763.3 L1236,763.2 L1237,761.9 L1238,760.7 L1239,761.3 L1240,762.2 L1241,762.1 L1242,762.6 L1243,763.8 L1244,762.8 L1245,763.4 L1246,764.3 L1247,763.0 L1248,764.3 L1249,766.6 L1250,766.6 L1251,766.6 L1252,766.6 L1253,766.6 L1254,766.6 L1255,766.6 L1256,766.6 L1257,766.6 L1258,766.6 L1259,766.6 L1260,756.4 L1261,756.8 L1262,756.0 L1263,759.3 L1264,766.6 L1265,761.2 L1266,763.2 L1267,761.6 L1268,762.2 L1269,762.7 L1270,763.2 L1271,760.8 L1272,763.4 L1273,761.4 L1274,760.0 L1275,762.8 L1276,761.0 L1277,760.7 L1278,760.9 L1279,760.1 L1280,759.0 L1281,761.0 L1282,761.2 L1283,762.2 L1284,763.6 L1285,761.1 L1286,761.5 L1287,762.1 L1288,764.4 L1289,766.6 L1290,766.6 L1291,766.6 L1292,766.6 L1293,764.7 L1294,763.9 L1295,762.4 L1296,762.7 L1297,762.0 L1298,762.7 L1299,761.6 L1300,761.7 L1301,761.2 L1302,761.6 L1303,763.0 L1304,762.1 L1305,762.6 L1306,761.7 L1307,762.4 L1308,763.5 L1309,764.4 L1310,766.6 L1311,766.6 L1312,764.0 L1313,764.3 L1314,764.1 L1315,763.7 L1316,761.8 L1317,760.8 L1318,761.2 L1319,762.4 L1320,760.7 L1321,762.3 L1322,761.3 L1323,760.7 L1324,759.4 L1325,760.5 L1326,760.4 L1327,759.6 L1328,761.4 L1329,760.5 L1330,761.4 L1331,761.7 L1332,763.3 L1333,762.9 L1334,763.5 L1335,764.8 L1336,766.6 L1337,766.6 L1338,766.6 L1339,766.6 L1340,764.7 L1341,764.3 L1342,763.9 L1343,762.2 L1344,762.2 L1345,764.0 L1346,764.8 L1347,765.2 L1348,764.6 L1349,766.6 L1350,766.6 L1351,766.6 L1352,766.6 L1353,766.6 L1354,766.6 L1355,766.6 L1356,766.6 L1357,766.6 L1358,766.6 L1359,766.6 L1360,766.6 L1361,766.6 L1362,766.6 L1363,766.6 L1364,766.6 L1365,762.9 L1366,756.8 L1367,759.3 L1368,760.2 L1369,758.9 L1370,759.2 L1371,760.8 L1372,762.9 L1373,766.6 L1374,766.6 L1375,766.6 L1376,766.6 L1377,766.6 L1378,764.2 L1379,761.8 L1380,763.3 L1381,766.6 L1382,766.6 L1383,766.6 L1384,761.5 L1385,760.0 L1386,757.1 L1387,754.6 L1388,760.2 L1389,756.0 L1390,758.9 L1391,758.3 L1392,761.3 L1393,766.6 L1394,766.6 L1395,766.6 L1396,766.6 L1397,766.6 L1398,766.6 L1399,762.5 L1400,761.8 L1401,760.4 L1402,758.1 L1403,757.6 L1404,761.7 L1405,759.5 L1406,759.3 L1407,758.1 L1408,761.3 L1409,761.4 L1410,762.8 L1411,760.5 L1412,766.6 L1413,766.6 L1414,765.4 L1415,765.0 L1416,763.4 L1417,764.8 L1418,766.6 L1419,766.6 L1420,766.6 L1421,766.6 L1422,766.6 L1423,766.6 L1424,765.5 L1425,765.5 L1426,765.2 L1427,765.0 L1428,764.2 L1429,765.2 L1430,762.9 L1431,765.1 L1432,765.1 L1433,765.5 L1434,765.1 L1435,765.8 L1436,766.6 L1437,766.6 L1438,766.6 L1439,766.6 L1440,766.6 L1441,766.6 L1442,766.6 L1443,766.6 L1444,765.7 L1445,764.8 L1446,765.5 L1447,764.1 L1448,763.8 L1449,763.5 L1450,764.7 L1451,764.0 L1452,764.7 L1453,765.4 L1454,766.6 L1455,766.6 L1456,766.6 L1457,766.6 L1458,766.6 L1459,766.6 L1460,766.6 L1461,766.6 L1462,766.6 L1463,766.6 L1464,766.6 L1465,766.6 L1466,766.6 L1466,767.9 L1465,767.9 L1464,767.9 L1463,767.9 L1462,767.9 L1461,767.9 L1460,767.9 L1459,767.9 L1458,767.9 L1457,767.9 L1456,767.9 L1455,767.9 L1454,767.9 L1453,767.9 L1452,768.1 L1451,768.4 L1450,767.9 L1449,768.2 L1448,768.2 L1447,768.6 L1446,768.5 L1445,768.6 L1444,768.1 L1443,767.9 L1442,767.9 L1441,767.9 L1440,767.9 L1439,767.9 L1438,767.9 L1437,767.9 L1436,767.9 L1435,768.0 L1434,768.1 L1433,768.4 L1432,768.1 L1431,768.2 L1430,768.2 L1429,768.3 L1428,767.9 L1427,767.9 L1426,768.1 L1425,768.0 L1424,767.9 L1423,767.9 L1422,767.9 L1421,767.9 L1420,767.9 L1419,767.9 L1418,767.9 L1417,768.1 L1416,769.0 L1415,768.2 L1414,768.0 L1413,767.9 L1412,767.9 L1411,772.4 L1410,772.9 L1409,772.1 L1408,773.7 L1407,771.8 L1406,771.8 L1405,771.0 L1404,771.8 L1403,772.9 L1402,770.7 L1401,772.4 L1400,770.7 L1399,771.2 L1398,767.9 L1397,767.9 L1396,767.9 L1395,767.9 L1394,767.9 L1393,767.9 L1392,771.6 L1391,771.1 L1390,771.2 L1389,775.8 L1388,772.8 L1387,774.7 L1386,773.3 L1385,770.9 L1384,769.8 L1383,767.9 L1382,767.9 L1381,767.9 L1380,768.5 L1379,769.2 L1378,768.0 L1377,767.9 L1376,767.9 L1375,767.9 L1374,767.9 L1373,767.9 L1372,769.5 L1371,769.9 L1370,771.3 L1369,770.3 L1368,770.7 L1367,770.2 L1366,770.6 L1365,770.0 L1364,767.9 L1363,767.9 L1362,767.9 L1361,767.9 L1360,767.9 L1359,767.9 L1358,767.9 L1357,767.9 L1356,767.9 L1355,767.9 L1354,767.9 L1353,767.9 L1352,767.9 L1351,767.9 L1350,767.9 L1349,767.9 L1348,768.3 L1347,768.1 L1346,768.2 L1345,768.5 L1344,768.7 L1343,768.7 L1342,768.4 L1341,768.5 L1340,767.9 L1339,767.9 L1338,767.9 L1337,767.9 L1336,767.9 L1335,768.1 L1334,768.2 L1333,768.5 L1332,768.5 L1331,768.8 L1330,769.1 L1329,768.9 L1328,769.2 L1327,768.6 L1326,768.5 L1325,769.1 L1324,769.7 L1323,769.4 L1322,769.6 L1321,768.7 L1320,768.6 L1319,768.4 L1318,768.7 L1317,768.3 L1316,768.2 L1315,768.3 L1314,768.2 L1313,768.5 L1312,767.9 L1311,767.9 L1310,767.9 L1309,768.3 L1308,768.9 L1307,768.9 L1306,769.7 L1305,769.7 L1304,770.0 L1303,769.2 L1302,769.1 L1301,770.3 L1300,769.9 L1299,770.5 L1298,770.0 L1297,770.0 L1296,769.9 L1295,770.9 L1294,769.1 L1293,768.7 L1292,767.9 L1291,767.9 L1290,767.9 L1289,767.9 L1288,769.2 L1287,769.2 L1286,768.9 L1285,769.4 L1284,770.2 L1283,770.5 L1282,770.6 L1281,770.8 L1280,771.2 L1279,769.8 L1278,770.4 L1277,771.0 L1276,772.7 L1275,770.3 L1274,769.6 L1273,770.3 L1272,769.9 L1271,769.7 L1270,770.6 L1269,769.8 L1268,769.4 L1267,769.5 L1266,770.0 L1265,770.1 L1264,767.9 L1263,775.7 L1262,776.5 L1261,776.6 L1260,774.2 L1259,767.9 L1258,767.9 L1257,767.9 L1256,767.9 L1255,767.9 L1254,767.9 L1253,767.9 L1252,767.9 L1251,767.9 L1250,767.9 L1249,767.9 L1248,768.8 L1247,769.2 L1246,769.8 L1245,769.5 L1244,769.3 L1243,768.5 L1242,768.5 L1241,769.8 L1240,769.3 L1239,769.5 L1238,771.8 L1237,770.4 L1236,770.1 L1235,769.3 L1234,771.1 L1233,769.1 L1232,769.6 L1231,770.1 L1230,769.3 L1229,769.0 L1228,769.2 L1227,769.1 L1226,769.8 L1225,769.5 L1224,769.2 L1223,768.5 L1222,767.9 L1221,767.9 L1220,767.9 L1219,767.9 L1218,768.1 L1217,768.0 L1216,767.9 L1215,767.9 L1214,768.0 L1213,768.2 L1212,768.1 L1211,767.9 L1210,768.0 L1209,768.0 L1208,767.9 L1207,767.9 L1206,767.9 L1205,767.9 L1204,767.9 L1203,767.9 L1202,767.9 Z" fill="#d9d6fb"/><path d="M1466,766.6 L1467,766.6 L1468,766.6 L1469,766.6 L1470,766.6 L1471,766.6 L1472,766.6 L1473,766.6 L1474,766.6 L1475,766.6 L1476,766.6 L1477,766.6 L1478,766.6 L1479,766.6 L1480,766.6 L1481,766.6 L1482,766.6 L1483,766.6 L1484,766.6 L1485,766.6 L1486,766.6 L1487,766.6 L1488,761.3 L1489,759.7 L1490,754.0 L1491,756.6 L1492,757.7 L1493,754.9 L1494,756.0 L1495,755.3 L1496,756.6 L1497,760.4 L1498,760.8 L1499,762.6 L1500,763.9 L1501,763.4 L1502,761.2 L1503,760.1 L1504,760.3 L1505,760.4 L1506,759.9 L1507,760.6 L1508,760.8 L1509,761.8 L1510,763.1 L1511,766.6 L1512,766.6 L1513,766.6 L1514,766.6 L1515,766.6 L1516,760.5 L1517,762.0 L1518,763.0 L1519,766.6 L1520,766.6 L1521,766.6 L1522,766.6 L1523,766.6 L1524,764.6 L1525,762.8 L1526,761.8 L1527,762.3 L1528,761.5 L1529,759.4 L1530,761.9 L1531,760.4 L1532,761.9 L1533,758.1 L1534,760.0 L1535,761.7 L1536,763.2 L1537,762.2 L1538,762.8 L1539,763.2 L1540,766.6 L1541,765.0 L1542,763.2 L1543,763.6 L1544,764.8 L1545,764.0 L1546,764.9 L1547,763.5 L1548,763.7 L1549,763.3 L1550,764.5 L1551,763.5 L1552,764.7 L1553,765.4 L1554,766.6 L1555,766.6 L1556,766.6 L1557,766.6 L1558,766.6 L1559,766.6 L1560,766.6 L1561,766.6 L1562,766.6 L1563,766.6 L1564,766.6 L1565,766.6 L1566,766.6 L1566,767.9 L1565,767.9 L1564,767.9 L1563,767.9 L1562,767.9 L1561,767.9 L1560,767.9 L1559,767.9 L1558,767.9 L1557,767.9 L1556,767.9 L1555,767.9 L1554,767.9 L1553,768.3 L1552,768.6 L1551,768.8 L1550,768.5 L1549,769.2 L1548,769.2 L1547,769.4 L1546,768.9 L1545,769.1 L1544,768.6 L1543,769.5 L1542,768.8 L1541,768.2 L1540,767.9 L1539,769.2 L1538,769.8 L1537,769.6 L1536,769.4 L1535,770.1 L1534,770.3 L1533,770.0 L1532,769.8 L1531,769.9 L1530,770.2 L1529,769.7 L1528,769.0 L1527,769.5 L1526,770.1 L1525,770.0 L1524,769.7 L1523,767.9 L1522,767.9 L1521,767.9 L1520,767.9 L1519,767.9 L1518,770.3 L1517,770.2 L1516,771.7 L1515,767.9 L1514,767.9 L1513,767.9 L1512,767.9 L1511,767.9 L1510,770.4 L1509,771.2 L1508,771.3 L1507,771.8 L1506,773.2 L1505,772.0 L1504,772.3 L1503,769.7 L1502,770.0 L1501,770.9 L1500,770.0 L1499,769.8 L1498,772.0 L1497,770.8 L1496,772.5 L1495,773.4 L1494,772.0 L1493,774.3 L1492,772.1 L1491,772.3 L1490,772.6 L1489,772.2 L1488,771.4 L1487,767.9 L1486,767.9 L1485,767.9 L1484,767.9 L1483,767.9 L1482,767.9 L1481,767.9 L1480,767.9 L1479,767.9 L1478,767.9 L1477,767.9 L1476,767.9 L1475,767.9 L1474,767.9 L1473,767.9 L1472,767.9 L1471,767.9 L1470,767.9 L1469,767.9 L1468,767.9 L1467,767.9 L1466,767.9 Z" fill="#8c8c8e"/><rect x="904.4" y="418" width="1.2" height="133.5" fill="#6a6a70" opacity="0.8"/><rect x="1201.4" y="418" width="1.2" height="133.5" fill="#6a6a70" opacity="0.8"/><rect x="1465.4" y="418" width="1.2" height="133.5" fill="#6a6a70" opacity="0.8"/><rect x="904.4" y="555" width="1.2" height="133.5" fill="#6a6a70" opacity="0.8"/><rect x="1201.4" y="691.6" width="1.2" height="133.39999999999998" fill="#6a6a70" opacity="0.8"/><rect x="1465.4" y="691.6" width="1.2" height="133.39999999999998" fill="#6a6a70" opacity="0.8"/><rect x="583.8" y="300" width="1.6" height="525.6" fill="#8e94dc"/><rect x="583.8" y="824.4" width="982.2" height="1.3" fill="#98aef0"/><rect x="583.5" y="280.6" width="987.5" height="21" rx="4" fill="#4b5f9a"/><rect x="584.8" y="283.6" width="981.2" height="17" fill="#cdd9fb"/><path d="M584.8 300.6 V287.6 A4 4 0 0 1 588.8 283.6 H631.3 V300.6 Z" fill="#1e3a8c"/><rect x="631.3" y="283.6" width="47.5" height="17" fill="#b8c5ea"/></svg><svg style="position:absolute;left:601px;top:286px;" width="12" height="10" viewBox="0 0 12 10"><path d="M2 3 L6 7 L10 3" stroke="#e8ecff" stroke-width="1.8" fill="none" stroke-linecap="round" stroke-linejoin="round"/></svg><div style="position:absolute;left:644.5px;top:284px;white-space:nowrap;font-family:'Liberation Sans',sans-serif;font-size:12px;color:#2a3c78;font-weight:bold;">D</div><svg style="position:absolute;left:657px;top:285px;" width="9" height="13" viewBox="0 0 9 13"><path d="M1.5 4.5 L4.5 1.5 L7.5 4.5 M1.5 8.5 L4.5 11.5 L7.5 8.5" stroke="#8a98c8" stroke-width="1.2" fill="none"/></svg><svg style="position:absolute;left:685px;top:285px;" width="12" height="12" viewBox="0 0 12 12"><path d="M6 1 L11 3.6 L6 6.2 L1 3.6 Z" fill="#1e3470"/><path d="M1 6 L6 8.6 L11 6" stroke="#1e3470" stroke-width="1.4" fill="none"/><path d="M1 8.4 L6 11 L11 8.4" stroke="#1e3470" stroke-width="1.4" fill="none"/></svg><div style="position:absolute;left:701px;top:284.5px;white-space:nowrap;font-family:'Liberation Sans',sans-serif;font-size:12.3px;color:#1e3470;letter-spacing:0.2px;-webkit-text-stroke:0.35px currentColor;">Vocal: 2 - Comp D</div><div style="position:absolute;left:587.8px;top:418.9px;width:67.7px;height:17px;background:#2f52b8;border-radius:2px;"></div><div style="position:absolute;left:592.5px;top:421.2px;white-space:nowrap;font-family:'Liberation Sans',sans-serif;font-size:11.8px;color:#f2f4ff;letter-spacing:0.45px;-webkit-text-stroke:0.35px currentColor;">3 - Take 3</div><div style="position:absolute;left:587.8px;top:555.6px;width:66.5px;height:16.8px;background:#3a33a8;border-radius:2px;"></div><div style="position:absolute;left:592.5px;top:557.2px;white-space:nowrap;font-family:'Liberation Sans',sans-serif;font-size:11.8px;color:#f2f4ff;letter-spacing:0.45px;-webkit-text-stroke:0.35px currentColor;">2 - Take 2</div><div style="position:absolute;left:587.8px;top:692.2px;width:62.8px;height:17.6px;background:#3d2fa8;border-radius:2px;"></div><div style="position:absolute;left:592.5px;top:694px;white-space:nowrap;font-family:'Liberation Sans',sans-serif;font-size:11.8px;color:#f2f4ff;letter-spacing:0.45px;-webkit-text-stroke:0.35px currentColor;">1 - Take 1</div><svg style="position:absolute;left:0px;top:0px;pointer-events:none;" width="1676" height="1100" viewBox="0 0 1676 1100"><rect x="584" y="828.3" width="988" height="133.1" rx="5" fill="#8c2fd1"/><path d="M584,903.2 L585,903.2 L586,903.2 L587,903.2 L588,903.2 L589,903.2 L590,903.2 L591,903.2 L592,903.2 L593,903.2 L594,903.2 L595,903.2 L596,903.2 L597,903.2 L598,903.2 L599,903.2 L600,903.2 L601,903.2 L602,903.2 L603,903.2 L604,903.2 L605,903.2 L606,903.2 L607,903.2 L608,903.2 L609,903.2 L610,903.2 L611,903.2 L612,903.2 L613,903.2 L614,903.2 L615,903.2 L616,903.2 L617,903.2 L618,903.2 L619,903.2 L620,903.2 L621,903.2 L622,903.2 L623,903.2 L624,903.2 L625,903.2 L626,903.2 L627,903.2 L628,903.2 L629,903.2 L630,903.2 L631,903.2 L632,903.2 L633,903.2 L634,903.2 L635,903.2 L636,903.2 L637,903.2 L638,903.2 L639,903.2 L640,903.2 L641,903.2 L642,903.2 L643,903.2 L644,903.2 L645,903.2 L646,903.2 L647,903.2 L648,903.2 L649,903.2 L650,903.2 L651,903.2 L652,903.2 L653,903.2 L654,903.2 L655,903.2 L656,903.2 L657,903.2 L658,903.2 L659,903.2 L660,903.2 L661,903.2 L662,903.2 L663,903.2 L664,903.2 L665,903.2 L666,903.2 L667,903.2 L668,903.2 L669,903.2 L670,903.2 L671,903.2 L672,903.2 L673,903.2 L674,903.2 L675,903.2 L676,903.2 L677,903.2 L678,903.2 L679,903.2 L680,903.2 L681,903.2 L682,903.2 L683,903.2 L684,903.2 L685,903.2 L686,903.2 L687,903.2 L688,903.2 L689,903.2 L690,903.2 L691,903.2 L692,903.2 L693,903.2 L694,903.2 L695,903.2 L696,903.2 L697,903.2 L698,903.2 L699,903.2 L700,903.2 L701,903.2 L702,903.2 L703,903.2 L704,903.2 L705,903.2 L706,903.2 L707,903.2 L708,903.2 L709,903.2 L710,903.2 L711,903.2 L712,903.2 L713,903.2 L714,903.2 L715,903.2 L716,903.2 L717,903.2 L718,903.2 L719,903.2 L720,903.2 L721,903.2 L722,903.2 L723,903.2 L724,903.2 L725,903.2 L726,903.2 L727,903.2 L728,903.2 L729,903.2 L730,903.2 L731,903.2 L732,903.2 L733,903.2 L734,903.2 L735,903.2 L736,903.2 L737,903.2 L738,903.2 L739,903.2 L740,903.2 L741,903.2 L742,903.2 L743,903.2 L744,903.2 L745,903.2 L746,903.2 L747,903.2 L748,903.2 L749,903.2 L750,903.2 L751,903.2 L752,903.2 L753,903.2 L754,903.2 L755,903.2 L756,903.2 L757,903.2 L758,903.2 L759,903.2 L760,903.2 L761,903.2 L762,903.2 L763,903.2 L764,903.2 L765,903.2 L766,903.2 L767,903.2 L768,903.2 L769,903.2 L770,903.2 L771,903.2 L772,903.2 L773,903.2 L774,903.2 L775,903.2 L776,903.2 L777,903.2 L778,903.2 L779,903.2 L780,903.2 L781,903.2 L782,903.2 L783,903.2 L784,903.2 L785,903.2 L786,903.2 L787,903.2 L788,903.2 L789,903.2 L790,903.2 L791,903.2 L792,903.2 L793,903.2 L794,903.2 L795,903.2 L796,903.2 L797,903.2 L798,903.2 L799,903.2 L800,903.2 L801,903.2 L802,903.2 L803,903.2 L804,903.2 L805,903.2 L806,903.2 L807,903.2 L808,903.2 L809,903.2 L810,903.2 L811,903.2 L812,903.2 L813,903.2 L814,903.2 L815,903.2 L816,903.2 L817,903.2 L818,903.2 L819,903.2 L820,903.2 L821,903.2 L822,903.2 L823,903.2 L824,903.2 L825,903.2 L826,903.2 L827,903.2 L828,903.2 L829,903.2 L830,903.2 L831,903.2 L832,903.2 L833,903.2 L834,903.2 L835,903.2 L836,903.2 L837,903.2 L838,903.2 L839,903.2 L840,903.2 L841,903.2 L842,903.2 L843,903.2 L844,903.2 L845,903.2 L846,903.2 L847,903.2 L848,903.2 L849,903.2 L850,903.2 L851,903.2 L852,903.2 L853,903.2 L854,903.2 L855,903.2 L856,903.2 L857,903.2 L858,903.2 L859,903.2 L860,903.2 L861,903.2 L862,903.2 L863,903.2 L864,903.2 L865,903.2 L866,903.2 L867,903.2 L868,903.2 L869,903.2 L870,903.2 L871,903.2 L872,903.2 L873,903.2 L874,903.2 L875,903.2 L876,903.2 L877,903.2 L878,903.2 L879,903.2 L880,903.2 L881,903.2 L882,903.2 L883,903.2 L884,903.2 L885,903.2 L886,903.2 L887,903.2 L888,903.2 L889,903.2 L890,903.2 L891,903.2 L892,903.2 L893,903.2 L894,903.2 L895,903.2 L896,903.2 L897,903.2 L898,903.2 L899,903.2 L900,903.2 L901,903.2 L902,903.2 L903,903.2 L904,903.2 L905,903.2 L906,903.2 L907,903.2 L908,903.2 L909,903.2 L910,903.2 L911,903.2 L912,903.2 L913,903.2 L914,903.2 L915,903.2 L916,903.2 L917,903.2 L918,903.2 L919,903.2 L920,903.2 L921,903.2 L922,903.2 L923,903.2 L924,903.2 L925,903.2 L926,903.2 L927,903.2 L928,903.2 L929,903.2 L930,903.2 L931,903.2 L932,903.2 L933,903.2 L934,903.2 L935,903.2 L936,903.2 L937,903.2 L938,903.2 L939,903.2 L940,903.2 L941,903.2 L942,903.2 L943,903.2 L944,903.2 L945,903.2 L946,903.2 L947,903.2 L948,903.2 L949,903.2 L950,903.2 L951,903.2 L952,903.2 L953,903.2 L954,903.2 L955,903.2 L956,903.2 L957,903.2 L958,903.2 L959,903.2 L960,903.2 L961,903.2 L962,903.2 L963,903.2 L964,903.2 L965,903.2 L966,903.2 L967,903.2 L968,903.2 L969,903.2 L970,903.2 L971,903.2 L972,903.2 L973,903.2 L974,903.2 L975,903.2 L976,903.2 L977,903.2 L978,903.2 L979,903.2 L980,903.2 L981,903.2 L982,903.2 L983,903.2 L984,903.2 L985,903.2 L986,903.2 L987,903.2 L988,903.2 L989,903.2 L990,903.2 L991,903.2 L992,903.2 L993,903.2 L994,903.2 L995,903.2 L996,903.2 L997,903.2 L998,903.2 L999,903.2 L1000,903.2 L1001,903.2 L1002,903.2 L1003,903.2 L1004,903.2 L1005,903.2 L1006,903.2 L1007,903.2 L1008,903.2 L1009,903.2 L1010,903.2 L1011,903.2 L1012,903.2 L1013,903.2 L1014,903.2 L1015,903.2 L1016,903.2 L1017,903.2 L1018,903.2 L1019,903.2 L1020,903.2 L1021,903.2 L1022,903.2 L1023,903.2 L1024,903.2 L1025,903.2 L1026,903.2 L1027,903.2 L1028,903.2 L1029,903.2 L1030,903.2 L1031,903.2 L1032,903.2 L1033,903.2 L1034,903.2 L1035,903.2 L1036,903.2 L1037,903.2 L1038,903.2 L1039,903.2 L1040,903.2 L1041,903.2 L1042,903.2 L1043,903.2 L1044,903.2 L1045,903.2 L1046,903.2 L1047,903.2 L1048,903.2 L1049,903.2 L1050,903.2 L1051,903.2 L1052,903.2 L1053,903.2 L1054,903.2 L1055,901.6 L1056,899.7 L1057,899.8 L1058,900.1 L1059,900.1 L1060,900.2 L1061,900.7 L1062,900.4 L1063,901.3 L1064,901.0 L1065,900.9 L1066,901.5 L1067,901.1 L1068,900.8 L1069,900.9 L1070,901.4 L1071,900.6 L1072,901.0 L1073,901.4 L1074,901.1 L1075,901.2 L1076,901.3 L1077,901.5 L1078,900.9 L1079,901.3 L1080,901.3 L1081,901.3 L1082,901.1 L1083,902.1 L1084,901.6 L1085,901.5 L1086,902.0 L1087,901.9 L1088,902.3 L1089,902.2 L1090,902.0 L1091,902.3 L1092,902.2 L1093,901.7 L1094,902.0 L1095,902.1 L1096,901.7 L1097,902.1 L1098,901.8 L1099,902.1 L1100,902.0 L1101,902.6 L1102,902.2 L1103,902.1 L1104,902.7 L1105,902.1 L1106,902.6 L1107,902.4 L1108,901.2 L1109,900.8 L1110,900.7 L1111,901.5 L1112,900.4 L1113,901.2 L1114,901.1 L1115,901.1 L1116,901.5 L1117,901.6 L1118,901.3 L1119,901.4 L1120,901.8 L1121,901.4 L1122,901.9 L1123,902.2 L1124,902.0 L1125,902.3 L1126,902.2 L1127,901.7 L1128,902.1 L1129,901.7 L1130,901.9 L1131,902.5 L1132,901.8 L1133,901.9 L1134,902.6 L1135,902.0 L1136,902.4 L1137,902.4 L1138,902.1 L1139,902.6 L1140,902.5 L1141,902.3 L1142,902.5 L1143,902.6 L1144,902.4 L1145,902.5 L1146,902.7 L1147,903.0 L1148,902.7 L1149,902.8 L1150,903.0 L1151,903.1 L1152,902.9 L1153,903.1 L1154,903.0 L1155,902.9 L1156,903.0 L1157,903.1 L1158,903.0 L1159,902.9 L1160,900.1 L1161,900.6 L1162,900.0 L1163,900.2 L1164,900.6 L1165,901.3 L1166,901.5 L1167,900.6 L1168,900.8 L1169,901.1 L1170,901.5 L1171,901.6 L1172,901.2 L1173,901.4 L1174,901.5 L1175,901.5 L1176,901.4 L1177,902.0 L1178,902.0 L1179,901.4 L1180,901.5 L1181,901.6 L1182,902.4 L1183,902.4 L1184,902.3 L1185,902.2 L1186,902.1 L1187,902.5 L1188,902.2 L1189,902.6 L1190,902.7 L1191,902.3 L1192,902.4 L1193,902.4 L1194,902.6 L1195,902.6 L1196,902.8 L1197,902.7 L1198,902.5 L1199,902.5 L1200,903.0 L1201,903.0 L1202,902.6 L1203,902.8 L1204,902.7 L1205,903.0 L1206,902.9 L1207,903.0 L1208,902.8 L1209,903.0 L1210,902.9 L1211,902.8 L1212,903.1 L1213,902.9 L1214,900.4 L1215,900.2 L1216,901.0 L1217,901.1 L1218,901.6 L1219,900.7 L1220,901.7 L1221,901.8 L1222,901.3 L1223,901.5 L1224,901.3 L1225,901.8 L1226,901.4 L1227,902.1 L1228,902.1 L1229,901.7 L1230,902.3 L1231,902.1 L1232,901.8 L1233,901.9 L1234,902.3 L1235,902.5 L1236,902.3 L1237,902.1 L1238,902.4 L1239,902.6 L1240,902.3 L1241,902.4 L1242,902.3 L1243,902.3 L1244,902.4 L1245,902.7 L1246,902.5 L1247,902.8 L1248,902.8 L1249,902.8 L1250,902.6 L1251,902.7 L1252,903.0 L1253,903.0 L1254,903.0 L1255,903.0 L1256,903.1 L1257,903.1 L1258,902.4 L1259,900.8 L1260,900.6 L1261,901.0 L1262,900.7 L1263,901.1 L1264,901.6 L1265,901.0 L1266,900.9 L1267,901.6 L1268,902.0 L1269,901.5 L1270,901.5 L1271,901.6 L1272,901.2 L1273,901.6 L1274,901.5 L1275,902.2 L1276,901.8 L1277,901.7 L1278,902.3 L1279,902.4 L1280,901.9 L1281,901.8 L1282,902.5 L1283,902.1 L1284,902.5 L1285,902.1 L1286,902.2 L1287,902.5 L1288,902.6 L1289,902.2 L1290,902.4 L1291,902.3 L1292,902.6 L1293,902.6 L1294,902.3 L1295,902.5 L1296,902.6 L1297,902.6 L1298,902.6 L1299,902.6 L1300,902.5 L1301,902.8 L1302,902.6 L1303,902.7 L1304,902.7 L1305,902.7 L1306,902.8 L1307,902.8 L1308,902.8 L1309,902.9 L1310,903.0 L1311,902.9 L1312,902.9 L1313,903.1 L1314,903.1 L1315,903.2 L1316,903.0 L1317,901.8 L1318,900.7 L1319,901.1 L1320,901.1 L1321,900.9 L1322,901.2 L1323,900.4 L1324,901.6 L1325,901.3 L1326,901.6 L1327,901.1 L1328,901.0 L1329,901.7 L1330,901.9 L1331,901.6 L1332,901.5 L1333,901.2 L1334,902.1 L1335,902.1 L1336,902.1 L1337,902.1 L1338,902.1 L1339,901.8 L1340,901.9 L1341,902.3 L1342,902.4 L1343,902.3 L1344,902.5 L1345,902.1 L1346,902.4 L1347,902.3 L1348,902.2 L1349,902.4 L1350,902.6 L1351,902.2 L1352,902.3 L1353,902.7 L1354,902.6 L1355,902.4 L1356,902.7 L1357,902.9 L1358,903.0 L1359,902.5 L1360,902.6 L1361,902.9 L1362,902.8 L1363,902.9 L1364,903.0 L1365,902.7 L1366,902.9 L1367,903.1 L1368,903.2 L1369,903.1 L1370,902.9 L1371,900.1 L1372,900.3 L1373,900.6 L1374,901.3 L1375,901.3 L1376,901.2 L1377,901.3 L1378,900.7 L1379,901.2 L1380,901.1 L1381,900.8 L1382,901.7 L1383,901.4 L1384,901.9 L1385,901.3 L1386,902.2 L1387,901.4 L1388,901.5 L1389,901.5 L1390,902.3 L1391,902.2 L1392,901.8 L1393,902.4 L1394,902.1 L1395,902.2 L1396,901.9 L1397,902.2 L1398,902.0 L1399,902.5 L1400,902.2 L1401,902.5 L1402,902.2 L1403,902.8 L1404,902.3 L1405,902.8 L1406,902.6 L1407,902.6 L1408,902.9 L1409,902.5 L1410,902.9 L1411,902.9 L1412,903.0 L1413,902.9 L1414,902.9 L1415,902.8 L1416,903.0 L1417,902.9 L1418,903.2 L1419,902.9 L1420,900.8 L1421,900.2 L1422,900.5 L1423,900.8 L1424,901.7 L1425,901.4 L1426,901.1 L1427,901.7 L1428,901.4 L1429,901.6 L1430,902.1 L1431,901.2 L1432,901.5 L1433,902.1 L1434,901.8 L1435,902.2 L1436,902.2 L1437,902.1 L1438,902.3 L1439,902.4 L1440,902.4 L1441,902.2 L1442,902.6 L1443,902.7 L1444,902.4 L1445,902.7 L1446,902.4 L1447,902.6 L1448,902.6 L1449,902.8 L1450,902.6 L1451,903.0 L1452,903.0 L1453,903.1 L1454,902.9 L1455,902.9 L1456,903.0 L1457,900.5 L1458,900.1 L1459,900.6 L1460,901.5 L1461,901.4 L1462,901.7 L1463,901.8 L1464,901.6 L1465,902.1 L1466,901.4 L1467,902.0 L1468,902.0 L1469,902.0 L1470,902.0 L1471,902.1 L1472,902.5 L1473,902.6 L1474,902.6 L1475,902.9 L1476,902.8 L1477,900.4 L1478,900.2 L1479,900.7 L1480,901.0 L1481,901.2 L1482,902.0 L1483,901.8 L1484,901.9 L1485,901.7 L1486,902.3 L1487,902.2 L1488,902.2 L1489,902.1 L1490,902.2 L1491,902.4 L1492,902.8 L1493,902.5 L1494,902.5 L1495,902.8 L1496,902.9 L1497,902.9 L1498,901.3 L1499,900.8 L1500,900.7 L1501,901.4 L1502,901.4 L1503,901.4 L1504,902.2 L1505,901.7 L1506,902.1 L1507,902.5 L1508,902.7 L1509,902.7 L1510,902.5 L1511,902.6 L1512,902.9 L1513,902.6 L1514,903.0 L1515,902.9 L1516,901.1 L1517,900.2 L1518,901.5 L1519,900.8 L1520,901.5 L1521,901.7 L1522,901.8 L1523,902.3 L1524,901.9 L1525,902.0 L1526,902.3 L1527,902.6 L1528,902.9 L1529,899.7 L1530,900.8 L1531,900.2 L1532,901.4 L1533,901.2 L1534,901.1 L1535,902.0 L1536,901.8 L1537,902.4 L1538,902.6 L1539,902.6 L1540,902.2 L1541,899.5 L1542,900.1 L1543,900.7 L1544,900.3 L1545,900.3 L1546,900.9 L1547,900.8 L1548,900.6 L1549,901.7 L1550,901.5 L1551,901.3 L1552,901.8 L1553,901.6 L1554,901.5 L1555,901.9 L1556,901.7 L1557,902.0 L1558,901.8 L1559,902.1 L1560,901.9 L1561,902.4 L1562,902.0 L1563,902.5 L1564,901.9 L1565,902.2 L1566,902.4 L1566,905.3 L1565,905.5 L1564,905.7 L1563,905.3 L1562,905.7 L1561,905.3 L1560,905.8 L1559,905.6 L1558,905.8 L1557,905.6 L1556,905.9 L1555,905.7 L1554,906.1 L1553,906.0 L1552,905.8 L1551,906.2 L1550,906.0 L1549,905.9 L1548,906.8 L1547,906.7 L1546,906.5 L1545,907.0 L1544,907.0 L1543,906.7 L1542,907.2 L1541,907.7 L1540,905.5 L1539,905.2 L1538,905.2 L1537,905.3 L1536,905.8 L1535,905.6 L1534,906.3 L1533,906.3 L1532,906.2 L1531,907.1 L1530,906.6 L1529,907.5 L1528,904.9 L1527,905.2 L1526,905.4 L1525,905.6 L1524,905.7 L1523,905.4 L1522,905.8 L1521,905.9 L1520,906.1 L1519,906.6 L1518,906.0 L1517,907.1 L1516,906.4 L1515,904.9 L1514,904.8 L1513,905.1 L1512,904.9 L1511,905.1 L1510,905.2 L1509,905.1 L1508,905.1 L1507,905.2 L1506,905.6 L1505,905.9 L1504,905.5 L1503,906.1 L1502,906.1 L1501,906.1 L1500,906.7 L1499,906.6 L1498,906.1 L1497,904.9 L1496,904.9 L1495,905.0 L1494,905.2 L1493,905.2 L1492,905.0 L1491,905.3 L1490,905.5 L1489,905.5 L1488,905.5 L1487,905.5 L1486,905.4 L1485,905.8 L1484,905.7 L1483,905.8 L1482,905.6 L1481,906.2 L1480,906.4 L1479,906.7 L1478,907.0 L1477,906.9 L1476,905.0 L1475,904.9 L1474,905.1 L1473,905.1 L1472,905.2 L1471,905.6 L1470,905.6 L1469,905.6 L1468,905.6 L1467,905.7 L1466,906.1 L1465,905.6 L1464,905.9 L1463,905.8 L1462,905.9 L1461,906.1 L1460,906.1 L1459,906.8 L1458,907.2 L1457,906.8 L1456,904.9 L1455,904.9 L1454,904.9 L1453,904.8 L1452,904.8 L1451,904.8 L1450,905.1 L1449,904.9 L1448,905.2 L1447,905.1 L1446,905.3 L1445,905.1 L1444,905.3 L1443,905.1 L1442,905.2 L1441,905.4 L1440,905.3 L1439,905.3 L1438,905.3 L1437,905.5 L1436,905.5 L1435,905.5 L1434,905.8 L1433,905.5 L1432,906.0 L1431,906.2 L1430,905.5 L1429,905.9 L1428,906.1 L1427,905.9 L1426,906.4 L1425,906.1 L1424,905.9 L1423,906.6 L1422,906.9 L1421,907.1 L1420,906.6 L1419,904.9 L1418,904.8 L1417,904.9 L1416,904.8 L1415,905.0 L1414,904.9 L1413,904.9 L1412,904.8 L1411,904.9 L1410,904.9 L1409,905.2 L1408,904.9 L1407,905.1 L1406,905.1 L1405,905.0 L1404,905.3 L1403,905.0 L1402,905.5 L1401,905.2 L1400,905.5 L1399,905.2 L1398,905.6 L1397,905.5 L1396,905.7 L1395,905.5 L1394,905.5 L1393,905.3 L1392,905.8 L1391,905.5 L1390,905.4 L1389,906.0 L1388,906.1 L1387,906.1 L1386,905.5 L1385,906.2 L1384,905.7 L1383,906.1 L1382,905.9 L1381,906.6 L1380,906.4 L1379,906.3 L1378,906.7 L1377,906.2 L1376,906.3 L1375,906.2 L1374,906.2 L1373,906.8 L1372,907.0 L1371,907.2 L1370,904.9 L1369,904.8 L1368,904.8 L1367,904.8 L1366,904.9 L1365,905.0 L1364,904.8 L1363,904.9 L1362,904.9 L1361,904.9 L1360,905.1 L1359,905.2 L1358,904.8 L1357,904.9 L1356,905.1 L1355,905.3 L1354,905.2 L1353,905.1 L1352,905.4 L1351,905.4 L1350,905.1 L1349,905.3 L1348,905.5 L1347,905.4 L1346,905.3 L1345,905.6 L1344,905.3 L1343,905.4 L1342,905.3 L1341,905.4 L1340,905.7 L1339,905.8 L1338,905.5 L1337,905.5 L1336,905.5 L1335,905.5 L1334,905.5 L1333,906.3 L1332,906.0 L1331,906.0 L1330,905.7 L1329,905.8 L1328,906.4 L1327,906.4 L1326,905.9 L1325,906.2 L1324,906.0 L1323,907.0 L1322,906.3 L1321,906.5 L1320,906.3 L1319,906.3 L1318,906.7 L1317,905.8 L1316,904.8 L1315,904.8 L1314,904.8 L1313,904.8 L1312,904.9 L1311,904.9 L1310,904.8 L1309,904.9 L1308,905.0 L1307,905.0 L1306,905.0 L1305,905.0 L1304,905.1 L1303,905.0 L1302,905.1 L1301,904.9 L1300,905.2 L1299,905.1 L1298,905.2 L1297,905.1 L1296,905.1 L1295,905.2 L1294,905.4 L1293,905.1 L1292,905.1 L1291,905.4 L1290,905.3 L1289,905.4 L1288,905.2 L1287,905.2 L1286,905.5 L1285,905.6 L1284,905.2 L1283,905.6 L1282,905.2 L1281,905.8 L1280,905.7 L1279,905.3 L1278,905.4 L1277,905.9 L1276,905.7 L1275,905.4 L1274,906.0 L1273,906.0 L1272,906.2 L1271,906.0 L1270,906.0 L1269,906.0 L1268,905.6 L1267,905.9 L1266,906.5 L1265,906.4 L1264,905.9 L1263,906.4 L1262,906.7 L1261,906.4 L1260,906.8 L1259,906.6 L1258,905.3 L1257,904.8 L1256,904.8 L1255,904.8 L1254,904.8 L1253,904.8 L1252,904.8 L1251,905.1 L1250,905.1 L1249,904.9 L1248,904.9 L1247,905.0 L1246,905.2 L1245,905.1 L1244,905.3 L1243,905.4 L1242,905.4 L1241,905.3 L1240,905.4 L1239,905.1 L1238,905.3 L1237,905.5 L1236,905.3 L1235,905.2 L1234,905.4 L1233,905.7 L1232,905.8 L1231,905.5 L1230,905.4 L1229,905.9 L1228,905.6 L1227,905.5 L1226,906.1 L1225,905.8 L1224,906.2 L1223,906.1 L1222,906.2 L1221,905.8 L1220,905.8 L1219,906.7 L1218,906.0 L1217,906.3 L1216,906.4 L1215,907.1 L1214,907.0 L1213,904.9 L1212,904.8 L1211,905.0 L1210,904.9 L1209,904.8 L1208,905.0 L1207,904.8 L1206,904.9 L1205,904.8 L1204,905.0 L1203,905.0 L1202,905.1 L1201,904.8 L1200,904.9 L1199,905.2 L1198,905.2 L1197,905.0 L1196,905.0 L1195,905.2 L1194,905.1 L1193,905.3 L1192,905.3 L1191,905.4 L1190,905.1 L1189,905.1 L1188,905.4 L1187,905.2 L1186,905.6 L1185,905.5 L1184,905.4 L1183,905.3 L1182,905.3 L1181,905.9 L1180,906.0 L1179,906.1 L1178,905.6 L1177,905.6 L1176,906.1 L1175,906.0 L1174,906.1 L1173,906.1 L1172,906.3 L1171,905.9 L1170,906.1 L1169,906.4 L1168,906.6 L1167,906.8 L1166,906.0 L1165,906.2 L1164,906.8 L1163,907.1 L1162,907.3 L1161,906.8 L1160,907.2 L1159,904.9 L1158,904.8 L1157,904.8 L1156,904.8 L1155,904.9 L1154,904.8 L1153,904.8 L1152,904.9 L1151,904.8 L1150,904.8 L1149,904.9 L1148,905.0 L1147,904.8 L1146,905.1 L1145,905.2 L1144,905.3 L1143,905.1 L1142,905.3 L1141,905.4 L1140,905.2 L1139,905.1 L1138,905.5 L1137,905.3 L1136,905.3 L1135,905.6 L1134,905.1 L1133,905.7 L1132,905.8 L1131,905.2 L1130,905.7 L1129,905.8 L1128,905.5 L1127,905.8 L1126,905.5 L1125,905.4 L1124,905.6 L1123,905.5 L1122,905.7 L1121,906.1 L1120,905.8 L1119,906.1 L1118,906.2 L1117,905.9 L1116,906.1 L1115,906.3 L1114,906.3 L1113,906.3 L1112,906.9 L1111,906.0 L1110,906.7 L1109,906.6 L1108,906.3 L1107,905.2 L1106,905.1 L1105,905.5 L1104,905.1 L1103,905.5 L1102,905.4 L1101,905.1 L1100,905.6 L1099,905.5 L1098,905.8 L1097,905.5 L1096,905.8 L1095,905.5 L1094,905.6 L1093,905.9 L1092,905.4 L1091,905.4 L1090,905.6 L1089,905.5 L1088,905.4 L1087,905.7 L1086,905.6 L1085,906.0 L1084,905.9 L1083,905.5 L1082,906.3 L1081,906.2 L1080,906.1 L1079,906.1 L1078,906.5 L1077,906.0 L1076,906.1 L1075,906.2 L1074,906.3 L1073,906.1 L1072,906.4 L1071,906.7 L1070,906.1 L1069,906.5 L1068,906.6 L1067,906.3 L1066,906.0 L1065,906.5 L1064,906.4 L1063,906.1 L1062,906.9 L1061,906.6 L1060,907.1 L1059,907.1 L1058,907.1 L1057,907.4 L1056,907.4 L1055,905.9 L1054,904.8 L1053,904.8 L1052,904.8 L1051,904.8 L1050,904.8 L1049,904.8 L1048,904.8 L1047,904.8 L1046,904.8 L1045,904.8 L1044,904.8 L1043,904.8 L1042,904.8 L1041,904.8 L1040,904.8 L1039,904.8 L1038,904.8 L1037,904.8 L1036,904.8 L1035,904.8 L1034,904.8 L1033,904.8 L1032,904.8 L1031,904.8 L1030,904.8 L1029,904.8 L1028,904.8 L1027,904.8 L1026,904.8 L1025,904.8 L1024,904.8 L1023,904.8 L1022,904.8 L1021,904.8 L1020,904.8 L1019,904.8 L1018,904.8 L1017,904.8 L1016,904.8 L1015,904.8 L1014,904.8 L1013,904.8 L1012,904.8 L1011,904.8 L1010,904.8 L1009,904.8 L1008,904.8 L1007,904.8 L1006,904.8 L1005,904.8 L1004,904.8 L1003,904.8 L1002,904.8 L1001,904.8 L1000,904.8 L999,904.8 L998,904.8 L997,904.8 L996,904.8 L995,904.8 L994,904.8 L993,904.8 L992,904.8 L991,904.8 L990,904.8 L989,904.8 L988,904.8 L987,904.8 L986,904.8 L985,904.8 L984,904.8 L983,904.8 L982,904.8 L981,904.8 L980,904.8 L979,904.8 L978,904.8 L977,904.8 L976,904.8 L975,904.8 L974,904.8 L973,904.8 L972,904.8 L971,904.8 L970,904.8 L969,904.8 L968,904.8 L967,904.8 L966,904.8 L965,904.8 L964,904.8 L963,904.8 L962,904.8 L961,904.8 L960,904.8 L959,904.8 L958,904.8 L957,904.8 L956,904.8 L955,904.8 L954,904.8 L953,904.8 L952,904.8 L951,904.8 L950,904.8 L949,904.8 L948,904.8 L947,904.8 L946,904.8 L945,904.8 L944,904.8 L943,904.8 L942,904.8 L941,904.8 L940,904.8 L939,904.8 L938,904.8 L937,904.8 L936,904.8 L935,904.8 L934,904.8 L933,904.8 L932,904.8 L931,904.8 L930,904.8 L929,904.8 L928,904.8 L927,904.8 L926,904.8 L925,904.8 L924,904.8 L923,904.8 L922,904.8 L921,904.8 L920,904.8 L919,904.8 L918,904.8 L917,904.8 L916,904.8 L915,904.8 L914,904.8 L913,904.8 L912,904.8 L911,904.8 L910,904.8 L909,904.8 L908,904.8 L907,904.8 L906,904.8 L905,904.8 L904,904.8 L903,904.8 L902,904.8 L901,904.8 L900,904.8 L899,904.8 L898,904.8 L897,904.8 L896,904.8 L895,904.8 L894,904.8 L893,904.8 L892,904.8 L891,904.8 L890,904.8 L889,904.8 L888,904.8 L887,904.8 L886,904.8 L885,904.8 L884,904.8 L883,904.8 L882,904.8 L881,904.8 L880,904.8 L879,904.8 L878,904.8 L877,904.8 L876,904.8 L875,904.8 L874,904.8 L873,904.8 L872,904.8 L871,904.8 L870,904.8 L869,904.8 L868,904.8 L867,904.8 L866,904.8 L865,904.8 L864,904.8 L863,904.8 L862,904.8 L861,904.8 L860,904.8 L859,904.8 L858,904.8 L857,904.8 L856,904.8 L855,904.8 L854,904.8 L853,904.8 L852,904.8 L851,904.8 L850,904.8 L849,904.8 L848,904.8 L847,904.8 L846,904.8 L845,904.8 L844,904.8 L843,904.8 L842,904.8 L841,904.8 L840,904.8 L839,904.8 L838,904.8 L837,904.8 L836,904.8 L835,904.8 L834,904.8 L833,904.8 L832,904.8 L831,904.8 L830,904.8 L829,904.8 L828,904.8 L827,904.8 L826,904.8 L825,904.8 L824,904.8 L823,904.8 L822,904.8 L821,904.8 L820,904.8 L819,904.8 L818,904.8 L817,904.8 L816,904.8 L815,904.8 L814,904.8 L813,904.8 L812,904.8 L811,904.8 L810,904.8 L809,904.8 L808,904.8 L807,904.8 L806,904.8 L805,904.8 L804,904.8 L803,904.8 L802,904.8 L801,904.8 L800,904.8 L799,904.8 L798,904.8 L797,904.8 L796,904.8 L795,904.8 L794,904.8 L793,904.8 L792,904.8 L791,904.8 L790,904.8 L789,904.8 L788,904.8 L787,904.8 L786,904.8 L785,904.8 L784,904.8 L783,904.8 L782,904.8 L781,904.8 L780,904.8 L779,904.8 L778,904.8 L777,904.8 L776,904.8 L775,904.8 L774,904.8 L773,904.8 L772,904.8 L771,904.8 L770,904.8 L769,904.8 L768,904.8 L767,904.8 L766,904.8 L765,904.8 L764,904.8 L763,904.8 L762,904.8 L761,904.8 L760,904.8 L759,904.8 L758,904.8 L757,904.8 L756,904.8 L755,904.8 L754,904.8 L753,904.8 L752,904.8 L751,904.8 L750,904.8 L749,904.8 L748,904.8 L747,904.8 L746,904.8 L745,904.8 L744,904.8 L743,904.8 L742,904.8 L741,904.8 L740,904.8 L739,904.8 L738,904.8 L737,904.8 L736,904.8 L735,904.8 L734,904.8 L733,904.8 L732,904.8 L731,904.8 L730,904.8 L729,904.8 L728,904.8 L727,904.8 L726,904.8 L725,904.8 L724,904.8 L723,904.8 L722,904.8 L721,904.8 L720,904.8 L719,904.8 L718,904.8 L717,904.8 L716,904.8 L715,904.8 L714,904.8 L713,904.8 L712,904.8 L711,904.8 L710,904.8 L709,904.8 L708,904.8 L707,904.8 L706,904.8 L705,904.8 L704,904.8 L703,904.8 L702,904.8 L701,904.8 L700,904.8 L699,904.8 L698,904.8 L697,904.8 L696,904.8 L695,904.8 L694,904.8 L693,904.8 L692,904.8 L691,904.8 L690,904.8 L689,904.8 L688,904.8 L687,904.8 L686,904.8 L685,904.8 L684,904.8 L683,904.8 L682,904.8 L681,904.8 L680,904.8 L679,904.8 L678,904.8 L677,904.8 L676,904.8 L675,904.8 L674,904.8 L673,904.8 L672,904.8 L671,904.8 L670,904.8 L669,904.8 L668,904.8 L667,904.8 L666,904.8 L665,904.8 L664,904.8 L663,904.8 L662,904.8 L661,904.8 L660,904.8 L659,904.8 L658,904.8 L657,904.8 L656,904.8 L655,904.8 L654,904.8 L653,904.8 L652,904.8 L651,904.8 L650,904.8 L649,904.8 L648,904.8 L647,904.8 L646,904.8 L645,904.8 L644,904.8 L643,904.8 L642,904.8 L641,904.8 L640,904.8 L639,904.8 L638,904.8 L637,904.8 L636,904.8 L635,904.8 L634,904.8 L633,904.8 L632,904.8 L631,904.8 L630,904.8 L629,904.8 L628,904.8 L627,904.8 L626,904.8 L625,904.8 L624,904.8 L623,904.8 L622,904.8 L621,904.8 L620,904.8 L619,904.8 L618,904.8 L617,904.8 L616,904.8 L615,904.8 L614,904.8 L613,904.8 L612,904.8 L611,904.8 L610,904.8 L609,904.8 L608,904.8 L607,904.8 L606,904.8 L605,904.8 L604,904.8 L603,904.8 L602,904.8 L601,904.8 L600,904.8 L599,904.8 L598,904.8 L597,904.8 L596,904.8 L595,904.8 L594,904.8 L593,904.8 L592,904.8 L591,904.8 L590,904.8 L589,904.8 L588,904.8 L587,904.8 L586,904.8 L585,904.8 L584,904.8 Z" fill="#ecc9ff"/><rect x="584" y="965.4" width="988" height="130.2" rx="5" fill="#a614c9"/><path d="M584,1040.2 L585,1040.2 L586,1040.2 L587,1040.2 L588,1040.2 L589,1040.2 L590,1040.2 L591,1040.2 L592,1040.2 L593,1040.2 L594,1040.2 L595,1040.2 L596,1040.2 L597,1040.2 L598,1040.2 L599,1040.2 L600,1040.2 L601,1040.2 L602,1040.2 L603,1040.2 L604,1040.2 L605,1040.2 L606,1040.2 L607,1040.2 L608,1040.2 L609,1040.2 L610,1040.2 L611,1040.2 L612,1040.2 L613,1040.2 L614,1040.2 L615,1040.2 L616,1040.2 L617,1040.2 L618,1040.2 L619,1040.2 L620,1040.2 L621,1040.2 L622,1040.2 L623,1040.2 L624,1040.2 L625,1040.2 L626,1040.2 L627,1040.2 L628,1040.2 L629,1040.2 L630,1040.2 L631,1040.2 L632,1040.2 L633,1040.2 L634,1037.8 L635,1036.3 L636,1033.2 L637,1032.5 L638,1031.2 L639,1034.0 L640,1038.0 L641,1037.1 L642,1035.0 L643,1030.9 L644,1033.1 L645,1034.7 L646,1036.5 L647,1038.2 L648,1035.0 L649,1031.9 L650,1031.1 L651,1033.9 L652,1035.4 L653,1037.7 L654,1036.9 L655,1034.9 L656,1032.8 L657,1032.8 L658,1034.2 L659,1037.8 L660,1038.1 L661,1035.7 L662,1032.3 L663,1031.2 L664,1033.9 L665,1036.2 L666,1038.0 L667,1036.3 L668,1034.3 L669,1032.8 L670,1031.8 L671,1035.1 L672,1038.1 L673,1037.4 L674,1035.7 L675,1031.4 L676,1032.7 L677,1034.3 L678,1037.1 L679,1038.7 L680,1035.9 L681,1034.0 L682,1033.1 L683,1032.8 L684,1036.8 L685,1038.5 L686,1036.9 L687,1032.1 L688,1029.5 L689,1028.8 L690,1033.0 L691,1035.4 L692,1035.9 L693,1034.2 L694,1029.8 L695,1027.7 L696,1031.2 L697,1033.9 L698,1037.3 L699,1035.4 L700,1030.8 L701,1028.4 L702,1030.4 L703,1032.9 L704,1036.4 L705,1036.2 L706,1032.6 L707,1028.4 L708,1028.7 L709,1031.9 L710,1035.0 L711,1037.7 L712,1033.7 L713,1031.9 L714,1029.0 L715,1031.7 L716,1034.5 L717,1037.1 L718,1035.4 L719,1031.5 L720,1030.8 L721,1030.2 L722,1033.8 L723,1036.4 L724,1037.1 L725,1034.9 L726,1030.5 L727,1029.2 L728,1031.7 L729,1034.7 L730,1038.0 L731,1036.0 L732,1033.4 L733,1030.2 L734,1031.2 L735,1034.2 L736,1037.5 L737,1036.3 L738,1034.5 L739,1029.5 L740,1023.9 L741,1027.8 L742,1032.7 L743,1036.1 L744,1032.5 L745,1027.3 L746,1026.8 L747,1027.4 L748,1031.2 L749,1035.8 L750,1034.2 L751,1028.3 L752,1027.2 L753,1024.1 L754,1030.9 L755,1035.2 L756,1036.0 L757,1030.3 L758,1025.1 L759,1024.0 L760,1030.0 L761,1033.3 L762,1036.6 L763,1033.9 L764,1026.6 L765,1028.0 L766,1027.1 L767,1030.6 L768,1034.9 L769,1035.7 L770,1030.7 L771,1025.8 L772,1028.7 L773,1030.7 L774,1033.6 L775,1036.9 L776,1033.0 L777,1029.2 L778,1027.0 L779,1030.2 L780,1034.0 L781,1035.8 L782,1034.1 L783,1029.5 L784,1028.5 L785,1028.8 L786,1031.1 L787,1036.0 L788,1036.2 L789,1031.1 L790,1029.1 L791,1028.2 L792,1026.1 L793,1032.7 L794,1037.0 L795,1033.3 L796,1027.7 L797,1027.8 L798,1027.7 L799,1030.7 L800,1035.1 L801,1034.9 L802,1029.2 L803,1027.0 L804,1027.0 L805,1028.5 L806,1034.6 L807,1036.0 L808,1033.4 L809,1029.0 L810,1028.0 L811,1028.3 L812,1033.7 L813,1036.9 L814,1035.2 L815,1030.4 L816,1028.2 L817,1028.0 L818,1029.8 L819,1035.2 L820,1035.7 L821,1033.1 L822,1029.0 L823,1029.4 L824,1029.3 L825,1034.5 L826,1037.3 L827,1035.3 L828,1031.3 L829,1029.0 L830,1029.5 L831,1031.6 L832,1036.2 L833,1036.3 L834,1032.4 L835,1030.2 L836,1026.9 L837,1031.8 L838,1034.9 L839,1036.8 L840,1033.0 L841,1031.9 L842,1029.4 L843,1030.7 L844,1035.0 L845,1036.3 L846,1035.4 L847,1030.3 L848,1028.4 L849,1030.6 L850,1032.5 L851,1036.5 L852,1037.3 L853,1034.1 L854,1029.6 L855,1030.9 L856,1031.9 L857,1035.2 L858,1037.5 L859,1035.8 L860,1031.1 L861,1030.6 L862,1030.1 L863,1033.6 L864,1037.6 L865,1037.1 L866,1033.9 L867,1030.0 L868,1030.8 L869,1033.1 L870,1035.6 L871,1037.9 L872,1035.3 L873,1032.3 L874,1031.5 L875,1033.2 L876,1036.0 L877,1037.6 L878,1036.3 L879,1032.5 L880,1029.6 L881,1032.0 L882,1033.6 L883,1036.5 L884,1037.8 L885,1034.3 L886,1031.5 L887,1029.9 L888,1032.1 L889,1036.5 L890,1038.0 L891,1036.7 L892,1033.3 L893,1031.9 L894,1033.5 L895,1035.2 L896,1037.9 L897,1037.3 L898,1034.9 L899,1033.2 L900,1032.3 L901,1034.1 L902,1037.3 L903,1038.0 L904,1036.3 L905,1034.2 L906,1032.5 L907,1033.5 L908,1036.5 L909,1038.2 L910,1036.8 L911,1034.3 L912,1032.0 L913,1034.0 L914,1035.2 L915,1037.8 L916,1038.4 L917,1035.8 L918,1034.4 L919,1032.7 L920,1034.0 L921,1036.8 L922,1038.7 L923,1037.2 L924,1035.3 L925,1033.3 L926,1032.7 L927,1035.8 L928,1038.4 L929,1037.7 L930,1036.0 L931,1033.6 L932,1033.1 L933,1034.2 L934,1037.7 L935,1038.5 L936,1036.0 L937,1033.8 L938,1033.1 L939,1034.2 L940,1036.8 L941,1038.7 L942,1037.9 L943,1034.8 L944,1032.9 L945,1034.3 L946,1035.2 L947,1038.5 L948,1038.8 L949,1036.4 L950,1034.8 L951,1034.2 L952,1034.3 L953,1037.8 L954,1039.1 L955,1037.8 L956,1035.0 L957,1034.7 L958,1035.7 L959,1036.6 L960,1038.7 L961,1038.5 L962,1036.3 L963,1034.3 L964,1034.4 L965,1035.7 L966,1038.0 L967,1038.7 L968,1036.7 L969,1035.6 L970,1034.8 L971,1034.7 L972,1037.5 L973,1038.8 L974,1038.0 L975,1035.9 L976,1034.0 L977,1034.4 L978,1037.1 L979,1038.5 L980,1038.9 L981,1037.0 L982,1035.6 L983,1035.4 L984,1035.7 L985,1037.9 L986,1039.4 L987,1038.2 L988,1036.4 L989,1035.7 L990,1035.6 L991,1037.7 L992,1039.2 L993,1039.0 L994,1037.5 L995,1035.2 L996,1036.1 L997,1036.8 L998,1038.3 L999,1039.2 L1000,1038.2 L1001,1035.6 L1002,1034.8 L1003,1036.9 L1004,1038.1 L1005,1039.3 L1006,1038.3 L1007,1037.0 L1008,1035.4 L1009,1036.3 L1010,1037.0 L1011,1039.0 L1012,1039.3 L1013,1037.4 L1014,1035.7 L1015,1035.3 L1016,1036.7 L1017,1038.5 L1018,1039.4 L1019,1038.3 L1020,1036.4 L1021,1035.5 L1022,1037.0 L1023,1038.0 L1024,1039.2 L1025,1039.2 L1026,1037.9 L1027,1037.1 L1028,1036.1 L1029,1036.8 L1030,1038.5 L1031,1039.4 L1032,1038.1 L1033,1037.0 L1034,1036.1 L1035,1037.1 L1036,1038.0 L1037,1039.3 L1038,1039.2 L1039,1037.3 L1040,1037.1 L1041,1037.3 L1042,1038.0 L1043,1039.1 L1044,1039.2 L1045,1038.5 L1046,1037.2 L1047,1037.3 L1048,1037.4 L1049,1038.8 L1050,1039.4 L1051,1038.9 L1052,1037.1 L1053,1036.3 L1054,1035.9 L1055,1030.0 L1056,1034.6 L1057,1033.6 L1058,1027.2 L1059,1025.6 L1060,1023.8 L1061,1028.4 L1062,1033.1 L1063,1036.5 L1064,1033.0 L1065,1029.2 L1066,1023.7 L1067,1029.0 L1068,1032.6 L1069,1036.9 L1070,1034.9 L1071,1031.8 L1072,1027.1 L1073,1029.4 L1074,1031.1 L1075,1036.1 L1076,1036.8 L1077,1032.8 L1078,1029.8 L1079,1029.4 L1080,1032.2 L1081,1035.6 L1082,1036.9 L1083,1035.3 L1084,1032.6 L1085,1030.6 L1086,1030.6 L1087,1032.7 L1088,1037.5 L1089,1036.2 L1090,1033.5 L1091,1031.1 L1092,1029.7 L1093,1033.4 L1094,1037.1 L1095,1037.8 L1096,1035.0 L1097,1032.2 L1098,1032.1 L1099,1031.6 L1100,1035.0 L1101,1037.6 L1102,1037.0 L1103,1033.4 L1104,1031.7 L1105,1033.6 L1106,1035.9 L1107,1033.8 L1108,1034.9 L1109,1030.3 L1110,1024.3 L1111,1021.0 L1112,1027.0 L1113,1031.9 L1114,1036.6 L1115,1033.1 L1116,1025.4 L1117,1027.3 L1118,1026.3 L1119,1030.1 L1120,1035.2 L1121,1034.7 L1122,1031.1 L1123,1026.1 L1124,1026.0 L1125,1029.7 L1126,1034.1 L1127,1037.4 L1128,1032.7 L1129,1030.5 L1130,1028.0 L1131,1031.4 L1132,1033.5 L1133,1037.9 L1134,1035.9 L1135,1033.4 L1136,1030.9 L1137,1031.5 L1138,1033.5 L1139,1036.7 L1140,1037.7 L1141,1034.6 L1142,1032.8 L1143,1032.5 L1144,1032.7 L1145,1036.8 L1146,1038.8 L1147,1037.0 L1148,1033.8 L1149,1033.8 L1150,1033.3 L1151,1036.1 L1152,1038.2 L1153,1038.4 L1154,1036.6 L1155,1035.1 L1156,1034.6 L1157,1029.0 L1158,1035.0 L1159,1036.1 L1160,1032.5 L1161,1028.5 L1162,1025.9 L1163,1026.3 L1164,1033.5 L1165,1035.9 L1166,1035.0 L1167,1029.5 L1168,1029.2 L1169,1026.1 L1170,1031.8 L1171,1035.0 L1172,1036.9 L1173,1033.1 L1174,1028.7 L1175,1029.9 L1176,1031.7 L1177,1034.5 L1178,1036.9 L1179,1035.4 L1180,1032.5 L1181,1030.2 L1182,1029.1 L1183,1034.7 L1184,1037.0 L1185,1036.9 L1186,1033.2 L1187,1031.9 L1188,1030.5 L1189,1032.3 L1190,1036.0 L1191,1037.7 L1192,1035.4 L1193,1032.4 L1194,1032.7 L1195,1032.0 L1196,1035.4 L1197,1038.2 L1198,1036.8 L1199,1034.4 L1200,1032.8 L1201,1033.5 L1202,1034.9 L1203,1037.6 L1204,1038.1 L1205,1036.6 L1206,1033.4 L1207,1033.3 L1208,1034.5 L1209,1037.0 L1210,1038.4 L1211,1037.6 L1212,1035.1 L1213,1032.7 L1214,1034.0 L1215,1036.8 L1216,1038.4 L1217,1037.9 L1218,1036.4 L1219,1034.0 L1220,1035.4 L1221,1035.3 L1222,1038.2 L1223,1039.2 L1224,1037.1 L1225,1035.4 L1226,1034.2 L1227,1035.3 L1228,1037.4 L1229,1039.2 L1230,1038.1 L1231,1037.3 L1232,1035.0 L1233,1035.5 L1234,1037.5 L1235,1038.7 L1236,1039.2 L1237,1037.7 L1238,1035.8 L1239,1036.5 L1240,1037.3 L1241,1038.4 L1242,1039.4 L1243,1038.6 L1244,1036.9 L1245,1036.5 L1246,1037.2 L1247,1037.9 L1248,1039.3 L1249,1039.1 L1250,1038.0 L1251,1036.5 L1252,1036.6 L1253,1038.2 L1254,1039.3 L1255,1039.4 L1256,1039.1 L1257,1037.8 L1258,1036.8 L1259,1037.4 L1260,1039.1 L1261,1039.4 L1262,1039.4 L1263,1038.0 L1264,1037.5 L1265,1037.3 L1266,1036.1 L1267,1037.4 L1268,1038.6 L1269,1036.1 L1270,1033.7 L1271,1033.7 L1272,1036.1 L1273,1037.5 L1274,1039.2 L1275,1038.4 L1276,1036.5 L1277,1035.7 L1278,1035.8 L1279,1037.9 L1280,1039.2 L1281,1038.9 L1282,1038.0 L1283,1037.1 L1284,1036.4 L1285,1037.7 L1286,1039.3 L1287,1039.4 L1288,1038.5 L1289,1037.6 L1290,1037.5 L1291,1038.2 L1292,1038.7 L1293,1039.4 L1294,1039.4 L1295,1038.7 L1296,1038.2 L1297,1038.3 L1298,1039.3 L1299,1039.4 L1300,1039.4 L1301,1039.2 L1302,1038.8 L1303,1038.7 L1304,1039.1 L1305,1039.4 L1306,1039.4 L1307,1039.4 L1308,1039.4 L1309,1039.0 L1310,1039.4 L1311,1039.4 L1312,1039.4 L1313,1039.4 L1314,1039.4 L1315,1039.3 L1316,1039.0 L1317,1036.4 L1318,1031.8 L1319,1034.9 L1320,1030.6 L1321,1027.2 L1322,1023.4 L1323,1026.5 L1324,1031.1 L1325,1034.7 L1326,1033.7 L1327,1027.1 L1328,1023.5 L1329,1026.4 L1330,1029.7 L1331,1035.3 L1332,1034.6 L1333,1031.6 L1334,1026.9 L1335,1026.2 L1336,1027.0 L1337,1032.3 L1338,1036.3 L1339,1033.3 L1340,1030.4 L1341,1024.6 L1342,1029.5 L1343,1032.3 L1344,1036.2 L1345,1035.1 L1346,1030.8 L1347,1028.6 L1348,1026.1 L1349,1029.3 L1350,1035.9 L1351,1036.7 L1352,1033.7 L1353,1030.3 L1354,1028.5 L1355,1030.7 L1356,1033.5 L1357,1037.0 L1358,1034.7 L1359,1030.5 L1360,1027.6 L1361,1030.2 L1362,1032.0 L1363,1036.2 L1364,1036.8 L1365,1032.7 L1366,1032.2 L1367,1030.2 L1368,1032.4 L1369,1035.3 L1370,1036.4 L1371,1031.3 L1372,1028.9 L1373,1025.8 L1374,1028.2 L1375,1031.5 L1376,1035.3 L1377,1035.9 L1378,1031.8 L1379,1026.6 L1380,1026.6 L1381,1029.5 L1382,1035.3 L1383,1036.3 L1384,1032.8 L1385,1028.6 L1386,1029.7 L1387,1030.1 L1388,1035.0 L1389,1036.7 L1390,1034.8 L1391,1030.9 L1392,1031.3 L1393,1030.6 L1394,1033.0 L1395,1036.6 L1396,1037.7 L1397,1033.6 L1398,1032.0 L1399,1030.7 L1400,1033.6 L1401,1035.8 L1402,1038.4 L1403,1036.7 L1404,1033.2 L1405,1032.3 L1406,1031.8 L1407,1035.7 L1408,1038.0 L1409,1038.0 L1410,1035.5 L1411,1033.1 L1412,1032.7 L1413,1034.8 L1414,1037.0 L1415,1038.8 L1416,1036.0 L1417,1035.0 L1418,1032.3 L1419,1034.5 L1420,1036.9 L1421,1038.7 L1422,1037.5 L1423,1034.9 L1424,1034.5 L1425,1035.6 L1426,1036.9 L1427,1035.0 L1428,1035.9 L1429,1032.0 L1430,1030.4 L1431,1028.2 L1432,1032.3 L1433,1035.5 L1434,1037.6 L1435,1034.1 L1436,1031.1 L1437,1028.5 L1438,1032.3 L1439,1034.3 L1440,1037.8 L1441,1037.2 L1442,1034.7 L1443,1030.2 L1444,1031.9 L1445,1033.7 L1446,1036.5 L1447,1037.7 L1448,1035.1 L1449,1033.1 L1450,1032.3 L1451,1032.6 L1452,1036.4 L1453,1038.6 L1454,1037.1 L1455,1035.4 L1456,1033.7 L1457,1027.9 L1458,1026.4 L1459,1033.2 L1460,1034.0 L1461,1028.3 L1462,1025.3 L1463,1019.3 L1464,1027.2 L1465,1031.1 L1466,1035.2 L1467,1031.7 L1468,1027.1 L1469,1025.1 L1470,1025.1 L1471,1030.3 L1472,1034.9 L1473,1034.7 L1474,1028.0 L1475,1024.9 L1476,1027.1 L1477,1028.7 L1478,1032.6 L1479,1036.7 L1480,1031.6 L1481,1025.2 L1482,1026.1 L1483,1027.2 L1484,1032.7 L1485,1036.6 L1486,1034.1 L1487,1029.5 L1488,1027.7 L1489,1027.4 L1490,1031.1 L1491,1035.1 L1492,1036.9 L1493,1033.5 L1494,1029.7 L1495,1028.8 L1496,1029.3 L1497,1034.6 L1498,1036.8 L1499,1034.8 L1500,1031.5 L1501,1028.1 L1502,1031.3 L1503,1032.2 L1504,1036.4 L1505,1036.6 L1506,1033.4 L1507,1029.1 L1508,1029.0 L1509,1032.1 L1510,1036.8 L1511,1037.3 L1512,1035.7 L1513,1031.4 L1514,1030.4 L1515,1030.8 L1516,1034.9 L1517,1038.3 L1518,1035.9 L1519,1032.9 L1520,1031.3 L1521,1033.3 L1522,1033.9 L1523,1037.4 L1524,1037.6 L1525,1034.3 L1526,1031.7 L1527,1033.4 L1528,1023.5 L1529,1031.4 L1530,1034.9 L1531,1031.9 L1532,1026.2 L1533,1023.4 L1534,1026.7 L1535,1030.5 L1536,1034.5 L1537,1035.2 L1538,1030.8 L1539,1023.8 L1540,1024.5 L1541,1028.8 L1542,1034.9 L1543,1036.8 L1544,1032.9 L1545,1026.3 L1546,1026.2 L1547,1026.9 L1548,1033.7 L1549,1036.7 L1550,1034.8 L1551,1029.7 L1552,1029.7 L1553,1027.2 L1554,1032.2 L1555,1032.7 L1556,1032.7 L1557,1026.4 L1558,1018.3 L1559,1014.9 L1560,1022.4 L1561,1028.9 L1562,1034.7 L1563,1029.0 L1564,1025.7 L1565,1018.6 L1566,1024.1 L1566,1060.6 L1565,1055.3 L1564,1048.8 L1563,1055.1 L1562,1065.1 L1561,1067.6 L1560,1062.5 L1559,1056.6 L1558,1049.6 L1557,1054.1 L1556,1062.8 L1555,1070.1 L1554,1058.0 L1553,1052.3 L1552,1048.3 L1551,1045.6 L1550,1049.8 L1549,1056.9 L1548,1057.2 L1547,1059.2 L1546,1052.5 L1545,1046.3 L1544,1050.1 L1543,1055.6 L1542,1061.8 L1541,1059.0 L1540,1054.8 L1539,1048.7 L1538,1048.2 L1537,1056.5 L1536,1063.2 L1535,1064.6 L1534,1059.4 L1533,1051.7 L1532,1048.4 L1531,1051.4 L1530,1061.6 L1529,1069.1 L1528,1062.2 L1527,1048.9 L1526,1044.9 L1525,1045.5 L1524,1049.1 L1523,1053.5 L1522,1054.9 L1521,1050.8 L1520,1048.2 L1519,1045.1 L1518,1049.9 L1517,1053.4 L1516,1054.9 L1515,1056.4 L1514,1050.8 L1513,1045.9 L1512,1047.4 L1511,1053.7 L1510,1056.0 L1509,1055.6 L1508,1053.2 L1507,1046.8 L1506,1047.5 L1505,1050.7 L1504,1057.4 L1503,1058.1 L1502,1054.1 L1501,1051.6 L1500,1046.8 L1499,1051.5 L1498,1058.9 L1497,1062.3 L1496,1059.2 L1495,1055.1 L1494,1049.0 L1493,1049.2 L1492,1054.7 L1491,1062.9 L1490,1063.0 L1489,1059.6 L1488,1049.4 L1487,1048.4 L1486,1055.0 L1485,1059.7 L1484,1061.2 L1483,1063.5 L1482,1055.0 L1481,1049.0 L1480,1052.5 L1479,1058.1 L1478,1063.1 L1477,1061.0 L1476,1060.7 L1475,1051.6 L1474,1049.6 L1473,1058.5 L1472,1064.1 L1471,1064.2 L1470,1066.0 L1469,1055.0 L1468,1048.9 L1467,1055.6 L1466,1066.9 L1465,1065.0 L1464,1066.1 L1463,1057.8 L1462,1051.7 L1461,1051.1 L1460,1062.1 L1459,1069.2 L1458,1071.5 L1457,1057.3 L1456,1044.4 L1455,1043.6 L1454,1046.1 L1453,1048.1 L1452,1049.3 L1451,1049.6 L1450,1046.0 L1449,1043.7 L1448,1045.1 L1447,1048.3 L1446,1050.0 L1445,1049.7 L1444,1049.6 L1443,1045.5 L1442,1045.4 L1441,1047.3 L1440,1050.4 L1439,1052.5 L1438,1052.2 L1437,1046.4 L1436,1044.3 L1435,1046.9 L1434,1050.7 L1433,1055.8 L1432,1051.9 L1431,1050.6 L1430,1046.4 L1429,1047.3 L1428,1051.9 L1427,1057.1 L1426,1049.5 L1425,1047.2 L1424,1044.5 L1423,1044.3 L1422,1045.7 L1421,1049.9 L1420,1049.8 L1419,1048.9 L1418,1046.9 L1417,1044.5 L1416,1045.7 L1415,1049.1 L1414,1050.5 L1413,1052.8 L1412,1049.0 L1411,1045.0 L1410,1044.8 L1409,1048.1 L1408,1053.5 L1407,1051.2 L1406,1049.6 L1405,1047.4 L1404,1044.7 L1403,1047.6 L1402,1050.3 L1401,1054.2 L1400,1054.3 L1399,1049.5 L1398,1046.1 L1397,1046.9 L1396,1052.7 L1395,1055.9 L1394,1057.3 L1393,1051.9 L1392,1047.4 L1391,1045.5 L1390,1048.9 L1389,1056.0 L1388,1059.8 L1387,1054.7 L1386,1050.0 L1385,1047.3 L1384,1049.0 L1383,1053.4 L1382,1060.1 L1381,1057.3 L1380,1055.6 L1379,1048.3 L1378,1048.0 L1377,1051.9 L1376,1062.1 L1375,1062.2 L1374,1058.9 L1373,1050.8 L1372,1048.1 L1371,1051.4 L1370,1058.3 L1369,1052.2 L1368,1050.0 L1367,1046.7 L1366,1044.0 L1365,1044.7 L1364,1047.4 L1363,1051.9 L1362,1049.8 L1361,1048.0 L1360,1046.3 L1359,1044.7 L1358,1048.0 L1357,1050.0 L1356,1052.8 L1355,1049.7 L1354,1047.8 L1353,1045.2 L1352,1046.0 L1351,1050.9 L1350,1051.3 L1349,1051.6 L1348,1050.1 L1347,1045.5 L1346,1044.8 L1345,1049.5 L1344,1053.2 L1343,1053.3 L1342,1052.0 L1341,1047.7 L1340,1044.7 L1339,1048.4 L1338,1053.8 L1337,1054.8 L1336,1052.6 L1335,1050.4 L1334,1046.2 L1333,1047.3 L1332,1051.2 L1331,1057.2 L1330,1056.1 L1329,1051.2 L1328,1048.3 L1327,1045.8 L1326,1049.0 L1325,1052.8 L1324,1059.7 L1323,1053.3 L1322,1051.9 L1321,1046.3 L1320,1049.5 L1319,1053.3 L1318,1058.0 L1317,1046.6 L1316,1042.6 L1315,1042.6 L1314,1042.6 L1313,1042.6 L1312,1043.1 L1311,1043.3 L1310,1042.9 L1309,1042.6 L1308,1042.6 L1307,1042.6 L1306,1042.9 L1305,1043.3 L1304,1043.2 L1303,1042.7 L1302,1042.6 L1301,1042.6 L1300,1042.7 L1299,1043.7 L1298,1044.0 L1297,1042.9 L1296,1042.6 L1295,1042.6 L1294,1042.7 L1293,1044.2 L1292,1044.7 L1291,1044.1 L1290,1043.1 L1289,1042.6 L1288,1042.8 L1287,1044.0 L1286,1045.0 L1285,1045.1 L1284,1044.3 L1283,1042.9 L1282,1042.7 L1281,1044.4 L1280,1046.2 L1279,1045.9 L1278,1045.5 L1277,1043.8 L1276,1042.9 L1275,1043.7 L1274,1045.7 L1273,1047.6 L1272,1046.7 L1271,1044.7 L1270,1043.3 L1269,1043.7 L1268,1045.9 L1267,1048.2 L1266,1048.6 L1265,1043.7 L1264,1042.6 L1263,1042.6 L1262,1042.9 L1261,1044.4 L1260,1044.9 L1259,1044.0 L1258,1043.0 L1257,1042.6 L1256,1042.6 L1255,1043.6 L1254,1044.4 L1253,1045.3 L1252,1044.0 L1251,1042.9 L1250,1042.6 L1249,1043.4 L1248,1044.5 L1247,1045.5 L1246,1044.7 L1245,1043.6 L1244,1042.6 L1243,1043.5 L1242,1044.4 L1241,1046.1 L1240,1045.1 L1239,1044.0 L1238,1042.6 L1237,1043.3 L1236,1045.1 L1235,1045.6 L1234,1046.6 L1233,1045.0 L1232,1043.2 L1231,1042.9 L1230,1044.7 L1229,1046.5 L1228,1046.7 L1227,1046.1 L1226,1044.3 L1225,1043.2 L1224,1043.5 L1223,1046.0 L1222,1046.7 L1221,1046.6 L1220,1046.3 L1219,1043.7 L1218,1043.4 L1217,1045.8 L1216,1047.2 L1215,1047.6 L1214,1046.8 L1213,1044.3 L1212,1043.5 L1211,1044.6 L1210,1047.6 L1209,1049.1 L1208,1047.5 L1207,1046.6 L1206,1044.1 L1205,1043.7 L1204,1047.1 L1203,1048.9 L1202,1048.6 L1201,1048.0 L1200,1045.3 L1199,1043.4 L1198,1045.5 L1197,1048.1 L1196,1049.5 L1195,1050.3 L1194,1047.1 L1193,1043.9 L1192,1044.9 L1191,1048.9 L1190,1050.4 L1189,1049.2 L1188,1048.3 L1187,1045.0 L1186,1044.5 L1185,1047.6 L1184,1052.0 L1183,1052.7 L1182,1050.8 L1181,1046.4 L1180,1044.0 L1179,1047.5 L1178,1050.3 L1177,1054.7 L1176,1052.5 L1175,1050.1 L1174,1045.5 L1173,1046.0 L1172,1050.4 L1171,1052.1 L1170,1053.7 L1169,1052.3 L1168,1046.8 L1167,1045.6 L1166,1050.1 L1165,1054.0 L1164,1054.0 L1163,1053.8 L1162,1049.6 L1161,1045.9 L1160,1047.4 L1159,1054.6 L1158,1057.6 L1157,1055.4 L1156,1045.7 L1155,1043.2 L1154,1043.6 L1153,1045.3 L1152,1047.3 L1151,1048.3 L1150,1046.3 L1149,1044.8 L1148,1043.4 L1147,1045.1 L1146,1047.7 L1145,1049.0 L1144,1048.1 L1143,1046.8 L1142,1044.2 L1141,1044.5 L1140,1046.3 L1139,1050.7 L1138,1049.1 L1137,1049.3 L1136,1045.2 L1135,1043.8 L1134,1047.0 L1133,1049.3 L1132,1052.4 L1131,1050.1 L1130,1046.3 L1129,1044.8 L1128,1045.9 L1127,1051.3 L1126,1052.9 L1125,1053.7 L1124,1049.0 L1123,1046.3 L1122,1045.5 L1121,1050.0 L1120,1054.2 L1119,1056.9 L1118,1053.6 L1117,1048.0 L1116,1045.8 L1115,1049.2 L1114,1053.5 L1113,1058.4 L1112,1058.3 L1111,1053.0 L1110,1046.8 L1109,1047.8 L1108,1055.1 L1107,1058.3 L1106,1049.0 L1105,1048.0 L1104,1044.6 L1103,1043.7 L1102,1046.3 L1101,1048.4 L1100,1050.0 L1099,1048.9 L1098,1046.1 L1097,1043.9 L1096,1045.6 L1095,1049.1 L1094,1049.9 L1093,1051.7 L1092,1047.9 L1091,1045.0 L1090,1044.7 L1089,1048.6 L1088,1050.0 L1087,1051.2 L1086,1049.0 L1085,1047.6 L1084,1044.2 L1083,1047.1 L1082,1050.6 L1081,1054.2 L1080,1053.7 L1079,1047.8 L1078,1045.3 L1077,1045.8 L1076,1048.8 L1075,1051.5 L1074,1053.8 L1073,1049.8 L1072,1046.4 L1071,1045.6 L1070,1047.8 L1069,1053.8 L1068,1056.2 L1067,1054.3 L1066,1049.2 L1065,1046.1 L1064,1048.0 L1063,1052.5 L1062,1054.5 L1061,1055.8 L1060,1053.0 L1059,1047.0 L1058,1046.0 L1057,1050.2 L1056,1058.5 L1055,1060.7 L1054,1045.7 L1053,1042.7 L1052,1042.6 L1051,1043.0 L1050,1044.4 L1049,1045.1 L1048,1044.9 L1047,1043.4 L1046,1042.6 L1045,1042.7 L1044,1043.6 L1043,1044.9 L1042,1044.5 L1041,1043.7 L1040,1043.0 L1039,1042.6 L1038,1043.4 L1037,1045.2 L1036,1045.3 L1035,1044.4 L1034,1043.7 L1033,1042.6 L1032,1043.0 L1031,1044.3 L1030,1045.6 L1029,1045.4 L1028,1044.0 L1027,1042.6 L1026,1042.8 L1025,1043.8 L1024,1044.7 L1023,1045.3 L1022,1044.6 L1021,1043.4 L1020,1042.6 L1019,1043.4 L1018,1044.6 L1017,1044.9 L1016,1044.7 L1015,1043.8 L1014,1042.6 L1013,1042.9 L1012,1044.0 L1011,1045.2 L1010,1046.0 L1009,1044.6 L1008,1043.2 L1007,1042.7 L1006,1043.4 L1005,1045.3 L1004,1046.0 L1003,1045.0 L1002,1043.7 L1001,1042.7 L1000,1043.6 L999,1045.0 L998,1046.7 L997,1045.5 L996,1045.1 L995,1043.3 L994,1042.7 L993,1044.8 L992,1046.1 L991,1046.5 L990,1044.9 L989,1043.5 L988,1042.6 L987,1043.7 L986,1045.7 L985,1046.9 L984,1046.2 L983,1044.2 L982,1043.1 L981,1043.0 L980,1044.3 L979,1046.1 L978,1046.3 L977,1045.3 L976,1043.7 L975,1043.1 L974,1044.4 L973,1046.6 L972,1047.3 L971,1046.5 L970,1044.7 L969,1042.6 L968,1043.8 L967,1045.0 L966,1047.1 L965,1047.6 L964,1045.6 L963,1043.5 L962,1042.9 L961,1044.7 L960,1047.3 L959,1048.1 L958,1045.5 L957,1044.3 L956,1042.6 L955,1044.4 L954,1046.9 L953,1048.1 L952,1047.1 L951,1045.5 L950,1043.2 L949,1043.6 L948,1044.9 L947,1048.1 L946,1046.9 L945,1045.7 L944,1044.3 L943,1042.9 L942,1045.2 L941,1047.5 L940,1048.2 L939,1047.5 L938,1045.2 L937,1043.5 L936,1044.6 L935,1046.8 L934,1048.6 L933,1047.1 L932,1045.5 L931,1043.7 L930,1043.5 L929,1046.1 L928,1047.2 L927,1048.2 L926,1047.0 L925,1045.3 L924,1043.2 L923,1044.7 L922,1047.1 L921,1049.4 L920,1047.3 L919,1046.3 L918,1043.9 L917,1043.8 L916,1046.9 L915,1047.4 L914,1048.4 L913,1046.5 L912,1045.0 L911,1043.6 L910,1045.5 L909,1047.9 L908,1047.9 L907,1047.9 L906,1045.8 L905,1043.6 L904,1044.4 L903,1047.2 L902,1047.8 L901,1048.6 L900,1046.8 L899,1044.7 L898,1043.9 L897,1046.5 L896,1048.4 L895,1050.0 L894,1047.1 L893,1045.1 L892,1044.0 L891,1045.0 L890,1048.4 L889,1049.1 L888,1049.7 L887,1046.1 L886,1044.0 L885,1045.2 L884,1047.4 L883,1048.8 L882,1051.2 L881,1048.9 L880,1045.8 L879,1043.7 L878,1047.2 L877,1048.9 L876,1050.5 L875,1049.3 L874,1046.3 L873,1044.1 L872,1045.8 L871,1048.0 L870,1049.9 L869,1050.6 L868,1047.8 L867,1044.7 L866,1044.6 L865,1046.9 L864,1048.9 L863,1050.5 L862,1048.2 L861,1045.8 L860,1044.1 L859,1046.7 L858,1049.8 L857,1052.8 L856,1050.1 L855,1047.0 L854,1044.6 L853,1045.8 L852,1048.2 L851,1050.8 L850,1050.7 L849,1049.7 L848,1046.8 L847,1044.2 L846,1049.0 L845,1053.1 L844,1050.9 L843,1050.5 L842,1048.0 L841,1044.6 L840,1046.0 L839,1050.9 L838,1053.1 L837,1051.1 L836,1049.2 L835,1045.3 L834,1044.6 L833,1048.4 L832,1053.1 L831,1053.6 L830,1050.1 L829,1046.2 L828,1044.2 L827,1046.3 L826,1052.2 L825,1053.1 L824,1053.0 L823,1048.9 L822,1045.3 L821,1045.9 L820,1048.6 L819,1051.7 L818,1052.5 L817,1049.2 L816,1046.4 L815,1044.6 L814,1047.3 L813,1053.7 L812,1053.0 L811,1050.9 L810,1048.1 L809,1045.1 L808,1047.7 L807,1051.8 L806,1055.6 L805,1054.4 L804,1049.3 L803,1045.8 L802,1046.4 L801,1050.3 L800,1052.1 L799,1056.5 L798,1051.8 L797,1049.0 L796,1045.8 L795,1049.0 L794,1051.5 L793,1053.5 L792,1055.8 L791,1047.2 L790,1044.8 L789,1045.5 L788,1047.8 L787,1053.0 L786,1052.2 L785,1050.5 L784,1046.4 L783,1044.5 L782,1047.5 L781,1052.2 L780,1052.3 L779,1052.3 L778,1048.5 L777,1044.4 L776,1046.2 L775,1051.7 L774,1054.5 L773,1052.1 L772,1049.3 L771,1046.7 L770,1045.2 L769,1048.2 L768,1051.6 L767,1054.6 L766,1050.0 L765,1047.6 L764,1045.2 L763,1047.9 L762,1052.3 L761,1053.2 L760,1052.2 L759,1048.6 L758,1045.1 L757,1046.8 L756,1049.6 L755,1053.8 L754,1053.1 L753,1051.7 L752,1046.6 L751,1045.1 L750,1049.5 L749,1052.8 L748,1053.7 L747,1051.7 L746,1048.1 L745,1045.9 L744,1046.8 L743,1051.6 L742,1055.6 L741,1053.8 L740,1051.1 L739,1044.5 L738,1043.8 L737,1047.0 L736,1047.7 L735,1049.2 L734,1047.8 L733,1045.3 L732,1043.9 L731,1046.1 L730,1048.9 L729,1048.6 L728,1047.8 L727,1047.2 L726,1044.4 L725,1044.6 L724,1047.3 L723,1050.1 L722,1050.8 L721,1046.9 L720,1044.5 L719,1044.3 L718,1046.9 L717,1048.0 L716,1048.9 L715,1050.2 L714,1046.4 L713,1043.6 L712,1045.8 L711,1048.4 L710,1050.5 L709,1050.5 L708,1047.8 L707,1044.8 L706,1043.8 L705,1047.9 L704,1050.8 L703,1051.9 L702,1050.1 L701,1046.7 L700,1044.3 L699,1046.3 L698,1048.6 L697,1050.2 L696,1049.0 L695,1047.4 L694,1045.0 L693,1045.0 L692,1048.0 L691,1049.3 L690,1050.8 L689,1048.5 L688,1045.9 L687,1043.9 L686,1046.5 L685,1049.0 L684,1050.8 L683,1048.6 L682,1046.6 L681,1043.7 L680,1045.4 L679,1049.2 L678,1051.7 L677,1050.9 L676,1049.0 L675,1045.0 L674,1044.0 L673,1046.5 L672,1050.6 L671,1049.6 L670,1050.2 L669,1045.8 L668,1044.5 L667,1045.5 L666,1049.5 L665,1049.8 L664,1051.5 L663,1046.6 L662,1044.8 L661,1045.6 L660,1047.3 L659,1052.2 L658,1050.3 L657,1048.5 L656,1045.8 L655,1044.3 L654,1047.8 L653,1050.8 L652,1051.1 L651,1050.0 L650,1046.5 L649,1044.6 L648,1045.6 L647,1050.2 L646,1050.0 L645,1050.4 L644,1049.2 L643,1045.8 L642,1045.0 L641,1048.0 L640,1051.6 L639,1051.9 L638,1050.2 L637,1047.2 L636,1044.6 L635,1046.0 L634,1051.1 L633,1041.8 L632,1041.8 L631,1041.8 L630,1041.8 L629,1041.8 L628,1041.8 L627,1041.8 L626,1041.8 L625,1041.8 L624,1041.8 L623,1041.8 L622,1041.8 L621,1041.8 L620,1041.8 L619,1041.8 L618,1041.8 L617,1041.8 L616,1041.8 L615,1041.8 L614,1041.8 L613,1041.8 L612,1041.8 L611,1041.8 L610,1041.8 L609,1041.8 L608,1041.8 L607,1041.8 L606,1041.8 L605,1041.8 L604,1041.8 L603,1041.8 L602,1041.8 L601,1041.8 L600,1041.8 L599,1041.8 L598,1041.8 L597,1041.8 L596,1041.8 L595,1041.8 L594,1041.8 L593,1041.8 L592,1041.8 L591,1041.8 L590,1041.8 L589,1041.8 L588,1041.8 L587,1041.8 L586,1041.8 L585,1041.8 L584,1041.8 Z" fill="#f3b2fb"/></svg><div style="position:absolute;left:589.5px;top:832px;white-space:nowrap;font-family:'Liberation Sans',sans-serif;font-size:11.5px;color:#f6dcff;letter-spacing:0.2px;-webkit-text-stroke:0.35px currentColor;">Bass</div><div style="position:absolute;left:589.5px;top:969px;white-space:nowrap;font-family:'Liberation Sans',sans-serif;font-size:11.5px;color:#f6dcff;letter-spacing:0.2px;-webkit-text-stroke:0.35px currentColor;">Keys</div><svg style="position:absolute;left:0px;top:0px;pointer-events:none;" width="1676" height="1100" viewBox="0 0 1676 1100"><rect x="1077.2" y="278" width="4" height="818" fill="#000" opacity="0.35"/><rect x="1078.4" y="270" width="1.6" height="826" fill="#ececec"/><path d="M1071.2 257.5 A3 3 0 0 1 1074.2 254.5 H1084.2 A3 3 0 0 1 1087.2 257.5 V272 L1079.2 278.5 L1071.2 272 Z" fill="#7b7b7d" stroke="#f0f0f0" stroke-width="1.4"/></svg><svg style="position:absolute;left:129px;top:1116px;" width="26" height="22" viewBox="0 0 26 22"><path d="M5 14.8 H4.2 A1.8 1.8 0 0 1 2.4 13 V4.2 A1.8 1.8 0 0 1 4.2 2.4 H16.8 A1.8 1.8 0 0 1 18.6 4.2 V6" stroke="#f2f2f2" stroke-width="1.6" fill="none"/><rect x="6.5" y="6.1" width="17.1" height="13.8" rx="2" fill="#f2f2f2"/><path d="M12.4 16.8 V10.6 L17.8 9.6 V15.2" stroke="#232327" stroke-width="1.3" fill="none"/><ellipse cx="11.3" cy="17" rx="1.5" ry="1.2" fill="#232327"/><ellipse cx="16.7" cy="15.4" rx="1.5" ry="1.2" fill="#232327"/></svg><svg style="position:absolute;left:181px;top:1118px;" width="20" height="19" viewBox="0 0 20 19"><rect x="1.6" y="1.6" width="16.4" height="6.4" rx="3.2" stroke="#f2f2f2" stroke-width="1.4" fill="none"/><ellipse cx="5.8" cy="4.8" rx="3" ry="2.2" fill="#f2f2f2"/><rect x="0.9" y="10.2" width="17.8" height="7.6" rx="3.8" fill="#f2f2f2"/><ellipse cx="14.2" cy="14" rx="2.8" ry="2.1" fill="#232327"/></svg><svg style="position:absolute;left:231px;top:1117px;" width="17" height="21" viewBox="0 0 17 21"><rect x="1.8" y="1.6" width="13.4" height="17.6" rx="2" stroke="#f2f2f2" stroke-width="1.5" fill="none"/><path d="M8.5 3.5 V17.3" stroke="#f2f2f2" stroke-width="1.3"/><ellipse cx="8.5" cy="8.6" rx="2.2" ry="3" fill="#232327" stroke="#f2f2f2" stroke-width="1.3"/></svg><svg style="position:absolute;left:776px;top:1116px;" width="22" height="22" viewBox="0 0 22 22"><path d="M6 18 L18 5.6" stroke="#f2f2f2" stroke-width="2.1" stroke-linecap="round"/><circle cx="18.3" cy="5.3" r="1.5" fill="#f2f2f2"/></svg><svg style="position:absolute;left:823.8px;top:1115.8px;" width="26" height="26" viewBox="0 0 26 26"><circle cx="13" cy="13" r="6.1" stroke="#f2f2f2" stroke-width="1.6" fill="none"/><path d="M13 13 V8.2" stroke="#f2f2f2" stroke-width="1.6" stroke-linecap="round"/><circle cx="13.00" cy="3.40" r="1.05" fill="#f2f2f2"/><circle cx="6.21" cy="6.21" r="1.05" fill="#f2f2f2"/><circle cx="19.79" cy="6.21" r="1.05" fill="#f2f2f2"/><circle cx="3.40" cy="13.00" r="1.05" fill="#f2f2f2"/><circle cx="22.60" cy="13.00" r="1.05" fill="#f2f2f2"/><circle cx="6.21" cy="19.79" r="1.05" fill="#f2f2f2"/><circle cx="19.79" cy="19.79" r="1.05" fill="#f2f2f2"/></svg><svg style="position:absolute;left:874px;top:1116px;" width="24" height="22" viewBox="0 0 24 22"><path d="M5 3.6 V18.6 M11.7 3.6 V18.6 M18.1 3.6 V18.6" stroke="#f2f2f2" stroke-width="1.5" stroke-linecap="round"/><ellipse cx="5" cy="13.2" rx="2.3" ry="3.3" fill="#232327" stroke="#f2f2f2" stroke-width="1.4"/><ellipse cx="11.7" cy="7.8" rx="2.3" ry="3.3" fill="#232327" stroke="#f2f2f2" stroke-width="1.4"/><ellipse cx="18.1" cy="13.2" rx="2.3" ry="3.3" fill="#232327" stroke="#f2f2f2" stroke-width="1.4"/></svg><svg style="position:absolute;left:1520px;top:1117.6px;" width="24" height="20" viewBox="0 0 24 20"><rect x="1" y="1.5" width="22" height="17.5" rx="2.5" fill="#f2f2f2"/><path d="M6.5 1.5 V19 M12 1.5 V19 M17.5 1.5 V19" stroke="#232327" stroke-width="1.3"/><rect x="4.8" y="1.5" width="3.3" height="10" fill="#232327"/><rect x="10.3" y="1.5" width="3.3" height="10" fill="#232327"/><rect x="15.8" y="1.5" width="3.3" height="10" fill="#232327"/><rect x="5.5" y="1.5" width="2" height="9" fill="#f2f2f2" opacity="0"/></svg><svg style="position:absolute;left:1530px;top:1145px;" width="36" height="34" viewBox="0 0 36 34"><path d="M8.2 27.8 A23 23 0 0 0 29.8 6.2" stroke="#f2f2f2" stroke-width="3.4" fill="none" stroke-linecap="round"/></svg></div></div></body></html>
